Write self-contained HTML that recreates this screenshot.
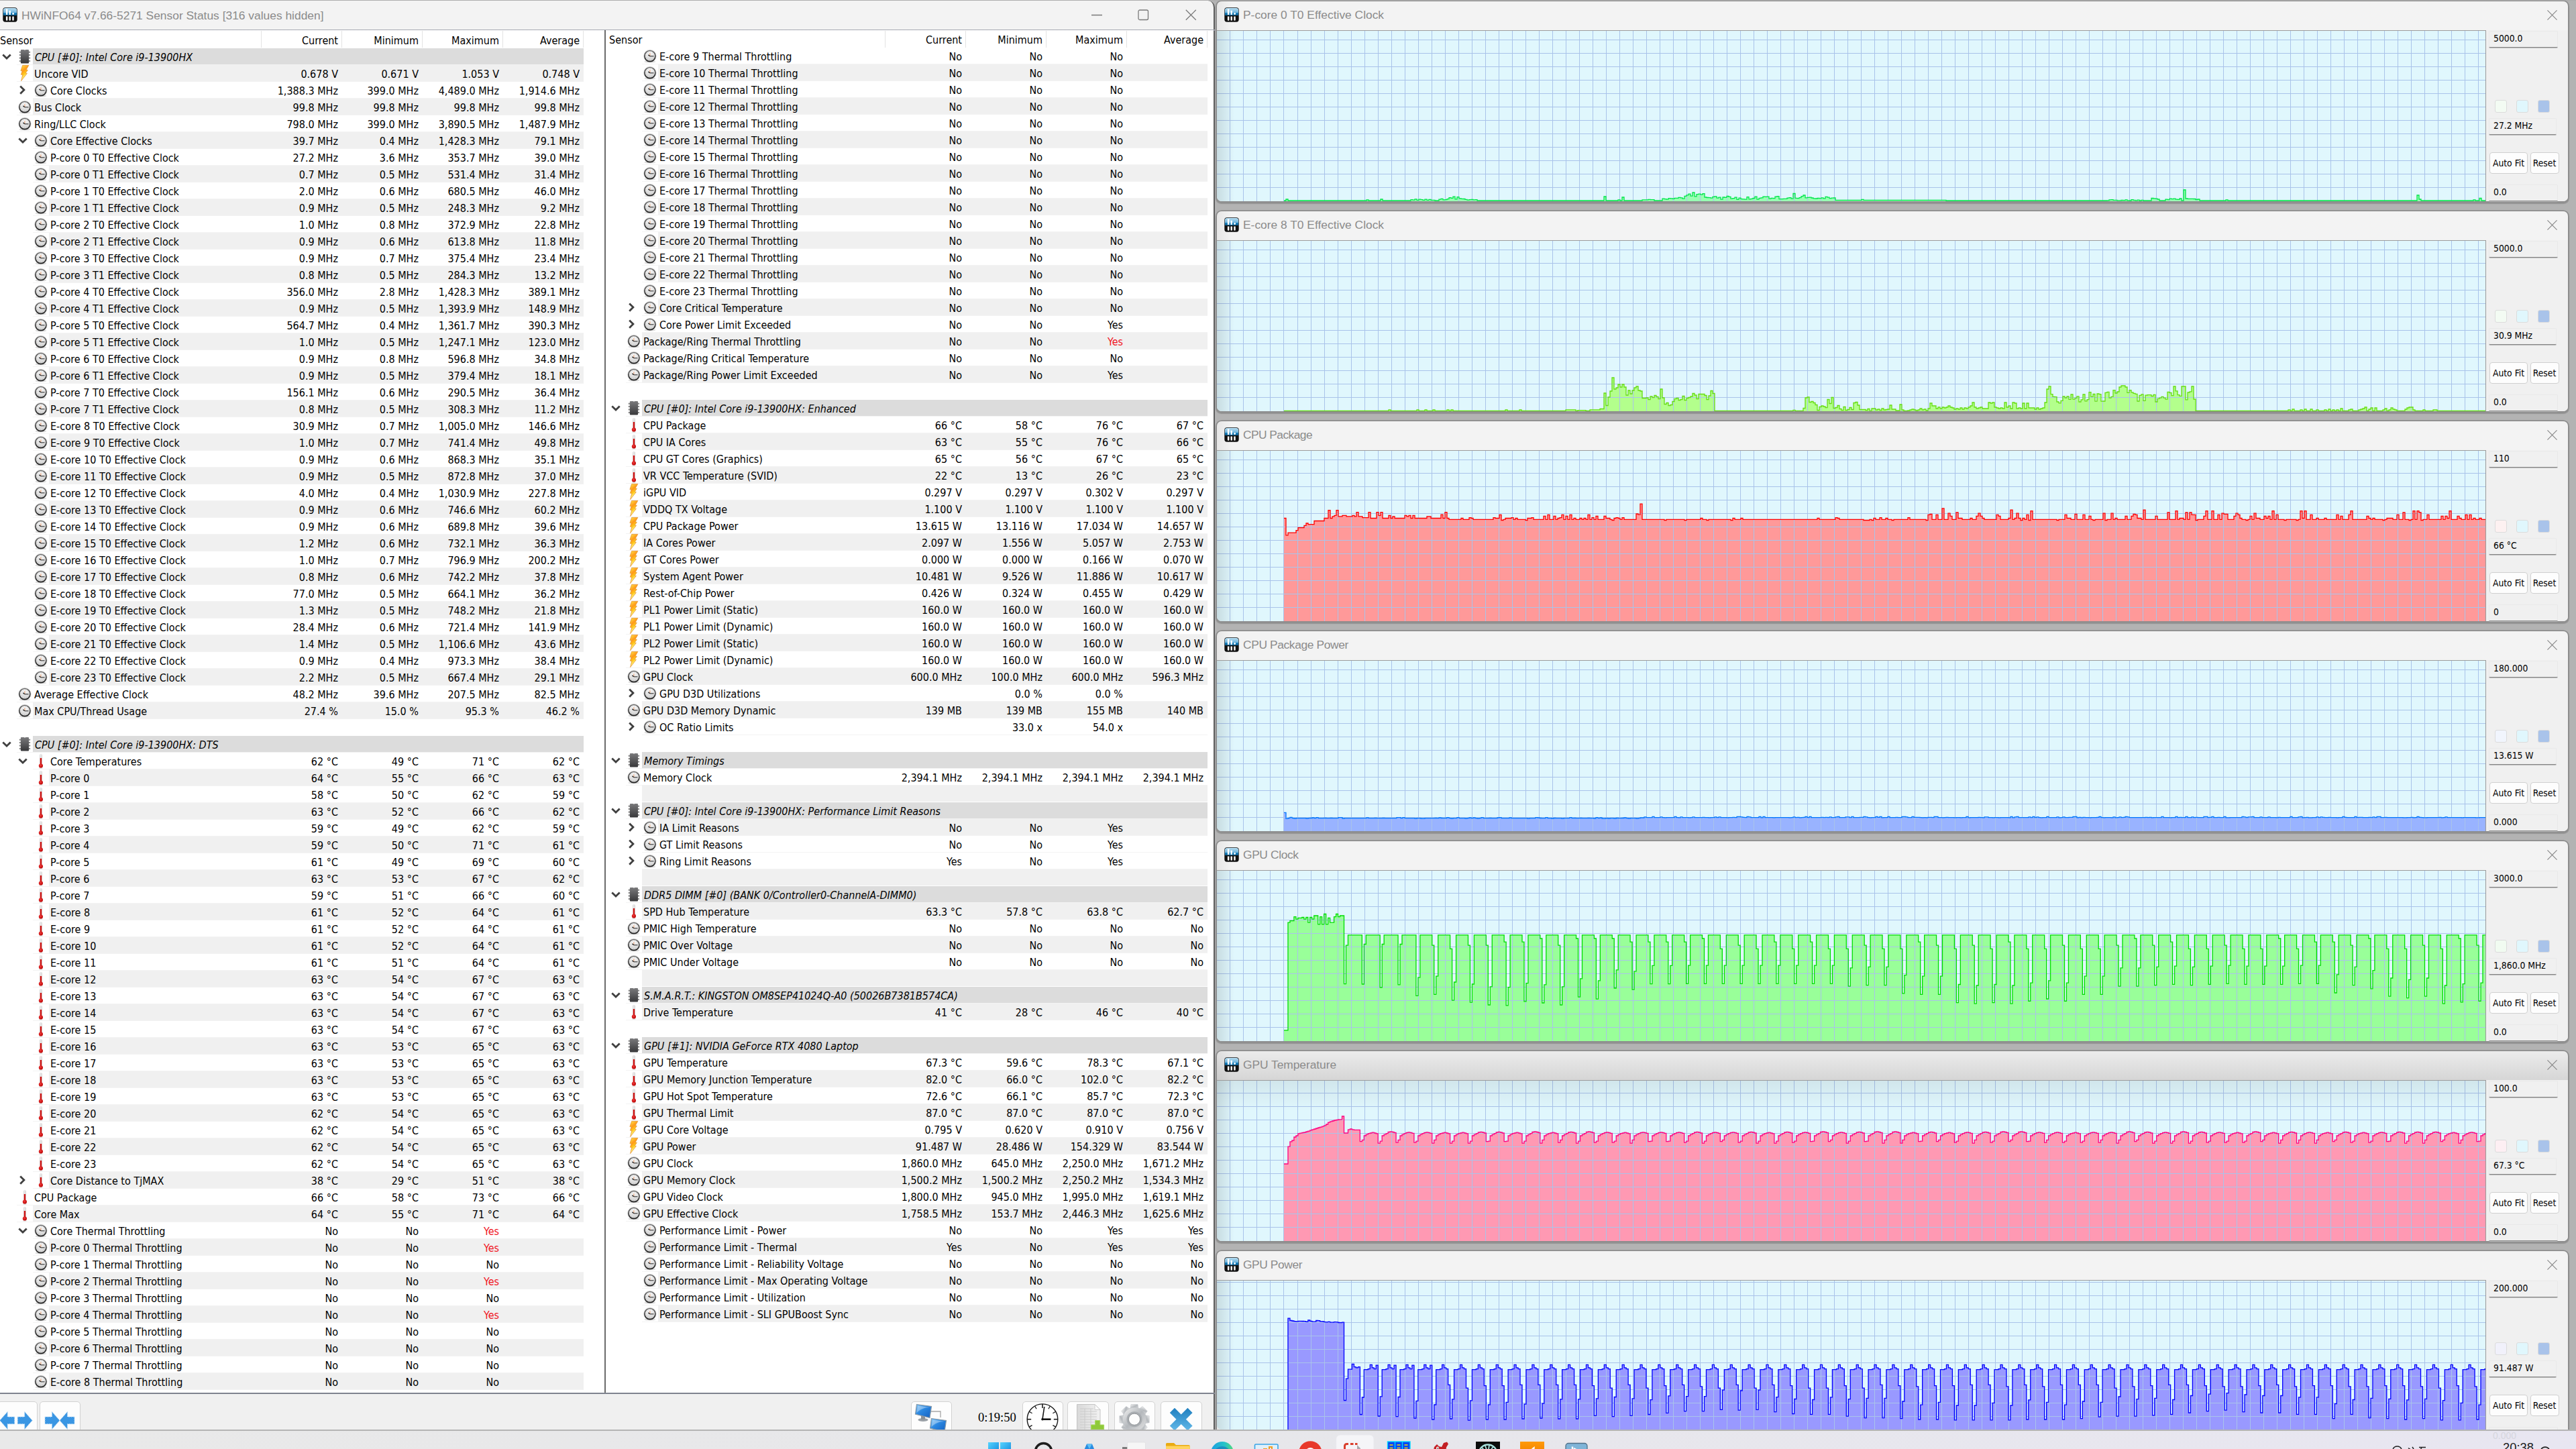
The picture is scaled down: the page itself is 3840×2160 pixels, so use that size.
<!DOCTYPE html>
<html><head><meta charset="utf-8"><title>HWiNFO64 Sensor Status</title>
<style>
*{box-sizing:border-box}
html,body{margin:0;padding:0}
body{width:3840px;height:2160px;position:relative;overflow:hidden;background:#b3b3b3;font-family:"DejaVu Sans Condensed","Liberation Sans",sans-serif;font-size:16px;color:#000}
.abs,.t,.bg,.sep,.ic,.gw,.gsv{position:absolute}
#topline{position:absolute;left:0;top:0;width:3840px;height:1px;background:#adadad;z-index:50}
/* sensor window */
#sw{position:absolute;left:0;top:1px;width:1811px;height:2131px;background:#f3f3f3;border-right:2px solid #5c5c5c;border-top-right-radius:10px;overflow:hidden}
#sw .title{position:absolute;left:32px;top:9.5px;font:17.4px/24px "Liberation Sans",sans-serif;color:#8b8b8b;white-space:pre}
.wb{position:absolute;stroke:#7a7a7a;stroke-width:1.3;fill:none}
#tline{position:absolute;left:0;top:44px;width:1811px;height:2px;background:linear-gradient(#b9bbc3,#6f7380)}
#lp{position:absolute;left:0;top:45px;width:901px;height:2031px;background:#fff}
#div{position:absolute;left:901px;top:45px;width:2px;height:2031px;background:#6b6b6b}
#rp{position:absolute;left:903px;top:45px;width:906px;height:2031px;background:#fff}
.hd{position:absolute;top:49px;height:24px;line-height:24px;white-space:pre}
.hs{position:absolute;top:46px;width:1px;height:25px;background:#e3e3e3}
.t{white-space:pre;line-height:24px;height:25px;padding-top:2px}
.t.i{font-style:italic}
.v{width:120px;text-align:right}
.rd{color:#f0141e}
.bg{height:24px}
.bg.g{background:#f0f0f0}
.bg.gg{background:#dcdcdc}
.sep{height:1px;background:#f3f3f3}
.ic{width:24px;height:25px;overflow:visible}
#bline{position:absolute;left:0;top:2076px;width:1811px;height:2px;background:linear-gradient(#8f93a0,#6f7380)}
#tb{position:absolute;left:0;top:2078px;width:1809px;height:53px;background:#f0f0f0}
.tbb{position:absolute;top:2089px;height:50px;background:#fdfdfd;border:1px solid #d2d2d2;border-radius:5px}
#tm{position:absolute;left:1458px;top:2100.5px;font:18.6px/24px "Liberation Serif",serif;white-space:pre}
/* graph windows */
.gw{left:1814px;width:2014px;background:linear-gradient(90deg,#e6e6e6,#f3f3f3 22px);border-radius:7px;box-shadow:0 0 0 1.7px #8c8c8c,0 2.5px 1px 1.5px #939393}
.gw .ti{position:absolute;width:22px;height:22px}
.shd{position:absolute;left:0;top:0;width:100%;height:43px;border-radius:7px 7px 0 0;background:linear-gradient(rgba(0,0,0,.03),rgba(0,0,0,.12))}
.gt{position:absolute;left:39px;top:8px;font:17.4px/24px "Liberation Sans",sans-serif;color:#8b8b8b;white-space:pre}
.gx{position:absolute;left:1983px;top:13px;width:15px;height:15px;stroke:#858585;stroke-width:1.2;fill:none;overflow:visible}
.side{position:absolute;left:1892px;top:43px;width:122px;background:#f0f0f0;border-bottom-right-radius:7px}
.fld{position:absolute;left:4px;width:103px;height:25px;line-height:20px;padding-left:6px;background:#f0f0f0;border:1px solid #e9e9e9;border-bottom:1px solid #868686;box-shadow:0 1px 0 #bdbdbd;font-size:13.8px;white-space:pre;border-radius:2px}
.sq{position:absolute;width:18px;height:19px;border:1px solid #dcdcdc;border-radius:3px}
.btn{position:absolute;height:32px;line-height:30px;text-align:center;background:#fdfdfd;border:1px solid #d0d0d0;border-radius:4px;font-size:13.8px;white-space:pre}
.gsv{box-sizing:content-box;left:1814px;width:1891px;background:#e0f7fd;border-right:1px solid #9a9a9a;border-top:1px solid #9c9c9c;border-bottom-left-radius:7px}
#task{position:absolute;left:0;top:2131px;width:3840px;height:29px;background:linear-gradient(90deg,#e9e9e9 0%,#e7e7ea 45%,#e8e6f1 100%);border-top:2px solid #b4b4b4;overflow:hidden}
</style></head>
<body>
<svg width="0" height="0" style="position:absolute">
<defs>
<linearGradient id="gface" x1="0" y1="0" x2="0" y2="1"><stop offset="0" stop-color="#fbfbfb"/><stop offset="1" stop-color="#cfcfcf"/></linearGradient>
<linearGradient id="gchip" x1="0" y1="0" x2="0" y2="1"><stop offset="0" stop-color="#7a7a7c"/><stop offset="1" stop-color="#38383a"/></linearGradient>
<linearGradient id="gbolt" x1="0" y1="0" x2="0.4" y2="1"><stop offset="0" stop-color="#ffe94a"/><stop offset="0.4" stop-color="#ff9a1a"/><stop offset="0.62" stop-color="#ffc81a"/><stop offset="0.8" stop-color="#fff07a"/><stop offset="1" stop-color="#f08a10"/></linearGradient>
<linearGradient id="gtube" x1="0" y1="0" x2="1" y2="0"><stop offset="0" stop-color="#c9c9c9"/><stop offset="0.5" stop-color="#f6f6f6"/><stop offset="1" stop-color="#bdbdbd"/></linearGradient>
<linearGradient id="ghw" x1="0" y1="0" x2="0" y2="1"><stop offset="0" stop-color="#b8def2"/><stop offset="0.62" stop-color="#6fb4dc"/><stop offset="0.64" stop-color="#1b86c4"/><stop offset="1" stop-color="#085a8c"/></linearGradient>
<radialGradient id="gbulb" cx="0.4" cy="0.35" r="0.7"><stop offset="0" stop-color="#f03c3c"/><stop offset="1" stop-color="#b80000"/></radialGradient>
<linearGradient id="gsh" x1="0" y1="0" x2="1" y2="0"><stop offset="0" stop-color="#000" stop-opacity=".11"/><stop offset="1" stop-color="#000" stop-opacity="0"/></linearGradient>
<linearGradient id="gsv2" x1="0" y1="0" x2="0" y2="1"><stop offset="0" stop-color="#000" stop-opacity=".07"/><stop offset="1" stop-color="#000" stop-opacity="0"/></linearGradient>
<linearGradient id="gring" x1="0" y1="0" x2="0" y2="1"><stop offset="0" stop-color="#6e6e6e"/><stop offset="1" stop-color="#1c1c1c"/></linearGradient>
<symbol id="cv" overflow="visible"><path d="M4.3 9.4L10 15.1L15.7 9.4" fill="none" stroke="#404040" stroke-width="2.8"/></symbol>
<symbol id="cr" overflow="visible"><path d="M6.2 6.4L11.9 12.1L6.2 17.8" fill="none" stroke="#404040" stroke-width="2.8"/></symbol>
<symbol id="clock" overflow="visible"><ellipse cx="12.9" cy="21" rx="8.5" ry="1.6" fill="#000" opacity=".13"/><circle cx="12.9" cy="12.6" r="8.1" fill="url(#gface)" stroke="url(#gring)" stroke-width="1.7"/><circle cx="12.9" cy="12.6" r="5.9" fill="none" stroke="#9a9a9a" stroke-width=".9" stroke-dasharray=".7 2.39" opacity=".8"/><circle cx="12.9" cy="12.5" r="9.2" fill="none" stroke="#9a9a9a" stroke-width=".6" opacity=".6"/><path d="M12.9 12.7V8.2" stroke="#f0a070" stroke-width="1"/><path d="M12.9 12.8H18.5" stroke="#333" stroke-width="1.1"/><path d="M12.9 12.7L10.4 10.9" stroke="#222" stroke-width="1.3"/></symbol>
<symbol id="therm" overflow="visible"><ellipse cx="12.9" cy="23" rx="3" ry=".8" fill="#000" opacity=".15"/><rect x="11.3" y="2.2" width="3.3" height="16" rx="1.6" fill="url(#gtube)" stroke="#d8d8d8" stroke-width=".4"/><rect x="11.75" y="8" width="2.4" height="10" fill="#cf1414"/><circle cx="12.9" cy="19.5" r="3.1" fill="url(#gbulb)"/></symbol>
<symbol id="bolt" overflow="visible"><path d="M9.6 .4L18.8 .4L15 7L17.4 7.4L14 12L16.4 12.4L7.6 23.6L9.8 14.2L7.4 14.2L9.2 8.6L6.9 8.6Z" fill="url(#gbolt)" stroke="#e28a24" stroke-width=".7" stroke-linejoin="round"/></symbol>
<symbol id="chip" overflow="visible"><circle cx="5.9" cy="5.8" r="1.25" fill="#8a8a8a"/><circle cx="5.9" cy="10.1" r="1.25" fill="#8a8a8a"/><circle cx="5.9" cy="14.5" r="1.25" fill="#8a8a8a"/><circle cx="5.9" cy="18.9" r="1.25" fill="#8a8a8a"/><circle cx="20" cy="5.8" r="1.25" fill="#8a8a8a"/><circle cx="20" cy="10.1" r="1.25" fill="#8a8a8a"/><circle cx="20" cy="14.5" r="1.25" fill="#8a8a8a"/><circle cx="20" cy="18.9" r="1.25" fill="#8a8a8a"/><rect x="6.9" y="2" width="12.1" height="20.5" rx="1" fill="url(#gchip)"/><path d="M11.6 2L13 3.3L14.4 2Z" fill="#c8c8c8"/></symbol>
<symbol id="hw" viewBox="0 0 22 22"><rect x=".3" y=".3" width="21.4" height="21.4" rx="3.6" fill="#101010"/><path d="M.9 12V4A3.2 3.2 0 0 1 4.1 .9H17.9A3.2 3.2 0 0 1 21.1 4V12Z" fill="url(#ghw)"/><path d="M4.9 2.4h2.5v8.5H4.9zM9.5 4.7h2.4v6.2H9.5z" fill="#fff"/><circle cx="15.6" cy="9.5" r="1.45" fill="#fff"/><path d="M4.9 13.4h2.5v5.2a1.25 1.25 0 0 1-2.5 0zM9.5 13.4h2.4v5.2a1.2 1.2 0 0 1-2.4 0zM14.3 13.4h2.4v5.2a1.2 1.2 0 0 1-2.4 0z" fill="#fff"/></symbol>
</defs></svg>

<div id="sw">
<svg class="ti abs" style="left:4px;top:10px;width:22px;height:22px"><use href="#hw"/></svg>
<span class="title">HWiNFO64 v7.66-5271 Sensor Status [316 values hidden]</span>
<svg class="wb" style="left:1627px;top:20px;width:17px;height:3px"><path d="M0 1.5H16"/></svg>
<svg class="wb" style="left:1696px;top:13px;width:17px;height:17px"><rect x="1" y="1" width="14.5" height="14.5" rx="2"/></svg>
<svg class="wb" style="left:1767px;top:13px;width:17px;height:17px"><path d="M.8.8L15.8 15.8M15.8.8L.8 15.8"/></svg>
</div>
<div id="tline"></div>
<div id="lp"></div><div id="div"></div><div id="rp"></div>

<!-- headers -->
<span class="hd" style="left:0">Sensor</span>
<span class="hd v" style="left:384px">Current</span><span class="hd v" style="left:504px">Minimum</span><span class="hd v" style="left:624px">Maximum</span><span class="hd v" style="left:744px">Average</span>
<i class="hs" style="left:389px"></i><i class="hs" style="left:509px"></i><i class="hs" style="left:629px"></i><i class="hs" style="left:749px"></i><i class="hs" style="left:869px"></i>
<span class="hd" style="left:908px;top:48px">Sensor</span>
<span class="hd v" style="left:1314px;top:48px">Current</span><span class="hd v" style="left:1434px;top:48px">Minimum</span><span class="hd v" style="left:1554px;top:48px">Maximum</span><span class="hd v" style="left:1674px;top:48px">Average</span>
<i class="hs" style="left:1319px"></i><i class="hs" style="left:1439px"></i><i class="hs" style="left:1559px"></i><i class="hs" style="left:1679px"></i><i class="hs" style="left:1799px"></i>

<!-- left rows -->
<div class="sep" style="left:25px;top:96px;width:845px"></div>
<div class="bg gg" style="left:49px;top:72px;width:821px"></div>
<svg class="ic" style="left:0px;top:72px"><use href="#cv"/></svg>
<svg class="ic" style="left:24px;top:72px"><use href="#chip"/></svg>
<span class="t i" style="left:52px;top:72px">CPU [#0]: Intel Core i9-13900HX</span>
<div class="sep" style="left:25px;top:121px;width:845px"></div>
<div class="bg g" style="left:49px;top:97px;width:821px"></div>
<svg class="ic" style="left:24px;top:97px"><use href="#bolt"/></svg>
<span class="t" style="left:51px;top:97px">Uncore VID</span>
<span class="t v" style="left:384px;top:97px">0.678 V</span>
<span class="t v" style="left:504px;top:97px">0.671 V</span>
<span class="t v" style="left:624px;top:97px">1.053 V</span>
<span class="t v" style="left:744px;top:97px">0.748 V</span>
<div class="sep" style="left:49px;top:146px;width:821px"></div>
<svg class="ic" style="left:24px;top:122px"><use href="#cr"/></svg>
<svg class="ic" style="left:48px;top:122px"><use href="#clock"/></svg>
<span class="t" style="left:75px;top:122px">Core Clocks</span>
<span class="t v" style="left:384px;top:122px">1,388.3 MHz</span>
<span class="t v" style="left:504px;top:122px">399.0 MHz</span>
<span class="t v" style="left:624px;top:122px">4,489.0 MHz</span>
<span class="t v" style="left:744px;top:122px">1,914.6 MHz</span>
<div class="sep" style="left:25px;top:171px;width:845px"></div>
<div class="bg g" style="left:49px;top:147px;width:821px"></div>
<svg class="ic" style="left:24px;top:147px"><use href="#clock"/></svg>
<span class="t" style="left:51px;top:147px">Bus Clock</span>
<span class="t v" style="left:384px;top:147px">99.8 MHz</span>
<span class="t v" style="left:504px;top:147px">99.8 MHz</span>
<span class="t v" style="left:624px;top:147px">99.8 MHz</span>
<span class="t v" style="left:744px;top:147px">99.8 MHz</span>
<div class="sep" style="left:25px;top:196px;width:845px"></div>
<svg class="ic" style="left:24px;top:172px"><use href="#clock"/></svg>
<span class="t" style="left:51px;top:172px">Ring/LLC Clock</span>
<span class="t v" style="left:384px;top:172px">798.0 MHz</span>
<span class="t v" style="left:504px;top:172px">399.0 MHz</span>
<span class="t v" style="left:624px;top:172px">3,890.5 MHz</span>
<span class="t v" style="left:744px;top:172px">1,487.9 MHz</span>
<div class="sep" style="left:49px;top:221px;width:821px"></div>
<div class="bg g" style="left:73px;top:197px;width:797px"></div>
<svg class="ic" style="left:24px;top:197px"><use href="#cv"/></svg>
<svg class="ic" style="left:48px;top:197px"><use href="#clock"/></svg>
<span class="t" style="left:75px;top:197px">Core Effective Clocks</span>
<span class="t v" style="left:384px;top:197px">39.7 MHz</span>
<span class="t v" style="left:504px;top:197px">0.4 MHz</span>
<span class="t v" style="left:624px;top:197px">1,428.3 MHz</span>
<span class="t v" style="left:744px;top:197px">79.1 MHz</span>
<div class="sep" style="left:49px;top:246px;width:821px"></div>
<svg class="ic" style="left:48px;top:222px"><use href="#clock"/></svg>
<span class="t" style="left:75px;top:222px">P-core 0 T0 Effective Clock</span>
<span class="t v" style="left:384px;top:222px">27.2 MHz</span>
<span class="t v" style="left:504px;top:222px">3.6 MHz</span>
<span class="t v" style="left:624px;top:222px">353.7 MHz</span>
<span class="t v" style="left:744px;top:222px">39.0 MHz</span>
<div class="sep" style="left:49px;top:271px;width:821px"></div>
<div class="bg g" style="left:73px;top:247px;width:797px"></div>
<svg class="ic" style="left:48px;top:247px"><use href="#clock"/></svg>
<span class="t" style="left:75px;top:247px">P-core 0 T1 Effective Clock</span>
<span class="t v" style="left:384px;top:247px">0.7 MHz</span>
<span class="t v" style="left:504px;top:247px">0.5 MHz</span>
<span class="t v" style="left:624px;top:247px">531.4 MHz</span>
<span class="t v" style="left:744px;top:247px">31.4 MHz</span>
<div class="sep" style="left:49px;top:296px;width:821px"></div>
<svg class="ic" style="left:48px;top:272px"><use href="#clock"/></svg>
<span class="t" style="left:75px;top:272px">P-core 1 T0 Effective Clock</span>
<span class="t v" style="left:384px;top:272px">2.0 MHz</span>
<span class="t v" style="left:504px;top:272px">0.6 MHz</span>
<span class="t v" style="left:624px;top:272px">680.5 MHz</span>
<span class="t v" style="left:744px;top:272px">46.0 MHz</span>
<div class="sep" style="left:49px;top:321px;width:821px"></div>
<div class="bg g" style="left:73px;top:297px;width:797px"></div>
<svg class="ic" style="left:48px;top:297px"><use href="#clock"/></svg>
<span class="t" style="left:75px;top:297px">P-core 1 T1 Effective Clock</span>
<span class="t v" style="left:384px;top:297px">0.9 MHz</span>
<span class="t v" style="left:504px;top:297px">0.5 MHz</span>
<span class="t v" style="left:624px;top:297px">248.3 MHz</span>
<span class="t v" style="left:744px;top:297px">9.2 MHz</span>
<div class="sep" style="left:49px;top:346px;width:821px"></div>
<svg class="ic" style="left:48px;top:322px"><use href="#clock"/></svg>
<span class="t" style="left:75px;top:322px">P-core 2 T0 Effective Clock</span>
<span class="t v" style="left:384px;top:322px">1.0 MHz</span>
<span class="t v" style="left:504px;top:322px">0.8 MHz</span>
<span class="t v" style="left:624px;top:322px">372.9 MHz</span>
<span class="t v" style="left:744px;top:322px">22.8 MHz</span>
<div class="sep" style="left:49px;top:371px;width:821px"></div>
<div class="bg g" style="left:73px;top:347px;width:797px"></div>
<svg class="ic" style="left:48px;top:347px"><use href="#clock"/></svg>
<span class="t" style="left:75px;top:347px">P-core 2 T1 Effective Clock</span>
<span class="t v" style="left:384px;top:347px">0.9 MHz</span>
<span class="t v" style="left:504px;top:347px">0.6 MHz</span>
<span class="t v" style="left:624px;top:347px">613.8 MHz</span>
<span class="t v" style="left:744px;top:347px">11.8 MHz</span>
<div class="sep" style="left:49px;top:396px;width:821px"></div>
<svg class="ic" style="left:48px;top:372px"><use href="#clock"/></svg>
<span class="t" style="left:75px;top:372px">P-core 3 T0 Effective Clock</span>
<span class="t v" style="left:384px;top:372px">0.9 MHz</span>
<span class="t v" style="left:504px;top:372px">0.7 MHz</span>
<span class="t v" style="left:624px;top:372px">375.4 MHz</span>
<span class="t v" style="left:744px;top:372px">23.4 MHz</span>
<div class="sep" style="left:49px;top:421px;width:821px"></div>
<div class="bg g" style="left:73px;top:397px;width:797px"></div>
<svg class="ic" style="left:48px;top:397px"><use href="#clock"/></svg>
<span class="t" style="left:75px;top:397px">P-core 3 T1 Effective Clock</span>
<span class="t v" style="left:384px;top:397px">0.8 MHz</span>
<span class="t v" style="left:504px;top:397px">0.5 MHz</span>
<span class="t v" style="left:624px;top:397px">284.3 MHz</span>
<span class="t v" style="left:744px;top:397px">13.2 MHz</span>
<div class="sep" style="left:49px;top:446px;width:821px"></div>
<svg class="ic" style="left:48px;top:422px"><use href="#clock"/></svg>
<span class="t" style="left:75px;top:422px">P-core 4 T0 Effective Clock</span>
<span class="t v" style="left:384px;top:422px">356.0 MHz</span>
<span class="t v" style="left:504px;top:422px">2.8 MHz</span>
<span class="t v" style="left:624px;top:422px">1,428.3 MHz</span>
<span class="t v" style="left:744px;top:422px">389.1 MHz</span>
<div class="sep" style="left:49px;top:471px;width:821px"></div>
<div class="bg g" style="left:73px;top:447px;width:797px"></div>
<svg class="ic" style="left:48px;top:447px"><use href="#clock"/></svg>
<span class="t" style="left:75px;top:447px">P-core 4 T1 Effective Clock</span>
<span class="t v" style="left:384px;top:447px">0.9 MHz</span>
<span class="t v" style="left:504px;top:447px">0.5 MHz</span>
<span class="t v" style="left:624px;top:447px">1,393.9 MHz</span>
<span class="t v" style="left:744px;top:447px">148.9 MHz</span>
<div class="sep" style="left:49px;top:496px;width:821px"></div>
<svg class="ic" style="left:48px;top:472px"><use href="#clock"/></svg>
<span class="t" style="left:75px;top:472px">P-core 5 T0 Effective Clock</span>
<span class="t v" style="left:384px;top:472px">564.7 MHz</span>
<span class="t v" style="left:504px;top:472px">0.4 MHz</span>
<span class="t v" style="left:624px;top:472px">1,361.7 MHz</span>
<span class="t v" style="left:744px;top:472px">390.3 MHz</span>
<div class="sep" style="left:49px;top:521px;width:821px"></div>
<div class="bg g" style="left:73px;top:497px;width:797px"></div>
<svg class="ic" style="left:48px;top:497px"><use href="#clock"/></svg>
<span class="t" style="left:75px;top:497px">P-core 5 T1 Effective Clock</span>
<span class="t v" style="left:384px;top:497px">1.0 MHz</span>
<span class="t v" style="left:504px;top:497px">0.5 MHz</span>
<span class="t v" style="left:624px;top:497px">1,247.1 MHz</span>
<span class="t v" style="left:744px;top:497px">123.0 MHz</span>
<div class="sep" style="left:49px;top:546px;width:821px"></div>
<svg class="ic" style="left:48px;top:522px"><use href="#clock"/></svg>
<span class="t" style="left:75px;top:522px">P-core 6 T0 Effective Clock</span>
<span class="t v" style="left:384px;top:522px">0.9 MHz</span>
<span class="t v" style="left:504px;top:522px">0.8 MHz</span>
<span class="t v" style="left:624px;top:522px">596.8 MHz</span>
<span class="t v" style="left:744px;top:522px">34.8 MHz</span>
<div class="sep" style="left:49px;top:571px;width:821px"></div>
<div class="bg g" style="left:73px;top:547px;width:797px"></div>
<svg class="ic" style="left:48px;top:547px"><use href="#clock"/></svg>
<span class="t" style="left:75px;top:547px">P-core 6 T1 Effective Clock</span>
<span class="t v" style="left:384px;top:547px">0.9 MHz</span>
<span class="t v" style="left:504px;top:547px">0.5 MHz</span>
<span class="t v" style="left:624px;top:547px">379.4 MHz</span>
<span class="t v" style="left:744px;top:547px">18.1 MHz</span>
<div class="sep" style="left:49px;top:596px;width:821px"></div>
<svg class="ic" style="left:48px;top:572px"><use href="#clock"/></svg>
<span class="t" style="left:75px;top:572px">P-core 7 T0 Effective Clock</span>
<span class="t v" style="left:384px;top:572px">156.1 MHz</span>
<span class="t v" style="left:504px;top:572px">0.6 MHz</span>
<span class="t v" style="left:624px;top:572px">290.5 MHz</span>
<span class="t v" style="left:744px;top:572px">36.4 MHz</span>
<div class="sep" style="left:49px;top:621px;width:821px"></div>
<div class="bg g" style="left:73px;top:597px;width:797px"></div>
<svg class="ic" style="left:48px;top:597px"><use href="#clock"/></svg>
<span class="t" style="left:75px;top:597px">P-core 7 T1 Effective Clock</span>
<span class="t v" style="left:384px;top:597px">0.8 MHz</span>
<span class="t v" style="left:504px;top:597px">0.5 MHz</span>
<span class="t v" style="left:624px;top:597px">308.3 MHz</span>
<span class="t v" style="left:744px;top:597px">11.2 MHz</span>
<div class="sep" style="left:49px;top:646px;width:821px"></div>
<svg class="ic" style="left:48px;top:622px"><use href="#clock"/></svg>
<span class="t" style="left:75px;top:622px">E-core 8 T0 Effective Clock</span>
<span class="t v" style="left:384px;top:622px">30.9 MHz</span>
<span class="t v" style="left:504px;top:622px">0.7 MHz</span>
<span class="t v" style="left:624px;top:622px">1,005.0 MHz</span>
<span class="t v" style="left:744px;top:622px">146.6 MHz</span>
<div class="sep" style="left:49px;top:671px;width:821px"></div>
<div class="bg g" style="left:73px;top:647px;width:797px"></div>
<svg class="ic" style="left:48px;top:647px"><use href="#clock"/></svg>
<span class="t" style="left:75px;top:647px">E-core 9 T0 Effective Clock</span>
<span class="t v" style="left:384px;top:647px">1.0 MHz</span>
<span class="t v" style="left:504px;top:647px">0.7 MHz</span>
<span class="t v" style="left:624px;top:647px">741.4 MHz</span>
<span class="t v" style="left:744px;top:647px">49.8 MHz</span>
<div class="sep" style="left:49px;top:696px;width:821px"></div>
<svg class="ic" style="left:48px;top:672px"><use href="#clock"/></svg>
<span class="t" style="left:75px;top:672px">E-core 10 T0 Effective Clock</span>
<span class="t v" style="left:384px;top:672px">0.9 MHz</span>
<span class="t v" style="left:504px;top:672px">0.6 MHz</span>
<span class="t v" style="left:624px;top:672px">868.3 MHz</span>
<span class="t v" style="left:744px;top:672px">35.1 MHz</span>
<div class="sep" style="left:49px;top:721px;width:821px"></div>
<div class="bg g" style="left:73px;top:697px;width:797px"></div>
<svg class="ic" style="left:48px;top:697px"><use href="#clock"/></svg>
<span class="t" style="left:75px;top:697px">E-core 11 T0 Effective Clock</span>
<span class="t v" style="left:384px;top:697px">0.9 MHz</span>
<span class="t v" style="left:504px;top:697px">0.5 MHz</span>
<span class="t v" style="left:624px;top:697px">872.8 MHz</span>
<span class="t v" style="left:744px;top:697px">37.0 MHz</span>
<div class="sep" style="left:49px;top:746px;width:821px"></div>
<svg class="ic" style="left:48px;top:722px"><use href="#clock"/></svg>
<span class="t" style="left:75px;top:722px">E-core 12 T0 Effective Clock</span>
<span class="t v" style="left:384px;top:722px">4.0 MHz</span>
<span class="t v" style="left:504px;top:722px">0.4 MHz</span>
<span class="t v" style="left:624px;top:722px">1,030.9 MHz</span>
<span class="t v" style="left:744px;top:722px">227.8 MHz</span>
<div class="sep" style="left:49px;top:771px;width:821px"></div>
<div class="bg g" style="left:73px;top:747px;width:797px"></div>
<svg class="ic" style="left:48px;top:747px"><use href="#clock"/></svg>
<span class="t" style="left:75px;top:747px">E-core 13 T0 Effective Clock</span>
<span class="t v" style="left:384px;top:747px">0.9 MHz</span>
<span class="t v" style="left:504px;top:747px">0.6 MHz</span>
<span class="t v" style="left:624px;top:747px">746.6 MHz</span>
<span class="t v" style="left:744px;top:747px">60.2 MHz</span>
<div class="sep" style="left:49px;top:796px;width:821px"></div>
<svg class="ic" style="left:48px;top:772px"><use href="#clock"/></svg>
<span class="t" style="left:75px;top:772px">E-core 14 T0 Effective Clock</span>
<span class="t v" style="left:384px;top:772px">0.9 MHz</span>
<span class="t v" style="left:504px;top:772px">0.6 MHz</span>
<span class="t v" style="left:624px;top:772px">689.8 MHz</span>
<span class="t v" style="left:744px;top:772px">39.6 MHz</span>
<div class="sep" style="left:49px;top:821px;width:821px"></div>
<div class="bg g" style="left:73px;top:797px;width:797px"></div>
<svg class="ic" style="left:48px;top:797px"><use href="#clock"/></svg>
<span class="t" style="left:75px;top:797px">E-core 15 T0 Effective Clock</span>
<span class="t v" style="left:384px;top:797px">1.2 MHz</span>
<span class="t v" style="left:504px;top:797px">0.6 MHz</span>
<span class="t v" style="left:624px;top:797px">732.1 MHz</span>
<span class="t v" style="left:744px;top:797px">36.3 MHz</span>
<div class="sep" style="left:49px;top:846px;width:821px"></div>
<svg class="ic" style="left:48px;top:822px"><use href="#clock"/></svg>
<span class="t" style="left:75px;top:822px">E-core 16 T0 Effective Clock</span>
<span class="t v" style="left:384px;top:822px">1.0 MHz</span>
<span class="t v" style="left:504px;top:822px">0.7 MHz</span>
<span class="t v" style="left:624px;top:822px">796.9 MHz</span>
<span class="t v" style="left:744px;top:822px">200.2 MHz</span>
<div class="sep" style="left:49px;top:871px;width:821px"></div>
<div class="bg g" style="left:73px;top:847px;width:797px"></div>
<svg class="ic" style="left:48px;top:847px"><use href="#clock"/></svg>
<span class="t" style="left:75px;top:847px">E-core 17 T0 Effective Clock</span>
<span class="t v" style="left:384px;top:847px">0.8 MHz</span>
<span class="t v" style="left:504px;top:847px">0.6 MHz</span>
<span class="t v" style="left:624px;top:847px">742.2 MHz</span>
<span class="t v" style="left:744px;top:847px">37.8 MHz</span>
<div class="sep" style="left:49px;top:896px;width:821px"></div>
<svg class="ic" style="left:48px;top:872px"><use href="#clock"/></svg>
<span class="t" style="left:75px;top:872px">E-core 18 T0 Effective Clock</span>
<span class="t v" style="left:384px;top:872px">77.0 MHz</span>
<span class="t v" style="left:504px;top:872px">0.5 MHz</span>
<span class="t v" style="left:624px;top:872px">664.1 MHz</span>
<span class="t v" style="left:744px;top:872px">36.2 MHz</span>
<div class="sep" style="left:49px;top:921px;width:821px"></div>
<div class="bg g" style="left:73px;top:897px;width:797px"></div>
<svg class="ic" style="left:48px;top:897px"><use href="#clock"/></svg>
<span class="t" style="left:75px;top:897px">E-core 19 T0 Effective Clock</span>
<span class="t v" style="left:384px;top:897px">1.3 MHz</span>
<span class="t v" style="left:504px;top:897px">0.5 MHz</span>
<span class="t v" style="left:624px;top:897px">748.2 MHz</span>
<span class="t v" style="left:744px;top:897px">21.8 MHz</span>
<div class="sep" style="left:49px;top:946px;width:821px"></div>
<svg class="ic" style="left:48px;top:922px"><use href="#clock"/></svg>
<span class="t" style="left:75px;top:922px">E-core 20 T0 Effective Clock</span>
<span class="t v" style="left:384px;top:922px">28.4 MHz</span>
<span class="t v" style="left:504px;top:922px">0.6 MHz</span>
<span class="t v" style="left:624px;top:922px">721.4 MHz</span>
<span class="t v" style="left:744px;top:922px">141.9 MHz</span>
<div class="sep" style="left:49px;top:971px;width:821px"></div>
<div class="bg g" style="left:73px;top:947px;width:797px"></div>
<svg class="ic" style="left:48px;top:947px"><use href="#clock"/></svg>
<span class="t" style="left:75px;top:947px">E-core 21 T0 Effective Clock</span>
<span class="t v" style="left:384px;top:947px">1.4 MHz</span>
<span class="t v" style="left:504px;top:947px">0.5 MHz</span>
<span class="t v" style="left:624px;top:947px">1,106.6 MHz</span>
<span class="t v" style="left:744px;top:947px">43.6 MHz</span>
<div class="sep" style="left:49px;top:996px;width:821px"></div>
<svg class="ic" style="left:48px;top:972px"><use href="#clock"/></svg>
<span class="t" style="left:75px;top:972px">E-core 22 T0 Effective Clock</span>
<span class="t v" style="left:384px;top:972px">0.9 MHz</span>
<span class="t v" style="left:504px;top:972px">0.4 MHz</span>
<span class="t v" style="left:624px;top:972px">973.3 MHz</span>
<span class="t v" style="left:744px;top:972px">38.4 MHz</span>
<div class="sep" style="left:49px;top:1021px;width:821px"></div>
<div class="bg g" style="left:73px;top:997px;width:797px"></div>
<svg class="ic" style="left:48px;top:997px"><use href="#clock"/></svg>
<span class="t" style="left:75px;top:997px">E-core 23 T0 Effective Clock</span>
<span class="t v" style="left:384px;top:997px">2.2 MHz</span>
<span class="t v" style="left:504px;top:997px">0.5 MHz</span>
<span class="t v" style="left:624px;top:997px">667.4 MHz</span>
<span class="t v" style="left:744px;top:997px">29.1 MHz</span>
<div class="sep" style="left:25px;top:1046px;width:845px"></div>
<svg class="ic" style="left:24px;top:1022px"><use href="#clock"/></svg>
<span class="t" style="left:51px;top:1022px">Average Effective Clock</span>
<span class="t v" style="left:384px;top:1022px">48.2 MHz</span>
<span class="t v" style="left:504px;top:1022px">39.6 MHz</span>
<span class="t v" style="left:624px;top:1022px">207.5 MHz</span>
<span class="t v" style="left:744px;top:1022px">82.5 MHz</span>
<div class="sep" style="left:25px;top:1071px;width:845px"></div>
<div class="bg g" style="left:49px;top:1047px;width:821px"></div>
<svg class="ic" style="left:24px;top:1047px"><use href="#clock"/></svg>
<span class="t" style="left:51px;top:1047px">Max CPU/Thread Usage</span>
<span class="t v" style="left:384px;top:1047px">27.4 %</span>
<span class="t v" style="left:504px;top:1047px">15.0 %</span>
<span class="t v" style="left:624px;top:1047px">95.3 %</span>
<span class="t v" style="left:744px;top:1047px">46.2 %</span>
<div class="sep" style="left:25px;top:1121px;width:845px"></div>
<div class="bg gg" style="left:49px;top:1097px;width:821px"></div>
<svg class="ic" style="left:0px;top:1097px"><use href="#cv"/></svg>
<svg class="ic" style="left:24px;top:1097px"><use href="#chip"/></svg>
<span class="t i" style="left:52px;top:1097px">CPU [#0]: Intel Core i9-13900HX: DTS</span>
<div class="sep" style="left:49px;top:1146px;width:821px"></div>
<svg class="ic" style="left:24px;top:1122px"><use href="#cv"/></svg>
<svg class="ic" style="left:48px;top:1122px"><use href="#therm"/></svg>
<span class="t" style="left:75px;top:1122px">Core Temperatures</span>
<span class="t v" style="left:384px;top:1122px">62 °C</span>
<span class="t v" style="left:504px;top:1122px">49 °C</span>
<span class="t v" style="left:624px;top:1122px">71 °C</span>
<span class="t v" style="left:744px;top:1122px">62 °C</span>
<div class="sep" style="left:49px;top:1171px;width:821px"></div>
<div class="bg g" style="left:73px;top:1147px;width:797px"></div>
<svg class="ic" style="left:48px;top:1147px"><use href="#therm"/></svg>
<span class="t" style="left:75px;top:1147px">P-core 0</span>
<span class="t v" style="left:384px;top:1147px">64 °C</span>
<span class="t v" style="left:504px;top:1147px">55 °C</span>
<span class="t v" style="left:624px;top:1147px">66 °C</span>
<span class="t v" style="left:744px;top:1147px">63 °C</span>
<div class="sep" style="left:49px;top:1196px;width:821px"></div>
<svg class="ic" style="left:48px;top:1172px"><use href="#therm"/></svg>
<span class="t" style="left:75px;top:1172px">P-core 1</span>
<span class="t v" style="left:384px;top:1172px">58 °C</span>
<span class="t v" style="left:504px;top:1172px">50 °C</span>
<span class="t v" style="left:624px;top:1172px">62 °C</span>
<span class="t v" style="left:744px;top:1172px">59 °C</span>
<div class="sep" style="left:49px;top:1221px;width:821px"></div>
<div class="bg g" style="left:73px;top:1197px;width:797px"></div>
<svg class="ic" style="left:48px;top:1197px"><use href="#therm"/></svg>
<span class="t" style="left:75px;top:1197px">P-core 2</span>
<span class="t v" style="left:384px;top:1197px">63 °C</span>
<span class="t v" style="left:504px;top:1197px">52 °C</span>
<span class="t v" style="left:624px;top:1197px">66 °C</span>
<span class="t v" style="left:744px;top:1197px">62 °C</span>
<div class="sep" style="left:49px;top:1246px;width:821px"></div>
<svg class="ic" style="left:48px;top:1222px"><use href="#therm"/></svg>
<span class="t" style="left:75px;top:1222px">P-core 3</span>
<span class="t v" style="left:384px;top:1222px">59 °C</span>
<span class="t v" style="left:504px;top:1222px">49 °C</span>
<span class="t v" style="left:624px;top:1222px">62 °C</span>
<span class="t v" style="left:744px;top:1222px">59 °C</span>
<div class="sep" style="left:49px;top:1271px;width:821px"></div>
<div class="bg g" style="left:73px;top:1247px;width:797px"></div>
<svg class="ic" style="left:48px;top:1247px"><use href="#therm"/></svg>
<span class="t" style="left:75px;top:1247px">P-core 4</span>
<span class="t v" style="left:384px;top:1247px">59 °C</span>
<span class="t v" style="left:504px;top:1247px">50 °C</span>
<span class="t v" style="left:624px;top:1247px">71 °C</span>
<span class="t v" style="left:744px;top:1247px">61 °C</span>
<div class="sep" style="left:49px;top:1296px;width:821px"></div>
<svg class="ic" style="left:48px;top:1272px"><use href="#therm"/></svg>
<span class="t" style="left:75px;top:1272px">P-core 5</span>
<span class="t v" style="left:384px;top:1272px">61 °C</span>
<span class="t v" style="left:504px;top:1272px">49 °C</span>
<span class="t v" style="left:624px;top:1272px">69 °C</span>
<span class="t v" style="left:744px;top:1272px">60 °C</span>
<div class="sep" style="left:49px;top:1321px;width:821px"></div>
<div class="bg g" style="left:73px;top:1297px;width:797px"></div>
<svg class="ic" style="left:48px;top:1297px"><use href="#therm"/></svg>
<span class="t" style="left:75px;top:1297px">P-core 6</span>
<span class="t v" style="left:384px;top:1297px">63 °C</span>
<span class="t v" style="left:504px;top:1297px">53 °C</span>
<span class="t v" style="left:624px;top:1297px">67 °C</span>
<span class="t v" style="left:744px;top:1297px">62 °C</span>
<div class="sep" style="left:49px;top:1346px;width:821px"></div>
<svg class="ic" style="left:48px;top:1322px"><use href="#therm"/></svg>
<span class="t" style="left:75px;top:1322px">P-core 7</span>
<span class="t v" style="left:384px;top:1322px">59 °C</span>
<span class="t v" style="left:504px;top:1322px">51 °C</span>
<span class="t v" style="left:624px;top:1322px">66 °C</span>
<span class="t v" style="left:744px;top:1322px">60 °C</span>
<div class="sep" style="left:49px;top:1371px;width:821px"></div>
<div class="bg g" style="left:73px;top:1347px;width:797px"></div>
<svg class="ic" style="left:48px;top:1347px"><use href="#therm"/></svg>
<span class="t" style="left:75px;top:1347px">E-core 8</span>
<span class="t v" style="left:384px;top:1347px">61 °C</span>
<span class="t v" style="left:504px;top:1347px">52 °C</span>
<span class="t v" style="left:624px;top:1347px">64 °C</span>
<span class="t v" style="left:744px;top:1347px">61 °C</span>
<div class="sep" style="left:49px;top:1396px;width:821px"></div>
<svg class="ic" style="left:48px;top:1372px"><use href="#therm"/></svg>
<span class="t" style="left:75px;top:1372px">E-core 9</span>
<span class="t v" style="left:384px;top:1372px">61 °C</span>
<span class="t v" style="left:504px;top:1372px">52 °C</span>
<span class="t v" style="left:624px;top:1372px">64 °C</span>
<span class="t v" style="left:744px;top:1372px">61 °C</span>
<div class="sep" style="left:49px;top:1421px;width:821px"></div>
<div class="bg g" style="left:73px;top:1397px;width:797px"></div>
<svg class="ic" style="left:48px;top:1397px"><use href="#therm"/></svg>
<span class="t" style="left:75px;top:1397px">E-core 10</span>
<span class="t v" style="left:384px;top:1397px">61 °C</span>
<span class="t v" style="left:504px;top:1397px">52 °C</span>
<span class="t v" style="left:624px;top:1397px">64 °C</span>
<span class="t v" style="left:744px;top:1397px">61 °C</span>
<div class="sep" style="left:49px;top:1446px;width:821px"></div>
<svg class="ic" style="left:48px;top:1422px"><use href="#therm"/></svg>
<span class="t" style="left:75px;top:1422px">E-core 11</span>
<span class="t v" style="left:384px;top:1422px">61 °C</span>
<span class="t v" style="left:504px;top:1422px">51 °C</span>
<span class="t v" style="left:624px;top:1422px">64 °C</span>
<span class="t v" style="left:744px;top:1422px">61 °C</span>
<div class="sep" style="left:49px;top:1471px;width:821px"></div>
<div class="bg g" style="left:73px;top:1447px;width:797px"></div>
<svg class="ic" style="left:48px;top:1447px"><use href="#therm"/></svg>
<span class="t" style="left:75px;top:1447px">E-core 12</span>
<span class="t v" style="left:384px;top:1447px">63 °C</span>
<span class="t v" style="left:504px;top:1447px">54 °C</span>
<span class="t v" style="left:624px;top:1447px">67 °C</span>
<span class="t v" style="left:744px;top:1447px">63 °C</span>
<div class="sep" style="left:49px;top:1496px;width:821px"></div>
<svg class="ic" style="left:48px;top:1472px"><use href="#therm"/></svg>
<span class="t" style="left:75px;top:1472px">E-core 13</span>
<span class="t v" style="left:384px;top:1472px">63 °C</span>
<span class="t v" style="left:504px;top:1472px">54 °C</span>
<span class="t v" style="left:624px;top:1472px">67 °C</span>
<span class="t v" style="left:744px;top:1472px">63 °C</span>
<div class="sep" style="left:49px;top:1521px;width:821px"></div>
<div class="bg g" style="left:73px;top:1497px;width:797px"></div>
<svg class="ic" style="left:48px;top:1497px"><use href="#therm"/></svg>
<span class="t" style="left:75px;top:1497px">E-core 14</span>
<span class="t v" style="left:384px;top:1497px">63 °C</span>
<span class="t v" style="left:504px;top:1497px">54 °C</span>
<span class="t v" style="left:624px;top:1497px">67 °C</span>
<span class="t v" style="left:744px;top:1497px">63 °C</span>
<div class="sep" style="left:49px;top:1546px;width:821px"></div>
<svg class="ic" style="left:48px;top:1522px"><use href="#therm"/></svg>
<span class="t" style="left:75px;top:1522px">E-core 15</span>
<span class="t v" style="left:384px;top:1522px">63 °C</span>
<span class="t v" style="left:504px;top:1522px">54 °C</span>
<span class="t v" style="left:624px;top:1522px">67 °C</span>
<span class="t v" style="left:744px;top:1522px">63 °C</span>
<div class="sep" style="left:49px;top:1571px;width:821px"></div>
<div class="bg g" style="left:73px;top:1547px;width:797px"></div>
<svg class="ic" style="left:48px;top:1547px"><use href="#therm"/></svg>
<span class="t" style="left:75px;top:1547px">E-core 16</span>
<span class="t v" style="left:384px;top:1547px">63 °C</span>
<span class="t v" style="left:504px;top:1547px">53 °C</span>
<span class="t v" style="left:624px;top:1547px">65 °C</span>
<span class="t v" style="left:744px;top:1547px">63 °C</span>
<div class="sep" style="left:49px;top:1596px;width:821px"></div>
<svg class="ic" style="left:48px;top:1572px"><use href="#therm"/></svg>
<span class="t" style="left:75px;top:1572px">E-core 17</span>
<span class="t v" style="left:384px;top:1572px">63 °C</span>
<span class="t v" style="left:504px;top:1572px">53 °C</span>
<span class="t v" style="left:624px;top:1572px">65 °C</span>
<span class="t v" style="left:744px;top:1572px">63 °C</span>
<div class="sep" style="left:49px;top:1621px;width:821px"></div>
<div class="bg g" style="left:73px;top:1597px;width:797px"></div>
<svg class="ic" style="left:48px;top:1597px"><use href="#therm"/></svg>
<span class="t" style="left:75px;top:1597px">E-core 18</span>
<span class="t v" style="left:384px;top:1597px">63 °C</span>
<span class="t v" style="left:504px;top:1597px">53 °C</span>
<span class="t v" style="left:624px;top:1597px">65 °C</span>
<span class="t v" style="left:744px;top:1597px">63 °C</span>
<div class="sep" style="left:49px;top:1646px;width:821px"></div>
<svg class="ic" style="left:48px;top:1622px"><use href="#therm"/></svg>
<span class="t" style="left:75px;top:1622px">E-core 19</span>
<span class="t v" style="left:384px;top:1622px">63 °C</span>
<span class="t v" style="left:504px;top:1622px">53 °C</span>
<span class="t v" style="left:624px;top:1622px">65 °C</span>
<span class="t v" style="left:744px;top:1622px">63 °C</span>
<div class="sep" style="left:49px;top:1671px;width:821px"></div>
<div class="bg g" style="left:73px;top:1647px;width:797px"></div>
<svg class="ic" style="left:48px;top:1647px"><use href="#therm"/></svg>
<span class="t" style="left:75px;top:1647px">E-core 20</span>
<span class="t v" style="left:384px;top:1647px">62 °C</span>
<span class="t v" style="left:504px;top:1647px">54 °C</span>
<span class="t v" style="left:624px;top:1647px">65 °C</span>
<span class="t v" style="left:744px;top:1647px">63 °C</span>
<div class="sep" style="left:49px;top:1696px;width:821px"></div>
<svg class="ic" style="left:48px;top:1672px"><use href="#therm"/></svg>
<span class="t" style="left:75px;top:1672px">E-core 21</span>
<span class="t v" style="left:384px;top:1672px">62 °C</span>
<span class="t v" style="left:504px;top:1672px">54 °C</span>
<span class="t v" style="left:624px;top:1672px">65 °C</span>
<span class="t v" style="left:744px;top:1672px">63 °C</span>
<div class="sep" style="left:49px;top:1721px;width:821px"></div>
<div class="bg g" style="left:73px;top:1697px;width:797px"></div>
<svg class="ic" style="left:48px;top:1697px"><use href="#therm"/></svg>
<span class="t" style="left:75px;top:1697px">E-core 22</span>
<span class="t v" style="left:384px;top:1697px">62 °C</span>
<span class="t v" style="left:504px;top:1697px">54 °C</span>
<span class="t v" style="left:624px;top:1697px">65 °C</span>
<span class="t v" style="left:744px;top:1697px">63 °C</span>
<div class="sep" style="left:49px;top:1746px;width:821px"></div>
<svg class="ic" style="left:48px;top:1722px"><use href="#therm"/></svg>
<span class="t" style="left:75px;top:1722px">E-core 23</span>
<span class="t v" style="left:384px;top:1722px">62 °C</span>
<span class="t v" style="left:504px;top:1722px">54 °C</span>
<span class="t v" style="left:624px;top:1722px">65 °C</span>
<span class="t v" style="left:744px;top:1722px">63 °C</span>
<div class="sep" style="left:49px;top:1771px;width:821px"></div>
<div class="bg g" style="left:73px;top:1747px;width:797px"></div>
<svg class="ic" style="left:24px;top:1747px"><use href="#cr"/></svg>
<svg class="ic" style="left:48px;top:1747px"><use href="#therm"/></svg>
<span class="t" style="left:75px;top:1747px">Core Distance to TjMAX</span>
<span class="t v" style="left:384px;top:1747px">38 °C</span>
<span class="t v" style="left:504px;top:1747px">29 °C</span>
<span class="t v" style="left:624px;top:1747px">51 °C</span>
<span class="t v" style="left:744px;top:1747px">38 °C</span>
<div class="sep" style="left:25px;top:1796px;width:845px"></div>
<svg class="ic" style="left:24px;top:1772px"><use href="#therm"/></svg>
<span class="t" style="left:51px;top:1772px">CPU Package</span>
<span class="t v" style="left:384px;top:1772px">66 °C</span>
<span class="t v" style="left:504px;top:1772px">58 °C</span>
<span class="t v" style="left:624px;top:1772px">73 °C</span>
<span class="t v" style="left:744px;top:1772px">66 °C</span>
<div class="sep" style="left:25px;top:1821px;width:845px"></div>
<div class="bg g" style="left:49px;top:1797px;width:821px"></div>
<svg class="ic" style="left:24px;top:1797px"><use href="#therm"/></svg>
<span class="t" style="left:51px;top:1797px">Core Max</span>
<span class="t v" style="left:384px;top:1797px">64 °C</span>
<span class="t v" style="left:504px;top:1797px">55 °C</span>
<span class="t v" style="left:624px;top:1797px">71 °C</span>
<span class="t v" style="left:744px;top:1797px">64 °C</span>
<div class="sep" style="left:49px;top:1846px;width:821px"></div>
<svg class="ic" style="left:24px;top:1822px"><use href="#cv"/></svg>
<svg class="ic" style="left:48px;top:1822px"><use href="#clock"/></svg>
<span class="t" style="left:75px;top:1822px">Core Thermal Throttling</span>
<span class="t v" style="left:384px;top:1822px">No</span>
<span class="t v" style="left:504px;top:1822px">No</span>
<span class="t v rd" style="left:624px;top:1822px">Yes</span>
<div class="sep" style="left:49px;top:1871px;width:821px"></div>
<div class="bg g" style="left:73px;top:1847px;width:797px"></div>
<svg class="ic" style="left:48px;top:1847px"><use href="#clock"/></svg>
<span class="t" style="left:75px;top:1847px">P-core 0 Thermal Throttling</span>
<span class="t v" style="left:384px;top:1847px">No</span>
<span class="t v" style="left:504px;top:1847px">No</span>
<span class="t v rd" style="left:624px;top:1847px">Yes</span>
<div class="sep" style="left:49px;top:1896px;width:821px"></div>
<svg class="ic" style="left:48px;top:1872px"><use href="#clock"/></svg>
<span class="t" style="left:75px;top:1872px">P-core 1 Thermal Throttling</span>
<span class="t v" style="left:384px;top:1872px">No</span>
<span class="t v" style="left:504px;top:1872px">No</span>
<span class="t v" style="left:624px;top:1872px">No</span>
<div class="sep" style="left:49px;top:1921px;width:821px"></div>
<div class="bg g" style="left:73px;top:1897px;width:797px"></div>
<svg class="ic" style="left:48px;top:1897px"><use href="#clock"/></svg>
<span class="t" style="left:75px;top:1897px">P-core 2 Thermal Throttling</span>
<span class="t v" style="left:384px;top:1897px">No</span>
<span class="t v" style="left:504px;top:1897px">No</span>
<span class="t v rd" style="left:624px;top:1897px">Yes</span>
<div class="sep" style="left:49px;top:1946px;width:821px"></div>
<svg class="ic" style="left:48px;top:1922px"><use href="#clock"/></svg>
<span class="t" style="left:75px;top:1922px">P-core 3 Thermal Throttling</span>
<span class="t v" style="left:384px;top:1922px">No</span>
<span class="t v" style="left:504px;top:1922px">No</span>
<span class="t v" style="left:624px;top:1922px">No</span>
<div class="sep" style="left:49px;top:1971px;width:821px"></div>
<div class="bg g" style="left:73px;top:1947px;width:797px"></div>
<svg class="ic" style="left:48px;top:1947px"><use href="#clock"/></svg>
<span class="t" style="left:75px;top:1947px">P-core 4 Thermal Throttling</span>
<span class="t v" style="left:384px;top:1947px">No</span>
<span class="t v" style="left:504px;top:1947px">No</span>
<span class="t v rd" style="left:624px;top:1947px">Yes</span>
<div class="sep" style="left:49px;top:1996px;width:821px"></div>
<svg class="ic" style="left:48px;top:1972px"><use href="#clock"/></svg>
<span class="t" style="left:75px;top:1972px">P-core 5 Thermal Throttling</span>
<span class="t v" style="left:384px;top:1972px">No</span>
<span class="t v" style="left:504px;top:1972px">No</span>
<span class="t v" style="left:624px;top:1972px">No</span>
<div class="sep" style="left:49px;top:2021px;width:821px"></div>
<div class="bg g" style="left:73px;top:1997px;width:797px"></div>
<svg class="ic" style="left:48px;top:1997px"><use href="#clock"/></svg>
<span class="t" style="left:75px;top:1997px">P-core 6 Thermal Throttling</span>
<span class="t v" style="left:384px;top:1997px">No</span>
<span class="t v" style="left:504px;top:1997px">No</span>
<span class="t v" style="left:624px;top:1997px">No</span>
<div class="sep" style="left:49px;top:2046px;width:821px"></div>
<svg class="ic" style="left:48px;top:2022px"><use href="#clock"/></svg>
<span class="t" style="left:75px;top:2022px">P-core 7 Thermal Throttling</span>
<span class="t v" style="left:384px;top:2022px">No</span>
<span class="t v" style="left:504px;top:2022px">No</span>
<span class="t v" style="left:624px;top:2022px">No</span>
<div class="sep" style="left:49px;top:2071px;width:821px"></div>
<div class="bg g" style="left:73px;top:2047px;width:797px"></div>
<svg class="ic" style="left:48px;top:2047px"><use href="#clock"/></svg>
<span class="t" style="left:75px;top:2047px">E-core 8 Thermal Throttling</span>
<span class="t v" style="left:384px;top:2047px">No</span>
<span class="t v" style="left:504px;top:2047px">No</span>
<span class="t v" style="left:624px;top:2047px">No</span>
<!-- right rows -->
<div class="sep" style="left:957px;top:95px;width:843px"></div>
<svg class="ic" style="left:956px;top:71px"><use href="#clock"/></svg>
<span class="t" style="left:983px;top:71px">E-core 9 Thermal Throttling</span>
<span class="t v" style="left:1314px;top:71px">No</span>
<span class="t v" style="left:1434px;top:71px">No</span>
<span class="t v" style="left:1554px;top:71px">No</span>
<div class="sep" style="left:957px;top:120px;width:843px"></div>
<div class="bg g" style="left:981px;top:96px;width:819px"></div>
<svg class="ic" style="left:956px;top:96px"><use href="#clock"/></svg>
<span class="t" style="left:983px;top:96px">E-core 10 Thermal Throttling</span>
<span class="t v" style="left:1314px;top:96px">No</span>
<span class="t v" style="left:1434px;top:96px">No</span>
<span class="t v" style="left:1554px;top:96px">No</span>
<div class="sep" style="left:957px;top:145px;width:843px"></div>
<svg class="ic" style="left:956px;top:121px"><use href="#clock"/></svg>
<span class="t" style="left:983px;top:121px">E-core 11 Thermal Throttling</span>
<span class="t v" style="left:1314px;top:121px">No</span>
<span class="t v" style="left:1434px;top:121px">No</span>
<span class="t v" style="left:1554px;top:121px">No</span>
<div class="sep" style="left:957px;top:170px;width:843px"></div>
<div class="bg g" style="left:981px;top:146px;width:819px"></div>
<svg class="ic" style="left:956px;top:146px"><use href="#clock"/></svg>
<span class="t" style="left:983px;top:146px">E-core 12 Thermal Throttling</span>
<span class="t v" style="left:1314px;top:146px">No</span>
<span class="t v" style="left:1434px;top:146px">No</span>
<span class="t v" style="left:1554px;top:146px">No</span>
<div class="sep" style="left:957px;top:195px;width:843px"></div>
<svg class="ic" style="left:956px;top:171px"><use href="#clock"/></svg>
<span class="t" style="left:983px;top:171px">E-core 13 Thermal Throttling</span>
<span class="t v" style="left:1314px;top:171px">No</span>
<span class="t v" style="left:1434px;top:171px">No</span>
<span class="t v" style="left:1554px;top:171px">No</span>
<div class="sep" style="left:957px;top:220px;width:843px"></div>
<div class="bg g" style="left:981px;top:196px;width:819px"></div>
<svg class="ic" style="left:956px;top:196px"><use href="#clock"/></svg>
<span class="t" style="left:983px;top:196px">E-core 14 Thermal Throttling</span>
<span class="t v" style="left:1314px;top:196px">No</span>
<span class="t v" style="left:1434px;top:196px">No</span>
<span class="t v" style="left:1554px;top:196px">No</span>
<div class="sep" style="left:957px;top:245px;width:843px"></div>
<svg class="ic" style="left:956px;top:221px"><use href="#clock"/></svg>
<span class="t" style="left:983px;top:221px">E-core 15 Thermal Throttling</span>
<span class="t v" style="left:1314px;top:221px">No</span>
<span class="t v" style="left:1434px;top:221px">No</span>
<span class="t v" style="left:1554px;top:221px">No</span>
<div class="sep" style="left:957px;top:270px;width:843px"></div>
<div class="bg g" style="left:981px;top:246px;width:819px"></div>
<svg class="ic" style="left:956px;top:246px"><use href="#clock"/></svg>
<span class="t" style="left:983px;top:246px">E-core 16 Thermal Throttling</span>
<span class="t v" style="left:1314px;top:246px">No</span>
<span class="t v" style="left:1434px;top:246px">No</span>
<span class="t v" style="left:1554px;top:246px">No</span>
<div class="sep" style="left:957px;top:295px;width:843px"></div>
<svg class="ic" style="left:956px;top:271px"><use href="#clock"/></svg>
<span class="t" style="left:983px;top:271px">E-core 17 Thermal Throttling</span>
<span class="t v" style="left:1314px;top:271px">No</span>
<span class="t v" style="left:1434px;top:271px">No</span>
<span class="t v" style="left:1554px;top:271px">No</span>
<div class="sep" style="left:957px;top:320px;width:843px"></div>
<div class="bg g" style="left:981px;top:296px;width:819px"></div>
<svg class="ic" style="left:956px;top:296px"><use href="#clock"/></svg>
<span class="t" style="left:983px;top:296px">E-core 18 Thermal Throttling</span>
<span class="t v" style="left:1314px;top:296px">No</span>
<span class="t v" style="left:1434px;top:296px">No</span>
<span class="t v" style="left:1554px;top:296px">No</span>
<div class="sep" style="left:957px;top:345px;width:843px"></div>
<svg class="ic" style="left:956px;top:321px"><use href="#clock"/></svg>
<span class="t" style="left:983px;top:321px">E-core 19 Thermal Throttling</span>
<span class="t v" style="left:1314px;top:321px">No</span>
<span class="t v" style="left:1434px;top:321px">No</span>
<span class="t v" style="left:1554px;top:321px">No</span>
<div class="sep" style="left:957px;top:370px;width:843px"></div>
<div class="bg g" style="left:981px;top:346px;width:819px"></div>
<svg class="ic" style="left:956px;top:346px"><use href="#clock"/></svg>
<span class="t" style="left:983px;top:346px">E-core 20 Thermal Throttling</span>
<span class="t v" style="left:1314px;top:346px">No</span>
<span class="t v" style="left:1434px;top:346px">No</span>
<span class="t v" style="left:1554px;top:346px">No</span>
<div class="sep" style="left:957px;top:395px;width:843px"></div>
<svg class="ic" style="left:956px;top:371px"><use href="#clock"/></svg>
<span class="t" style="left:983px;top:371px">E-core 21 Thermal Throttling</span>
<span class="t v" style="left:1314px;top:371px">No</span>
<span class="t v" style="left:1434px;top:371px">No</span>
<span class="t v" style="left:1554px;top:371px">No</span>
<div class="sep" style="left:957px;top:420px;width:843px"></div>
<div class="bg g" style="left:981px;top:396px;width:819px"></div>
<svg class="ic" style="left:956px;top:396px"><use href="#clock"/></svg>
<span class="t" style="left:983px;top:396px">E-core 22 Thermal Throttling</span>
<span class="t v" style="left:1314px;top:396px">No</span>
<span class="t v" style="left:1434px;top:396px">No</span>
<span class="t v" style="left:1554px;top:396px">No</span>
<div class="sep" style="left:957px;top:445px;width:843px"></div>
<svg class="ic" style="left:956px;top:421px"><use href="#clock"/></svg>
<span class="t" style="left:983px;top:421px">E-core 23 Thermal Throttling</span>
<span class="t v" style="left:1314px;top:421px">No</span>
<span class="t v" style="left:1434px;top:421px">No</span>
<span class="t v" style="left:1554px;top:421px">No</span>
<div class="sep" style="left:957px;top:470px;width:843px"></div>
<div class="bg g" style="left:981px;top:446px;width:819px"></div>
<svg class="ic" style="left:932px;top:446px"><use href="#cr"/></svg>
<svg class="ic" style="left:956px;top:446px"><use href="#clock"/></svg>
<span class="t" style="left:983px;top:446px">Core Critical Temperature</span>
<span class="t v" style="left:1314px;top:446px">No</span>
<span class="t v" style="left:1434px;top:446px">No</span>
<span class="t v" style="left:1554px;top:446px">No</span>
<div class="sep" style="left:957px;top:495px;width:843px"></div>
<svg class="ic" style="left:932px;top:471px"><use href="#cr"/></svg>
<svg class="ic" style="left:956px;top:471px"><use href="#clock"/></svg>
<span class="t" style="left:983px;top:471px">Core Power Limit Exceeded</span>
<span class="t v" style="left:1314px;top:471px">No</span>
<span class="t v" style="left:1434px;top:471px">No</span>
<span class="t v" style="left:1554px;top:471px">Yes</span>
<div class="sep" style="left:933px;top:520px;width:867px"></div>
<div class="bg g" style="left:957px;top:496px;width:843px"></div>
<svg class="ic" style="left:932px;top:496px"><use href="#clock"/></svg>
<span class="t" style="left:959px;top:496px">Package/Ring Thermal Throttling</span>
<span class="t v" style="left:1314px;top:496px">No</span>
<span class="t v" style="left:1434px;top:496px">No</span>
<span class="t v rd" style="left:1554px;top:496px">Yes</span>
<div class="sep" style="left:933px;top:545px;width:867px"></div>
<svg class="ic" style="left:932px;top:521px"><use href="#clock"/></svg>
<span class="t" style="left:959px;top:521px">Package/Ring Critical Temperature</span>
<span class="t v" style="left:1314px;top:521px">No</span>
<span class="t v" style="left:1434px;top:521px">No</span>
<span class="t v" style="left:1554px;top:521px">No</span>
<div class="sep" style="left:933px;top:570px;width:867px"></div>
<div class="bg g" style="left:957px;top:546px;width:843px"></div>
<svg class="ic" style="left:932px;top:546px"><use href="#clock"/></svg>
<span class="t" style="left:959px;top:546px">Package/Ring Power Limit Exceeded</span>
<span class="t v" style="left:1314px;top:546px">No</span>
<span class="t v" style="left:1434px;top:546px">No</span>
<span class="t v" style="left:1554px;top:546px">Yes</span>
<div class="sep" style="left:933px;top:620px;width:867px"></div>
<div class="bg gg" style="left:957px;top:596px;width:843px"></div>
<svg class="ic" style="left:908px;top:596px"><use href="#cv"/></svg>
<svg class="ic" style="left:932px;top:596px"><use href="#chip"/></svg>
<span class="t i" style="left:960px;top:596px">CPU [#0]: Intel Core i9-13900HX: Enhanced</span>
<div class="sep" style="left:933px;top:645px;width:867px"></div>
<svg class="ic" style="left:932px;top:621px"><use href="#therm"/></svg>
<span class="t" style="left:959px;top:621px">CPU Package</span>
<span class="t v" style="left:1314px;top:621px">66 °C</span>
<span class="t v" style="left:1434px;top:621px">58 °C</span>
<span class="t v" style="left:1554px;top:621px">76 °C</span>
<span class="t v" style="left:1674px;top:621px">67 °C</span>
<div class="sep" style="left:933px;top:670px;width:867px"></div>
<div class="bg g" style="left:957px;top:646px;width:843px"></div>
<svg class="ic" style="left:932px;top:646px"><use href="#therm"/></svg>
<span class="t" style="left:959px;top:646px">CPU IA Cores</span>
<span class="t v" style="left:1314px;top:646px">63 °C</span>
<span class="t v" style="left:1434px;top:646px">55 °C</span>
<span class="t v" style="left:1554px;top:646px">76 °C</span>
<span class="t v" style="left:1674px;top:646px">66 °C</span>
<div class="sep" style="left:933px;top:695px;width:867px"></div>
<svg class="ic" style="left:932px;top:671px"><use href="#therm"/></svg>
<span class="t" style="left:959px;top:671px">CPU GT Cores (Graphics)</span>
<span class="t v" style="left:1314px;top:671px">65 °C</span>
<span class="t v" style="left:1434px;top:671px">56 °C</span>
<span class="t v" style="left:1554px;top:671px">67 °C</span>
<span class="t v" style="left:1674px;top:671px">65 °C</span>
<div class="sep" style="left:933px;top:720px;width:867px"></div>
<div class="bg g" style="left:957px;top:696px;width:843px"></div>
<svg class="ic" style="left:932px;top:696px"><use href="#therm"/></svg>
<span class="t" style="left:959px;top:696px">VR VCC Temperature (SVID)</span>
<span class="t v" style="left:1314px;top:696px">22 °C</span>
<span class="t v" style="left:1434px;top:696px">13 °C</span>
<span class="t v" style="left:1554px;top:696px">26 °C</span>
<span class="t v" style="left:1674px;top:696px">23 °C</span>
<div class="sep" style="left:933px;top:745px;width:867px"></div>
<svg class="ic" style="left:932px;top:721px"><use href="#bolt"/></svg>
<span class="t" style="left:959px;top:721px">iGPU VID</span>
<span class="t v" style="left:1314px;top:721px">0.297 V</span>
<span class="t v" style="left:1434px;top:721px">0.297 V</span>
<span class="t v" style="left:1554px;top:721px">0.302 V</span>
<span class="t v" style="left:1674px;top:721px">0.297 V</span>
<div class="sep" style="left:933px;top:770px;width:867px"></div>
<div class="bg g" style="left:957px;top:746px;width:843px"></div>
<svg class="ic" style="left:932px;top:746px"><use href="#bolt"/></svg>
<span class="t" style="left:959px;top:746px">VDDQ TX Voltage</span>
<span class="t v" style="left:1314px;top:746px">1.100 V</span>
<span class="t v" style="left:1434px;top:746px">1.100 V</span>
<span class="t v" style="left:1554px;top:746px">1.100 V</span>
<span class="t v" style="left:1674px;top:746px">1.100 V</span>
<div class="sep" style="left:933px;top:795px;width:867px"></div>
<svg class="ic" style="left:932px;top:771px"><use href="#bolt"/></svg>
<span class="t" style="left:959px;top:771px">CPU Package Power</span>
<span class="t v" style="left:1314px;top:771px">13.615 W</span>
<span class="t v" style="left:1434px;top:771px">13.116 W</span>
<span class="t v" style="left:1554px;top:771px">17.034 W</span>
<span class="t v" style="left:1674px;top:771px">14.657 W</span>
<div class="sep" style="left:933px;top:820px;width:867px"></div>
<div class="bg g" style="left:957px;top:796px;width:843px"></div>
<svg class="ic" style="left:932px;top:796px"><use href="#bolt"/></svg>
<span class="t" style="left:959px;top:796px">IA Cores Power</span>
<span class="t v" style="left:1314px;top:796px">2.097 W</span>
<span class="t v" style="left:1434px;top:796px">1.556 W</span>
<span class="t v" style="left:1554px;top:796px">5.057 W</span>
<span class="t v" style="left:1674px;top:796px">2.753 W</span>
<div class="sep" style="left:933px;top:845px;width:867px"></div>
<svg class="ic" style="left:932px;top:821px"><use href="#bolt"/></svg>
<span class="t" style="left:959px;top:821px">GT Cores Power</span>
<span class="t v" style="left:1314px;top:821px">0.000 W</span>
<span class="t v" style="left:1434px;top:821px">0.000 W</span>
<span class="t v" style="left:1554px;top:821px">0.166 W</span>
<span class="t v" style="left:1674px;top:821px">0.070 W</span>
<div class="sep" style="left:933px;top:870px;width:867px"></div>
<div class="bg g" style="left:957px;top:846px;width:843px"></div>
<svg class="ic" style="left:932px;top:846px"><use href="#bolt"/></svg>
<span class="t" style="left:959px;top:846px">System Agent Power</span>
<span class="t v" style="left:1314px;top:846px">10.481 W</span>
<span class="t v" style="left:1434px;top:846px">9.526 W</span>
<span class="t v" style="left:1554px;top:846px">11.886 W</span>
<span class="t v" style="left:1674px;top:846px">10.617 W</span>
<div class="sep" style="left:933px;top:895px;width:867px"></div>
<svg class="ic" style="left:932px;top:871px"><use href="#bolt"/></svg>
<span class="t" style="left:959px;top:871px">Rest-of-Chip Power</span>
<span class="t v" style="left:1314px;top:871px">0.426 W</span>
<span class="t v" style="left:1434px;top:871px">0.324 W</span>
<span class="t v" style="left:1554px;top:871px">0.455 W</span>
<span class="t v" style="left:1674px;top:871px">0.429 W</span>
<div class="sep" style="left:933px;top:920px;width:867px"></div>
<div class="bg g" style="left:957px;top:896px;width:843px"></div>
<svg class="ic" style="left:932px;top:896px"><use href="#bolt"/></svg>
<span class="t" style="left:959px;top:896px">PL1 Power Limit (Static)</span>
<span class="t v" style="left:1314px;top:896px">160.0 W</span>
<span class="t v" style="left:1434px;top:896px">160.0 W</span>
<span class="t v" style="left:1554px;top:896px">160.0 W</span>
<span class="t v" style="left:1674px;top:896px">160.0 W</span>
<div class="sep" style="left:933px;top:945px;width:867px"></div>
<svg class="ic" style="left:932px;top:921px"><use href="#bolt"/></svg>
<span class="t" style="left:959px;top:921px">PL1 Power Limit (Dynamic)</span>
<span class="t v" style="left:1314px;top:921px">160.0 W</span>
<span class="t v" style="left:1434px;top:921px">160.0 W</span>
<span class="t v" style="left:1554px;top:921px">160.0 W</span>
<span class="t v" style="left:1674px;top:921px">160.0 W</span>
<div class="sep" style="left:933px;top:970px;width:867px"></div>
<div class="bg g" style="left:957px;top:946px;width:843px"></div>
<svg class="ic" style="left:932px;top:946px"><use href="#bolt"/></svg>
<span class="t" style="left:959px;top:946px">PL2 Power Limit (Static)</span>
<span class="t v" style="left:1314px;top:946px">160.0 W</span>
<span class="t v" style="left:1434px;top:946px">160.0 W</span>
<span class="t v" style="left:1554px;top:946px">160.0 W</span>
<span class="t v" style="left:1674px;top:946px">160.0 W</span>
<div class="sep" style="left:933px;top:995px;width:867px"></div>
<svg class="ic" style="left:932px;top:971px"><use href="#bolt"/></svg>
<span class="t" style="left:959px;top:971px">PL2 Power Limit (Dynamic)</span>
<span class="t v" style="left:1314px;top:971px">160.0 W</span>
<span class="t v" style="left:1434px;top:971px">160.0 W</span>
<span class="t v" style="left:1554px;top:971px">160.0 W</span>
<span class="t v" style="left:1674px;top:971px">160.0 W</span>
<div class="sep" style="left:933px;top:1020px;width:867px"></div>
<div class="bg g" style="left:957px;top:996px;width:843px"></div>
<svg class="ic" style="left:932px;top:996px"><use href="#clock"/></svg>
<span class="t" style="left:959px;top:996px">GPU Clock</span>
<span class="t v" style="left:1314px;top:996px">600.0 MHz</span>
<span class="t v" style="left:1434px;top:996px">100.0 MHz</span>
<span class="t v" style="left:1554px;top:996px">600.0 MHz</span>
<span class="t v" style="left:1674px;top:996px">596.3 MHz</span>
<div class="sep" style="left:957px;top:1045px;width:843px"></div>
<svg class="ic" style="left:932px;top:1021px"><use href="#cr"/></svg>
<svg class="ic" style="left:956px;top:1021px"><use href="#clock"/></svg>
<span class="t" style="left:983px;top:1021px">GPU D3D Utilizations</span>
<span class="t v" style="left:1434px;top:1021px">0.0 %</span>
<span class="t v" style="left:1554px;top:1021px">0.0 %</span>
<div class="sep" style="left:933px;top:1070px;width:867px"></div>
<div class="bg g" style="left:957px;top:1046px;width:843px"></div>
<svg class="ic" style="left:932px;top:1046px"><use href="#clock"/></svg>
<span class="t" style="left:959px;top:1046px">GPU D3D Memory Dynamic</span>
<span class="t v" style="left:1314px;top:1046px">139 MB</span>
<span class="t v" style="left:1434px;top:1046px">139 MB</span>
<span class="t v" style="left:1554px;top:1046px">155 MB</span>
<span class="t v" style="left:1674px;top:1046px">140 MB</span>
<div class="sep" style="left:957px;top:1095px;width:843px"></div>
<svg class="ic" style="left:932px;top:1071px"><use href="#cr"/></svg>
<svg class="ic" style="left:956px;top:1071px"><use href="#clock"/></svg>
<span class="t" style="left:983px;top:1071px">OC Ratio Limits</span>
<span class="t v" style="left:1434px;top:1071px">33.0 x</span>
<span class="t v" style="left:1554px;top:1071px">54.0 x</span>
<div class="sep" style="left:933px;top:1145px;width:867px"></div>
<div class="bg gg" style="left:957px;top:1121px;width:843px"></div>
<svg class="ic" style="left:908px;top:1121px"><use href="#cv"/></svg>
<svg class="ic" style="left:932px;top:1121px"><use href="#chip"/></svg>
<span class="t i" style="left:960px;top:1121px">Memory Timings</span>
<div class="sep" style="left:933px;top:1170px;width:867px"></div>
<svg class="ic" style="left:932px;top:1146px"><use href="#clock"/></svg>
<span class="t" style="left:959px;top:1146px">Memory Clock</span>
<span class="t v" style="left:1314px;top:1146px">2,394.1 MHz</span>
<span class="t v" style="left:1434px;top:1146px">2,394.1 MHz</span>
<span class="t v" style="left:1554px;top:1146px">2,394.1 MHz</span>
<span class="t v" style="left:1674px;top:1146px">2,394.1 MHz</span>
<div class="bg g" style="left:957px;top:1171px;width:843px"></div>
<div class="sep" style="left:933px;top:1220px;width:867px"></div>
<div class="bg gg" style="left:957px;top:1196px;width:843px"></div>
<svg class="ic" style="left:908px;top:1196px"><use href="#cv"/></svg>
<svg class="ic" style="left:932px;top:1196px"><use href="#chip"/></svg>
<span class="t i" style="left:960px;top:1196px">CPU [#0]: Intel Core i9-13900HX: Performance Limit Reasons</span>
<div class="sep" style="left:957px;top:1245px;width:843px"></div>
<div class="bg g" style="left:981px;top:1221px;width:819px"></div>
<svg class="ic" style="left:932px;top:1221px"><use href="#cr"/></svg>
<svg class="ic" style="left:956px;top:1221px"><use href="#clock"/></svg>
<span class="t" style="left:983px;top:1221px">IA Limit Reasons</span>
<span class="t v" style="left:1314px;top:1221px">No</span>
<span class="t v" style="left:1434px;top:1221px">No</span>
<span class="t v" style="left:1554px;top:1221px">Yes</span>
<div class="sep" style="left:957px;top:1270px;width:843px"></div>
<svg class="ic" style="left:932px;top:1246px"><use href="#cr"/></svg>
<svg class="ic" style="left:956px;top:1246px"><use href="#clock"/></svg>
<span class="t" style="left:983px;top:1246px">GT Limit Reasons</span>
<span class="t v" style="left:1314px;top:1246px">No</span>
<span class="t v" style="left:1434px;top:1246px">No</span>
<span class="t v" style="left:1554px;top:1246px">Yes</span>
<div class="sep" style="left:957px;top:1295px;width:843px"></div>
<svg class="ic" style="left:932px;top:1271px"><use href="#cr"/></svg>
<svg class="ic" style="left:956px;top:1271px"><use href="#clock"/></svg>
<span class="t" style="left:983px;top:1271px">Ring Limit Reasons</span>
<span class="t v" style="left:1314px;top:1271px">Yes</span>
<span class="t v" style="left:1434px;top:1271px">No</span>
<span class="t v" style="left:1554px;top:1271px">Yes</span>
<div class="bg g" style="left:957px;top:1296px;width:843px"></div>
<div class="sep" style="left:933px;top:1345px;width:867px"></div>
<div class="bg gg" style="left:957px;top:1321px;width:843px"></div>
<svg class="ic" style="left:908px;top:1321px"><use href="#cv"/></svg>
<svg class="ic" style="left:932px;top:1321px"><use href="#chip"/></svg>
<span class="t i" style="left:960px;top:1321px">DDR5 DIMM [#0] (BANK 0/Controller0-ChannelA-DIMM0)</span>
<div class="sep" style="left:933px;top:1370px;width:867px"></div>
<div class="bg g" style="left:957px;top:1346px;width:843px"></div>
<svg class="ic" style="left:932px;top:1346px"><use href="#therm"/></svg>
<span class="t" style="left:959px;top:1346px">SPD Hub Temperature</span>
<span class="t v" style="left:1314px;top:1346px">63.3 °C</span>
<span class="t v" style="left:1434px;top:1346px">57.8 °C</span>
<span class="t v" style="left:1554px;top:1346px">63.8 °C</span>
<span class="t v" style="left:1674px;top:1346px">62.7 °C</span>
<div class="sep" style="left:933px;top:1395px;width:867px"></div>
<svg class="ic" style="left:932px;top:1371px"><use href="#clock"/></svg>
<span class="t" style="left:959px;top:1371px">PMIC High Temperature</span>
<span class="t v" style="left:1314px;top:1371px">No</span>
<span class="t v" style="left:1434px;top:1371px">No</span>
<span class="t v" style="left:1554px;top:1371px">No</span>
<span class="t v" style="left:1674px;top:1371px">No</span>
<div class="sep" style="left:933px;top:1420px;width:867px"></div>
<div class="bg g" style="left:957px;top:1396px;width:843px"></div>
<svg class="ic" style="left:932px;top:1396px"><use href="#clock"/></svg>
<span class="t" style="left:959px;top:1396px">PMIC Over Voltage</span>
<span class="t v" style="left:1314px;top:1396px">No</span>
<span class="t v" style="left:1434px;top:1396px">No</span>
<span class="t v" style="left:1554px;top:1396px">No</span>
<span class="t v" style="left:1674px;top:1396px">No</span>
<div class="sep" style="left:933px;top:1445px;width:867px"></div>
<svg class="ic" style="left:932px;top:1421px"><use href="#clock"/></svg>
<span class="t" style="left:959px;top:1421px">PMIC Under Voltage</span>
<span class="t v" style="left:1314px;top:1421px">No</span>
<span class="t v" style="left:1434px;top:1421px">No</span>
<span class="t v" style="left:1554px;top:1421px">No</span>
<span class="t v" style="left:1674px;top:1421px">No</span>
<div class="bg g" style="left:957px;top:1446px;width:843px"></div>
<div class="sep" style="left:933px;top:1495px;width:867px"></div>
<div class="bg gg" style="left:957px;top:1471px;width:843px"></div>
<svg class="ic" style="left:908px;top:1471px"><use href="#cv"/></svg>
<svg class="ic" style="left:932px;top:1471px"><use href="#chip"/></svg>
<span class="t i" style="left:960px;top:1471px">S.M.A.R.T.: KINGSTON OM8SEP41024Q-A0 (50026B7381B574CA)</span>
<div class="sep" style="left:933px;top:1520px;width:867px"></div>
<div class="bg g" style="left:957px;top:1496px;width:843px"></div>
<svg class="ic" style="left:932px;top:1496px"><use href="#therm"/></svg>
<span class="t" style="left:959px;top:1496px">Drive Temperature</span>
<span class="t v" style="left:1314px;top:1496px">41 °C</span>
<span class="t v" style="left:1434px;top:1496px">28 °C</span>
<span class="t v" style="left:1554px;top:1496px">46 °C</span>
<span class="t v" style="left:1674px;top:1496px">40 °C</span>
<div class="sep" style="left:933px;top:1570px;width:867px"></div>
<div class="bg gg" style="left:957px;top:1546px;width:843px"></div>
<svg class="ic" style="left:908px;top:1546px"><use href="#cv"/></svg>
<svg class="ic" style="left:932px;top:1546px"><use href="#chip"/></svg>
<span class="t i" style="left:960px;top:1546px">GPU [#1]: NVIDIA GeForce RTX 4080 Laptop</span>
<div class="sep" style="left:933px;top:1595px;width:867px"></div>
<svg class="ic" style="left:932px;top:1571px"><use href="#therm"/></svg>
<span class="t" style="left:959px;top:1571px">GPU Temperature</span>
<span class="t v" style="left:1314px;top:1571px">67.3 °C</span>
<span class="t v" style="left:1434px;top:1571px">59.6 °C</span>
<span class="t v" style="left:1554px;top:1571px">78.3 °C</span>
<span class="t v" style="left:1674px;top:1571px">67.1 °C</span>
<div class="sep" style="left:933px;top:1620px;width:867px"></div>
<div class="bg g" style="left:957px;top:1596px;width:843px"></div>
<svg class="ic" style="left:932px;top:1596px"><use href="#therm"/></svg>
<span class="t" style="left:959px;top:1596px">GPU Memory Junction Temperature</span>
<span class="t v" style="left:1314px;top:1596px">82.0 °C</span>
<span class="t v" style="left:1434px;top:1596px">66.0 °C</span>
<span class="t v" style="left:1554px;top:1596px">102.0 °C</span>
<span class="t v" style="left:1674px;top:1596px">82.2 °C</span>
<div class="sep" style="left:933px;top:1645px;width:867px"></div>
<svg class="ic" style="left:932px;top:1621px"><use href="#therm"/></svg>
<span class="t" style="left:959px;top:1621px">GPU Hot Spot Temperature</span>
<span class="t v" style="left:1314px;top:1621px">72.6 °C</span>
<span class="t v" style="left:1434px;top:1621px">66.1 °C</span>
<span class="t v" style="left:1554px;top:1621px">85.7 °C</span>
<span class="t v" style="left:1674px;top:1621px">72.3 °C</span>
<div class="sep" style="left:933px;top:1670px;width:867px"></div>
<div class="bg g" style="left:957px;top:1646px;width:843px"></div>
<svg class="ic" style="left:932px;top:1646px"><use href="#therm"/></svg>
<span class="t" style="left:959px;top:1646px">GPU Thermal Limit</span>
<span class="t v" style="left:1314px;top:1646px">87.0 °C</span>
<span class="t v" style="left:1434px;top:1646px">87.0 °C</span>
<span class="t v" style="left:1554px;top:1646px">87.0 °C</span>
<span class="t v" style="left:1674px;top:1646px">87.0 °C</span>
<div class="sep" style="left:933px;top:1695px;width:867px"></div>
<svg class="ic" style="left:932px;top:1671px"><use href="#bolt"/></svg>
<span class="t" style="left:959px;top:1671px">GPU Core Voltage</span>
<span class="t v" style="left:1314px;top:1671px">0.795 V</span>
<span class="t v" style="left:1434px;top:1671px">0.620 V</span>
<span class="t v" style="left:1554px;top:1671px">0.910 V</span>
<span class="t v" style="left:1674px;top:1671px">0.756 V</span>
<div class="sep" style="left:933px;top:1720px;width:867px"></div>
<div class="bg g" style="left:957px;top:1696px;width:843px"></div>
<svg class="ic" style="left:932px;top:1696px"><use href="#bolt"/></svg>
<span class="t" style="left:959px;top:1696px">GPU Power</span>
<span class="t v" style="left:1314px;top:1696px">91.487 W</span>
<span class="t v" style="left:1434px;top:1696px">28.486 W</span>
<span class="t v" style="left:1554px;top:1696px">154.329 W</span>
<span class="t v" style="left:1674px;top:1696px">83.544 W</span>
<div class="sep" style="left:933px;top:1745px;width:867px"></div>
<svg class="ic" style="left:932px;top:1721px"><use href="#clock"/></svg>
<span class="t" style="left:959px;top:1721px">GPU Clock</span>
<span class="t v" style="left:1314px;top:1721px">1,860.0 MHz</span>
<span class="t v" style="left:1434px;top:1721px">645.0 MHz</span>
<span class="t v" style="left:1554px;top:1721px">2,250.0 MHz</span>
<span class="t v" style="left:1674px;top:1721px">1,671.2 MHz</span>
<div class="sep" style="left:933px;top:1770px;width:867px"></div>
<div class="bg g" style="left:957px;top:1746px;width:843px"></div>
<svg class="ic" style="left:932px;top:1746px"><use href="#clock"/></svg>
<span class="t" style="left:959px;top:1746px">GPU Memory Clock</span>
<span class="t v" style="left:1314px;top:1746px">1,500.2 MHz</span>
<span class="t v" style="left:1434px;top:1746px">1,500.2 MHz</span>
<span class="t v" style="left:1554px;top:1746px">2,250.2 MHz</span>
<span class="t v" style="left:1674px;top:1746px">1,534.3 MHz</span>
<div class="sep" style="left:933px;top:1795px;width:867px"></div>
<svg class="ic" style="left:932px;top:1771px"><use href="#clock"/></svg>
<span class="t" style="left:959px;top:1771px">GPU Video Clock</span>
<span class="t v" style="left:1314px;top:1771px">1,800.0 MHz</span>
<span class="t v" style="left:1434px;top:1771px">945.0 MHz</span>
<span class="t v" style="left:1554px;top:1771px">1,995.0 MHz</span>
<span class="t v" style="left:1674px;top:1771px">1,619.1 MHz</span>
<div class="sep" style="left:933px;top:1820px;width:867px"></div>
<div class="bg g" style="left:957px;top:1796px;width:843px"></div>
<svg class="ic" style="left:932px;top:1796px"><use href="#clock"/></svg>
<span class="t" style="left:959px;top:1796px">GPU Effective Clock</span>
<span class="t v" style="left:1314px;top:1796px">1,758.5 MHz</span>
<span class="t v" style="left:1434px;top:1796px">153.7 MHz</span>
<span class="t v" style="left:1554px;top:1796px">2,446.3 MHz</span>
<span class="t v" style="left:1674px;top:1796px">1,625.6 MHz</span>
<div class="sep" style="left:957px;top:1845px;width:843px"></div>
<svg class="ic" style="left:956px;top:1821px"><use href="#clock"/></svg>
<span class="t" style="left:983px;top:1821px">Performance Limit - Power</span>
<span class="t v" style="left:1314px;top:1821px">No</span>
<span class="t v" style="left:1434px;top:1821px">No</span>
<span class="t v" style="left:1554px;top:1821px">Yes</span>
<span class="t v" style="left:1674px;top:1821px">Yes</span>
<div class="sep" style="left:957px;top:1870px;width:843px"></div>
<div class="bg g" style="left:981px;top:1846px;width:819px"></div>
<svg class="ic" style="left:956px;top:1846px"><use href="#clock"/></svg>
<span class="t" style="left:983px;top:1846px">Performance Limit - Thermal</span>
<span class="t v" style="left:1314px;top:1846px">Yes</span>
<span class="t v" style="left:1434px;top:1846px">No</span>
<span class="t v" style="left:1554px;top:1846px">Yes</span>
<span class="t v" style="left:1674px;top:1846px">Yes</span>
<div class="sep" style="left:957px;top:1895px;width:843px"></div>
<svg class="ic" style="left:956px;top:1871px"><use href="#clock"/></svg>
<span class="t" style="left:983px;top:1871px">Performance Limit - Reliability Voltage</span>
<span class="t v" style="left:1314px;top:1871px">No</span>
<span class="t v" style="left:1434px;top:1871px">No</span>
<span class="t v" style="left:1554px;top:1871px">No</span>
<span class="t v" style="left:1674px;top:1871px">No</span>
<div class="sep" style="left:957px;top:1920px;width:843px"></div>
<div class="bg g" style="left:981px;top:1896px;width:819px"></div>
<svg class="ic" style="left:956px;top:1896px"><use href="#clock"/></svg>
<span class="t" style="left:983px;top:1896px">Performance Limit - Max Operating Voltage</span>
<span class="t v" style="left:1314px;top:1896px">No</span>
<span class="t v" style="left:1434px;top:1896px">No</span>
<span class="t v" style="left:1554px;top:1896px">No</span>
<span class="t v" style="left:1674px;top:1896px">No</span>
<div class="sep" style="left:957px;top:1945px;width:843px"></div>
<svg class="ic" style="left:956px;top:1921px"><use href="#clock"/></svg>
<span class="t" style="left:983px;top:1921px">Performance Limit - Utilization</span>
<span class="t v" style="left:1314px;top:1921px">No</span>
<span class="t v" style="left:1434px;top:1921px">No</span>
<span class="t v" style="left:1554px;top:1921px">No</span>
<span class="t v" style="left:1674px;top:1921px">No</span>
<div class="sep" style="left:957px;top:1970px;width:843px"></div>
<div class="bg g" style="left:981px;top:1946px;width:819px"></div>
<svg class="ic" style="left:956px;top:1946px"><use href="#clock"/></svg>
<span class="t" style="left:983px;top:1946px">Performance Limit - SLI GPUBoost Sync</span>
<span class="t v" style="left:1314px;top:1946px">No</span>
<span class="t v" style="left:1434px;top:1946px">No</span>
<span class="t v" style="left:1554px;top:1946px">No</span>
<span class="t v" style="left:1674px;top:1946px">No</span>

<div id="bline"></div>
<div id="tb"></div>
<div class="tbb" style="left:-4px;width:59.5px"></div>
<div class="tbb" style="left:58.6px;width:61.800000000000004px"></div>
<div class="tbb" style="left:1357.5px;width:61.799999999999955px"></div>
<div class="tbb" style="left:1523.6px;width:61.80000000000018px"></div>
<div class="tbb" style="left:1591.4px;width:61.799999999999955px"></div>
<div class="tbb" style="left:1660.7px;width:61.59999999999991px"></div>
<div class="tbb" style="left:1730.4px;width:62.09999999999991px"></div>
<span id="tm">0:19:50</span>
<svg class="abs" style="left:0;top:2077px;width:1809px;height:54px;overflow:hidden" viewBox="0 2077 1809 54"><defs><linearGradient id="gmon" x1="0" y1="0" x2="1" y2="1"><stop offset="0" stop-color="#7cc4f8"/><stop offset=".45" stop-color="#2a86e0"/><stop offset="1" stop-color="#1560c0"/></linearGradient><linearGradient id="ggear" x1="0" y1="0" x2="1" y2="1"><stop offset="0" stop-color="#f4f4f4"/><stop offset=".5" stop-color="#b4b8bc"/><stop offset="1" stop-color="#e4e4e4"/></linearGradient><linearGradient id="gx" x1="0" y1="0" x2="0" y2="1"><stop offset="0" stop-color="#1f7fbf"/><stop offset="1" stop-color="#62b8e8"/></linearGradient><linearGradient id="gdoc" x1="0" y1="0" x2="1" y2="0"><stop offset="0" stop-color="#d8d8d8"/><stop offset="1" stop-color="#f2f2f2"/></linearGradient></defs><path d="M21.7 2112.1H11.2V2104.4L-0.3000000000000007 2117.4L11.2 2130.4V2122.7000000000003H21.7ZM26.2 2112.1H36.7V2104.4L48.2 2117.4L36.7 2130.4V2122.7000000000003H26.2ZM67 2112.1H77.5V2104.4L89.0 2117.4L77.5 2130.4V2122.7000000000003H67ZM111 2112.1H100.5V2104.4L89.0 2117.4L100.5 2130.4V2122.7000000000003H111Z" fill="#3a96e3" stroke="#b9d9f4" stroke-width="1" stroke-dasharray="2 1.5"/><path d="M1388 2104H1402V2113" fill="none" stroke="#a8a8a8" stroke-width="1.3"/><ellipse cx="1376" cy="2116.5" rx="7.5" ry="2.6" fill="#9aa0a6"/><path d="M1373 2110h6v6h-6z" fill="#8a9096"/><path d="M1366.5 2093.5L1388.5 2096.5L1386 2113.5L1364.5 2108Z" fill="url(#gmon)" stroke="#8a9aa8" stroke-width="1.2"/><path d="M1368 2095.5L1386 2098C1378 2098 1371 2101 1366.5 2106Z" fill="#fff" opacity=".35"/><path d="M1388.5 2114.5L1410.5 2117.5L1408 2134.5L1386.5 2129Z" fill="url(#gmon)" stroke="#8a9aa8" stroke-width="1.2"/><path d="M1390 2116.5L1408 2119C1400 2119 1393 2122 1388.5 2127Z" fill="#fff" opacity=".35"/><circle cx="1554" cy="2115.7" r="22.8" fill="#fff" stroke="#1a1a1a" stroke-width="1.4"/><path d="M1554 2092.8999999999996v6" transform="rotate(0 1554 2115.7)" stroke="#1a1a1a" stroke-width="1.6"/><path d="M1554 2092.8999999999996v5" transform="rotate(30 1554 2115.7)" stroke="#1a1a1a" stroke-width="1.3"/><path d="M1554 2092.8999999999996v5" transform="rotate(60 1554 2115.7)" stroke="#1a1a1a" stroke-width="1.3"/><path d="M1554 2092.8999999999996v6" transform="rotate(90 1554 2115.7)" stroke="#1a1a1a" stroke-width="1.6"/><path d="M1554 2092.8999999999996v5" transform="rotate(120 1554 2115.7)" stroke="#1a1a1a" stroke-width="1.3"/><path d="M1554 2092.8999999999996v5" transform="rotate(150 1554 2115.7)" stroke="#1a1a1a" stroke-width="1.3"/><path d="M1554 2092.8999999999996v6" transform="rotate(180 1554 2115.7)" stroke="#1a1a1a" stroke-width="1.6"/><path d="M1554 2092.8999999999996v5" transform="rotate(210 1554 2115.7)" stroke="#1a1a1a" stroke-width="1.3"/><path d="M1554 2092.8999999999996v5" transform="rotate(240 1554 2115.7)" stroke="#1a1a1a" stroke-width="1.3"/><path d="M1554 2092.8999999999996v6" transform="rotate(270 1554 2115.7)" stroke="#1a1a1a" stroke-width="1.6"/><path d="M1554 2092.8999999999996v5" transform="rotate(300 1554 2115.7)" stroke="#1a1a1a" stroke-width="1.3"/><path d="M1554 2092.8999999999996v5" transform="rotate(330 1554 2115.7)" stroke="#1a1a1a" stroke-width="1.3"/><path d="M1554 2115.7L1556.8 2097" stroke="#111" stroke-width="1.6"/><path d="M1554 2115.7H1566.5" stroke="#111" stroke-width="2.6"/><circle cx="1554" cy="2115.7" r="1.8" fill="#111"/><path d="M1605.5 2093.5H1632L1640 2101.5V2134H1605.5Z" fill="url(#gdoc)" stroke="#c4c4c4" stroke-width="1"/><path d="M1632 2093.5V2101.5H1640Z" fill="#fafafa" stroke="#c4c4c4" stroke-width=".8"/><path d="M1610 2100h20M1610 2104h25M1610 2108h25M1610 2112h25M1610 2116h25M1610 2120h25M1610 2124h25M1610 2128h25M1617 2100v31M1626 2100v31" stroke="#c9c9c9" stroke-width=".9" fill="none"/><path d="M1632.6 2117.5h7v6.5h6v7h-19v-7h6z" fill="#8fc93a" stroke="#a9d95e" stroke-width="1"/><path d="M1686 2093.5h10l1.2 7h-12.4z" transform="rotate(0 1691 2115.7)" fill="url(#ggear)" stroke="#c4c8cc" stroke-width=".6"/><path d="M1686 2093.5h10l1.2 7h-12.4z" transform="rotate(45 1691 2115.7)" fill="url(#ggear)" stroke="#c4c8cc" stroke-width=".6"/><path d="M1686 2093.5h10l1.2 7h-12.4z" transform="rotate(90 1691 2115.7)" fill="url(#ggear)" stroke="#c4c8cc" stroke-width=".6"/><path d="M1686 2093.5h10l1.2 7h-12.4z" transform="rotate(135 1691 2115.7)" fill="url(#ggear)" stroke="#c4c8cc" stroke-width=".6"/><path d="M1686 2093.5h10l1.2 7h-12.4z" transform="rotate(180 1691 2115.7)" fill="url(#ggear)" stroke="#c4c8cc" stroke-width=".6"/><path d="M1686 2093.5h10l1.2 7h-12.4z" transform="rotate(225 1691 2115.7)" fill="url(#ggear)" stroke="#c4c8cc" stroke-width=".6"/><path d="M1686 2093.5h10l1.2 7h-12.4z" transform="rotate(270 1691 2115.7)" fill="url(#ggear)" stroke="#c4c8cc" stroke-width=".6"/><path d="M1686 2093.5h10l1.2 7h-12.4z" transform="rotate(315 1691 2115.7)" fill="url(#ggear)" stroke="#c4c8cc" stroke-width=".6"/><circle cx="1691" cy="2115.7" r="17.6" fill="url(#ggear)" stroke="#c0c4c8" stroke-width=".8"/><circle cx="1691" cy="2115.7" r="11.5" fill="#a9adb1"/><circle cx="1691" cy="2115.7" r="8.6" fill="#fdfdfd" stroke="#8e9296" stroke-width="1"/><path d="M1751 2098.8L1760.7 2108.5L1770.4 2098.8L1777.6 2106L1767.9 2115.7L1777.6 2125.4L1770.4 2132.6L1760.7 2122.9L1751 2132.6L1743.8 2125.4L1753.5 2115.7L1743.8 2106Z" fill="url(#gx)"/></svg>

<!-- graph windows -->
<div class="gw" style="top:2px;height:298px">
<svg class="ti" style="left:11px;top:9px"><use href="#hw"/></svg><span class="gt">P-core 0 T0 Effective Clock</span><svg class="gx" viewBox="0 0 16 16"><path d="M.5.5l15 15M15.5.5l-15 15"/></svg>
<div class="side" style="height:255px">
<span class="fld" style="top:1px">5000.0</span>
<i class="sq" style="left:13px;top:104px;background:#f3fbf3"></i><i class="sq" style="left:45px;top:104px;background:#e0f7fd"></i><i class="sq" style="left:77px;top:104px;background:#a9c3ea"></i>
<span class="fld" style="top:131px;width:101px">27.2 MHz</span>
<span class="btn" style="left:5px;top:182px;width:57px">Auto Fit</span><span class="btn" style="left:65.500px;top:182px;width:43px">Reset</span>
<span class="fld" style="top:230px">0.0</span>
</div></div>
<div class="gw" style="top:315px;height:298px">
<svg class="ti" style="left:11px;top:9px"><use href="#hw"/></svg><span class="gt">E-core 8 T0 Effective Clock</span><svg class="gx" viewBox="0 0 16 16"><path d="M.5.5l15 15M15.5.5l-15 15"/></svg>
<div class="side" style="height:255px">
<span class="fld" style="top:1px">5000.0</span>
<i class="sq" style="left:13px;top:104px;background:#f3fbf3"></i><i class="sq" style="left:45px;top:104px;background:#e0f7fd"></i><i class="sq" style="left:77px;top:104px;background:#a9c3ea"></i>
<span class="fld" style="top:131px;width:101px">30.9 MHz</span>
<span class="btn" style="left:5px;top:182px;width:57px">Auto Fit</span><span class="btn" style="left:65.500px;top:182px;width:43px">Reset</span>
<span class="fld" style="top:230px">0.0</span>
</div></div>
<div class="gw" style="top:628px;height:298px">
<svg class="ti" style="left:11px;top:9px"><use href="#hw"/></svg><span class="gt" style="letter-spacing:-.56px">CPU Package</span><svg class="gx" viewBox="0 0 16 16"><path d="M.5.5l15 15M15.5.5l-15 15"/></svg>
<div class="side" style="height:255px">
<span class="fld" style="top:1px">110</span>
<i class="sq" style="left:13px;top:104px;background:#fdf1f1"></i><i class="sq" style="left:45px;top:104px;background:#e0f7fd"></i><i class="sq" style="left:77px;top:104px;background:#a9c3ea"></i>
<span class="fld" style="top:131px;width:101px">66 °C</span>
<span class="btn" style="left:5px;top:182px;width:57px">Auto Fit</span><span class="btn" style="left:65.500px;top:182px;width:43px">Reset</span>
<span class="fld" style="top:230px">0</span>
</div></div>
<div class="gw" style="top:941px;height:298px">
<svg class="ti" style="left:11px;top:9px"><use href="#hw"/></svg><span class="gt" style="letter-spacing:-.38px">CPU Package Power</span><svg class="gx" viewBox="0 0 16 16"><path d="M.5.5l15 15M15.5.5l-15 15"/></svg>
<div class="side" style="height:255px">
<span class="fld" style="top:1px">180.000</span>
<i class="sq" style="left:13px;top:104px;background:#f1f5fd"></i><i class="sq" style="left:45px;top:104px;background:#e0f7fd"></i><i class="sq" style="left:77px;top:104px;background:#a9c3ea"></i>
<span class="fld" style="top:131px;width:101px">13.615 W</span>
<span class="btn" style="left:5px;top:182px;width:57px">Auto Fit</span><span class="btn" style="left:65.500px;top:182px;width:43px">Reset</span>
<span class="fld" style="top:230px">0.000</span>
</div></div>
<div class="gw" style="top:1254px;height:298px">
<svg class="ti" style="left:11px;top:9px"><use href="#hw"/></svg><span class="gt" style="letter-spacing:-.38px">GPU Clock</span><svg class="gx" viewBox="0 0 16 16"><path d="M.5.5l15 15M15.5.5l-15 15"/></svg>
<div class="side" style="height:255px">
<span class="fld" style="top:1px">3000.0</span>
<i class="sq" style="left:13px;top:104px;background:#f1fbf1"></i><i class="sq" style="left:45px;top:104px;background:#e0f7fd"></i><i class="sq" style="left:77px;top:104px;background:#a9c3ea"></i>
<span class="fld" style="top:131px;width:101px">1,860.0 MHz</span>
<span class="btn" style="left:5px;top:182px;width:57px">Auto Fit</span><span class="btn" style="left:65.500px;top:182px;width:43px">Reset</span>
<span class="fld" style="top:230px">0.0</span>
</div></div>
<div class="gw" style="top:1567px;height:283px">
<i class="shd"></i>
<svg class="ti" style="left:11px;top:9px"><use href="#hw"/></svg><span class="gt" style="letter-spacing:-.05px">GPU Temperature</span><svg class="gx" viewBox="0 0 16 16"><path d="M.5.5l15 15M15.5.5l-15 15"/></svg>
<div class="side" style="height:240px">
<span class="fld" style="top:1px">100.0</span>
<i class="sq" style="left:13px;top:89px;background:#fdeff3"></i><i class="sq" style="left:45px;top:89px;background:#e0f7fd"></i><i class="sq" style="left:77px;top:89px;background:#a9c3ea"></i>
<span class="fld" style="top:116px;width:101px">67.3 °C</span>
<span class="btn" style="left:5px;top:167px;width:57px">Auto Fit</span><span class="btn" style="left:65.500px;top:167px;width:43px">Reset</span>
<span class="fld" style="top:215px">0.0</span>
</div></div>
<div class="gw" style="top:1865px;height:287px">
<svg class="ti" style="left:11px;top:9px"><use href="#hw"/></svg><span class="gt" style="letter-spacing:-.42px">GPU Power</span><svg class="gx" viewBox="0 0 16 16"><path d="M.5.5l15 15M15.5.5l-15 15"/></svg>
<div class="side" style="height:244px">
<span class="fld" style="top:1px">200.000</span>
<i class="sq" style="left:13px;top:93px;background:#f1f1fb"></i><i class="sq" style="left:45px;top:93px;background:#e0f7fd"></i><i class="sq" style="left:77px;top:93px;background:#a9c3ea"></i>
<span class="fld" style="top:120px;width:101px">91.487 W</span>
<span class="btn" style="left:5px;top:171px;width:57px">Auto Fit</span><span class="btn" style="left:65.500px;top:171px;width:43px">Reset</span>
<span class="fld" style="top:219px">0.000</span>
</div></div>
<svg class="gsv" style="top:45px;height:254px" viewBox="1814 46 1891 254"><path d="M1914 300V299H1917V297H1920V299H2037V298H2040V299H2058V297H2061V299H2103V297.7H2106V298.1H2109V296.9H2112V298.3H2115V297.2H2118V297.6H2121V298.4H2124V297.2H2127V298.4H2130V297.4H2133V298.3H2139V299H2145V297.2H2148V296.3H2151V297.8H2154V297.6H2157V296.7H2160V294.7H2163V295.4H2166V293.1H2169V296.8H2172V293.6H2175V295.8H2178V296.4H2181V296.5H2184V297.3H2187V298.2H2190V297.6H2193V297.5H2196V297.9H2199V297.7H2202V299H2391V293H2394V299H2412V298H2415V299H2418V294H2421V299H2448V297.9H2454V297.8H2457V297.3H2460V297.6H2463V297.7H2466V299H2478V296.2H2481V296.6H2484V297.1H2487V295.6H2490V295.9H2493V296.3H2496V295.3H2499V295.4H2502V294.4H2505V294.8H2508V296.1H2511V292.4H2514V290.9H2517V289.2H2520V292.2H2523V287H2526V292.8H2529V289.7H2532V289.2H2535V290.1H2538V288.6H2541V294H2544V294.5H2547V294.6H2550V295.2H2553V293.3H2556V292.8H2559V295.1H2562V294.2H2565V297.2H2568V294H2571V294.3H2574V292.5H2577V293.4H2580V296.1H2583V295.6H2586V294.2H2589V297.4H2592V295.2H2595V296.7H2598V296.9H2601V297.2H2604V293.7H2607V296.9H2610V296.3H2613V295.5H2616V293.1H2619V297.1H2622V295.3H2625V294.8H2628V293.1H2631V293.4H2634V293.2H2637V296.1H2640V295.4H2643V295.7H2646V293.1H2649V292.7H2652V296.7H2655V296.6H2658V296.3H2664V295.1H2667V294.6H2670V296.2H2673V288.5H2676V295.4H2679V295.7H2682V294.7H2685V292.7H2688V291H2691V294.9H2694V294.4H2697V294.1H2700V295H2703V295.8H2706V296H2709V295.5H2712V295.7H2715V294.9H2718V295.9H2721V293.4H2724V294.2H2727V295.6H2730V295.2H2733V295H2736V298.4H2775V297.4H2778V298.4H2901V299H3141V298.8H3144V297.8H3147V297.6H3150V298.3H3156V298.9H3162V298.5H3165V298.6H3168V297.8H3171V298.8H3174V299H3177V297.7H3180V298.3H3183V298.8H3186V298.2H3189V299H3192V298.3H3195V299H3207V295.5H3210V295.8H3213V296.1H3216V297H3219V299H3228V297.1H3231V297.6H3234V296.1H3237V296.7H3240V296.1H3243V297.2H3246V297.4H3249V296H3252V299H3255V283H3258V296H3261V296.3H3264V296.4H3270V296.5H3273V297.5H3276V297H3279V299H3318V298H3321V299H3603V291H3606V297H3609V299H3687V298H3690V299H3696V295.5H3699V299H3706V300Z" fill="#99ffb3"/><path d="M1833.5 45V300M1853.5 45V300M1873.5 45V300M1893.5 45V300M1913.5 45V300M1934.5 45V300M1954.5 45V300M1974.5 45V300M1994.5 45V300M2014.5 45V300M2034.5 45V300M2054.5 45V300M2074.5 45V300M2094.5 45V300M2114.5 45V300M2134.5 45V300M2154.5 45V300M2174.5 45V300M2194.5 45V300M2214.5 45V300M2234.5 45V300M2254.5 45V300M2274.5 45V300M2294.5 45V300M2314.5 45V300M2334.5 45V300M2354.5 45V300M2374.5 45V300M2394.5 45V300M2414.5 45V300M2434.5 45V300M2454.5 45V300M2474.5 45V300M2494.5 45V300M2514.5 45V300M2534.5 45V300M2554.5 45V300M2574.5 45V300M2594.5 45V300M2614.5 45V300M2634.5 45V300M2654.5 45V300M2674.5 45V300M2694.5 45V300M2714.5 45V300M2734.5 45V300M2754.5 45V300M2774.5 45V300M2794.5 45V300M2814.5 45V300M2834.5 45V300M2854.5 45V300M2874.5 45V300M2894.5 45V300M2914.5 45V300M2934.5 45V300M2954.5 45V300M2974.5 45V300M2994.5 45V300M3014.5 45V300M3034.5 45V300M3054.5 45V300M3074.5 45V300M3094.5 45V300M3114.5 45V300M3134.5 45V300M3154.5 45V300M3174.5 45V300M3194.5 45V300M3214.5 45V300M3234.5 45V300M3254.5 45V300M3274.5 45V300M3294.5 45V300M3314.5 45V300M3334.5 45V300M3354.5 45V300M3374.5 45V300M3394.5 45V300M3414.5 45V300M3434.5 45V300M3454.5 45V300M3474.5 45V300M3494.5 45V300M3514.5 45V300M3534.5 45V300M3554.5 45V300M3574.5 45V300M3594.5 45V300M3614.5 45V300M3634.5 45V300M3654.5 45V300M3674.5 45V300M3694.5 45V300M1813 279.5H3706M1813 259.5H3706M1813 239.5H3706M1813 219.5H3706M1813 199.5H3706M1813 179.5H3706M1813 159.5H3706M1813 139.5H3706M1813 119.5H3706M1813 99.5H3706M1813 79.5H3706M1813 59.5H3706" stroke="#a9c3ea" stroke-width="1" fill="none"/><rect x="1814" y="45" width="26" height="255" fill="url(#gsh)"/><path d="M1914 299H1917V297H1920V299H2037V298H2040V299H2058V297H2061V299H2103V297.7H2106V298.1H2109V296.9H2112V298.3H2115V297.2H2118V297.6H2121V298.4H2124V297.2H2127V298.4H2130V297.4H2133V298.3H2139V299H2145V297.2H2148V296.3H2151V297.8H2154V297.6H2157V296.7H2160V294.7H2163V295.4H2166V293.1H2169V296.8H2172V293.6H2175V295.8H2178V296.4H2181V296.5H2184V297.3H2187V298.2H2190V297.6H2193V297.5H2196V297.9H2199V297.7H2202V299H2391V293H2394V299H2412V298H2415V299H2418V294H2421V299H2448V297.9H2454V297.8H2457V297.3H2460V297.6H2463V297.7H2466V299H2478V296.2H2481V296.6H2484V297.1H2487V295.6H2490V295.9H2493V296.3H2496V295.3H2499V295.4H2502V294.4H2505V294.8H2508V296.1H2511V292.4H2514V290.9H2517V289.2H2520V292.2H2523V287H2526V292.8H2529V289.7H2532V289.2H2535V290.1H2538V288.6H2541V294H2544V294.5H2547V294.6H2550V295.2H2553V293.3H2556V292.8H2559V295.1H2562V294.2H2565V297.2H2568V294H2571V294.3H2574V292.5H2577V293.4H2580V296.1H2583V295.6H2586V294.2H2589V297.4H2592V295.2H2595V296.7H2598V296.9H2601V297.2H2604V293.7H2607V296.9H2610V296.3H2613V295.5H2616V293.1H2619V297.1H2622V295.3H2625V294.8H2628V293.1H2631V293.4H2634V293.2H2637V296.1H2640V295.4H2643V295.7H2646V293.1H2649V292.7H2652V296.7H2655V296.6H2658V296.3H2664V295.1H2667V294.6H2670V296.2H2673V288.5H2676V295.4H2679V295.7H2682V294.7H2685V292.7H2688V291H2691V294.9H2694V294.4H2697V294.1H2700V295H2703V295.8H2706V296H2709V295.5H2712V295.7H2715V294.9H2718V295.9H2721V293.4H2724V294.2H2727V295.6H2730V295.2H2733V295H2736V298.4H2775V297.4H2778V298.4H2901V299H3141V298.8H3144V297.8H3147V297.6H3150V298.3H3156V298.9H3162V298.5H3165V298.6H3168V297.8H3171V298.8H3174V299H3177V297.7H3180V298.3H3183V298.8H3186V298.2H3189V299H3192V298.3H3195V299H3207V295.5H3210V295.8H3213V296.1H3216V297H3219V299H3228V297.1H3231V297.6H3234V296.1H3237V296.7H3240V296.1H3243V297.2H3246V297.4H3249V296H3252V299H3255V283H3258V296H3261V296.3H3264V296.4H3270V296.5H3273V297.5H3276V297H3279V299H3318V298H3321V299H3603V291H3606V297H3609V299H3687V298H3690V299H3696V295.5H3699V299H3706" stroke="#00e64a" stroke-width="1.3" fill="none"/></svg>
<svg class="gsv" style="top:358px;height:254px" viewBox="1814 359 1891 254"><path d="M1914 613V612.4H2070V611H2073V612.4H2112V611H2115V612.4H2124V611H2127V612.4H2136V611H2139V612.4H2157V611H2160V612.4H2163V611H2166V612.4H2244V611H2247V612.4H2265V611H2268V612.4H2334V610.8H2349V612.4H2352V611.6H2364V612.4H2370V610.8H2385V609.5H2391V586H2394V604.5H2397V592H2400V583H2403V563H2406V580H2409V578H2412V573H2415V577H2418V573H2421V577H2424V589H2427V582H2430V587H2433V582H2436V578H2439V576H2442V582H2445V583H2448V593.5H2454V593H2457V595.5H2460V591H2463V592.5H2466V589.5H2469V591.5H2472V594.5H2475V580H2478V593H2481V602.5H2484V600.5H2487V604.5H2490V603.5H2493V598.5H2496V594.5H2499V593.5H2502V596.5H2505V595.5H2508V590.5H2511V596.5H2514V593.5H2517V592.5H2520V591H2523V586.5H2526V589H2529V594.5H2532V587.5H2541V589.5H2544V595.5H2547V590H2550V582.5H2553V586.5H2556V612.4H2673V611.4H2676V612.4H2688V608.5H2691V593H2694V592H2697V599.5H2700V598.5H2703V600.5H2706V603.5H2709V611.5H2712V606.5H2715V605H2718V606H2721V607.5H2724V595.5H2727V601.5H2730V592.5H2733V608.5H2736V607.5H2739V604.5H2742V609.5H2745V611.5H2748V606.5H2751V611.5H2754V610.5H2757V607.5H2760V610.5H2763V600.5H2766V599.5H2769V604H2772V610.5H2781V611.5H2784V609.5H2787V612.2H2790V609H2796V611H2799V610H2802V611.5H2805V609H2808V611H2811V610.5H2814V610H2817V604H2820V610H2826V612H2832V603H2835V611H2838V612.4H2844V612H2847V611H2850V610H2853V611H2856V612H2859V611H2862V609H2865V611H2868V610H2871V612H2874V609H2877V601H2880V605H2886V609H2889V607H2892V609H2895V607H2898V608H2901V607H2904V605H2907V607H2910V608H2913V610H2916V609H2919V610H2922V608H2925V610H2928V608H2931V609H2934V607H2937V605H2940V600H2943V607H2946V609H2949V608H2952V607H2955V609H2964V600H2967V601H2970V600H2973V607H2976V608H2979V609H2982V608H2985V609H2988V600H2991V607H2994V605H2997V609H3000V600H3003V601H3006V609H3009V608H3012V609H3015V601H3018V609H3021V601H3024V608H3033V610H3036V608H3039V610H3042V609H3045V608H3048V600H3051V580H3054V576H3057V587.6H3060V591.3H3063V591.6H3066V599H3069V600.9H3072V597.3H3075V591H3078V593H3081V591H3084V595.4H3087V588H3090V595.1H3093V593.4H3096V590.8H3099V599H3102V595.8H3105V588H3108V597.8H3111V595.7H3114V584.7H3117V591.3H3120V587.5H3123V598.2H3126V587H3129V587.6H3132V598.1H3135V598H3138V585.3H3141V584.4H3144V593.1H3147V591.3H3150V581.7H3153V586H3156V584H3159V577H3162V575H3168V577H3171V585.3H3174V581.7H3177V584.8H3180V586.4H3183V587.3H3186V598H3189V589.4H3192V587.9H3195V597.3H3198V589.1H3201V588.6H3207V590.5H3210V588.4H3213V599H3216V594.3H3219V593.2H3222V591.3H3225V593.1H3228V595.2H3231V584.4H3234V585.5H3237V589.7H3240V576H3243V582.8H3246V588.6H3249V590.3H3252V576H3258V595.9H3261V585H3264V583.8H3267V576H3270V595H3273V612.4H3411V611H3414V612.4H3417V610H3420V612.4H3429V611H3432V612.4H3435V610H3438V612.4H3444V610H3447V612.4H3453V611H3456V612.4H3465V611H3468V612.4H3471V610H3474V612.4H3477V611H3480V612.4H3483V611H3486V612.4H3489V609H3492V612.4H3501V611H3504V610H3507V612.4H3516V611H3519V610H3522V609H3525V607H3528V612.4H3531V610H3534V608H3537V612.4H3540V608H3543V612.4H3552V611H3555V609H3558V612.4H3561V611H3564V608H3567V610H3570V611H3573V612.4H3585V610H3588V608H3591V607H3597V611H3600V612.4H3612V611H3615V612.4H3627V611H3633V612.4H3706V613Z" fill="#b3ff8c"/><path d="M1833.5 358V613M1853.5 358V613M1873.5 358V613M1893.5 358V613M1913.5 358V613M1934.5 358V613M1954.5 358V613M1974.5 358V613M1994.5 358V613M2014.5 358V613M2034.5 358V613M2054.5 358V613M2074.5 358V613M2094.5 358V613M2114.5 358V613M2134.5 358V613M2154.5 358V613M2174.5 358V613M2194.5 358V613M2214.5 358V613M2234.5 358V613M2254.5 358V613M2274.5 358V613M2294.5 358V613M2314.5 358V613M2334.5 358V613M2354.5 358V613M2374.5 358V613M2394.5 358V613M2414.5 358V613M2434.5 358V613M2454.5 358V613M2474.5 358V613M2494.5 358V613M2514.5 358V613M2534.5 358V613M2554.5 358V613M2574.5 358V613M2594.5 358V613M2614.5 358V613M2634.5 358V613M2654.5 358V613M2674.5 358V613M2694.5 358V613M2714.5 358V613M2734.5 358V613M2754.5 358V613M2774.5 358V613M2794.5 358V613M2814.5 358V613M2834.5 358V613M2854.5 358V613M2874.5 358V613M2894.5 358V613M2914.5 358V613M2934.5 358V613M2954.5 358V613M2974.5 358V613M2994.5 358V613M3014.5 358V613M3034.5 358V613M3054.5 358V613M3074.5 358V613M3094.5 358V613M3114.5 358V613M3134.5 358V613M3154.5 358V613M3174.5 358V613M3194.5 358V613M3214.5 358V613M3234.5 358V613M3254.5 358V613M3274.5 358V613M3294.5 358V613M3314.5 358V613M3334.5 358V613M3354.5 358V613M3374.5 358V613M3394.5 358V613M3414.5 358V613M3434.5 358V613M3454.5 358V613M3474.5 358V613M3494.5 358V613M3514.5 358V613M3534.5 358V613M3554.5 358V613M3574.5 358V613M3594.5 358V613M3614.5 358V613M3634.5 358V613M3654.5 358V613M3674.5 358V613M3694.5 358V613M1813 592.5H3706M1813 572.5H3706M1813 552.5H3706M1813 532.5H3706M1813 512.5H3706M1813 492.5H3706M1813 472.5H3706M1813 452.5H3706M1813 432.5H3706M1813 412.5H3706M1813 392.5H3706M1813 372.5H3706" stroke="#a9c3ea" stroke-width="1" fill="none"/><rect x="1814" y="358" width="26" height="255" fill="url(#gsh)"/><path d="M1914 612.4H2070V611H2073V612.4H2112V611H2115V612.4H2124V611H2127V612.4H2136V611H2139V612.4H2157V611H2160V612.4H2163V611H2166V612.4H2244V611H2247V612.4H2265V611H2268V612.4H2334V610.8H2349V612.4H2352V611.6H2364V612.4H2370V610.8H2385V609.5H2391V586H2394V604.5H2397V592H2400V583H2403V563H2406V580H2409V578H2412V573H2415V577H2418V573H2421V577H2424V589H2427V582H2430V587H2433V582H2436V578H2439V576H2442V582H2445V583H2448V593.5H2454V593H2457V595.5H2460V591H2463V592.5H2466V589.5H2469V591.5H2472V594.5H2475V580H2478V593H2481V602.5H2484V600.5H2487V604.5H2490V603.5H2493V598.5H2496V594.5H2499V593.5H2502V596.5H2505V595.5H2508V590.5H2511V596.5H2514V593.5H2517V592.5H2520V591H2523V586.5H2526V589H2529V594.5H2532V587.5H2541V589.5H2544V595.5H2547V590H2550V582.5H2553V586.5H2556V612.4H2673V611.4H2676V612.4H2688V608.5H2691V593H2694V592H2697V599.5H2700V598.5H2703V600.5H2706V603.5H2709V611.5H2712V606.5H2715V605H2718V606H2721V607.5H2724V595.5H2727V601.5H2730V592.5H2733V608.5H2736V607.5H2739V604.5H2742V609.5H2745V611.5H2748V606.5H2751V611.5H2754V610.5H2757V607.5H2760V610.5H2763V600.5H2766V599.5H2769V604H2772V610.5H2781V611.5H2784V609.5H2787V612.2H2790V609H2796V611H2799V610H2802V611.5H2805V609H2808V611H2811V610.5H2814V610H2817V604H2820V610H2826V612H2832V603H2835V611H2838V612.4H2844V612H2847V611H2850V610H2853V611H2856V612H2859V611H2862V609H2865V611H2868V610H2871V612H2874V609H2877V601H2880V605H2886V609H2889V607H2892V609H2895V607H2898V608H2901V607H2904V605H2907V607H2910V608H2913V610H2916V609H2919V610H2922V608H2925V610H2928V608H2931V609H2934V607H2937V605H2940V600H2943V607H2946V609H2949V608H2952V607H2955V609H2964V600H2967V601H2970V600H2973V607H2976V608H2979V609H2982V608H2985V609H2988V600H2991V607H2994V605H2997V609H3000V600H3003V601H3006V609H3009V608H3012V609H3015V601H3018V609H3021V601H3024V608H3033V610H3036V608H3039V610H3042V609H3045V608H3048V600H3051V580H3054V576H3057V587.6H3060V591.3H3063V591.6H3066V599H3069V600.9H3072V597.3H3075V591H3078V593H3081V591H3084V595.4H3087V588H3090V595.1H3093V593.4H3096V590.8H3099V599H3102V595.8H3105V588H3108V597.8H3111V595.7H3114V584.7H3117V591.3H3120V587.5H3123V598.2H3126V587H3129V587.6H3132V598.1H3135V598H3138V585.3H3141V584.4H3144V593.1H3147V591.3H3150V581.7H3153V586H3156V584H3159V577H3162V575H3168V577H3171V585.3H3174V581.7H3177V584.8H3180V586.4H3183V587.3H3186V598H3189V589.4H3192V587.9H3195V597.3H3198V589.1H3201V588.6H3207V590.5H3210V588.4H3213V599H3216V594.3H3219V593.2H3222V591.3H3225V593.1H3228V595.2H3231V584.4H3234V585.5H3237V589.7H3240V576H3243V582.8H3246V588.6H3249V590.3H3252V576H3258V595.9H3261V585H3264V583.8H3267V576H3270V595H3273V612.4H3411V611H3414V612.4H3417V610H3420V612.4H3429V611H3432V612.4H3435V610H3438V612.4H3444V610H3447V612.4H3453V611H3456V612.4H3465V611H3468V612.4H3471V610H3474V612.4H3477V611H3480V612.4H3483V611H3486V612.4H3489V609H3492V612.4H3501V611H3504V610H3507V612.4H3516V611H3519V610H3522V609H3525V607H3528V612.4H3531V610H3534V608H3537V612.4H3540V608H3543V612.4H3552V611H3555V609H3558V612.4H3561V611H3564V608H3567V610H3570V611H3573V612.4H3585V610H3588V608H3591V607H3597V611H3600V612.4H3612V611H3615V612.4H3627V611H3633V612.4H3706" stroke="#66dd11" stroke-width="1.3" fill="none"/></svg>
<svg class="gsv" style="top:671px;height:254px" viewBox="1814 672 1891 254"><path d="M1914 926V772.5H1917V797.8H1920V794.1H1932V790.6H1935V786.7H1944V783.4H1947V780H1950V781.6H1959V776.5H1974V772.5H1980V760.7H1983V772.5H1986V769.8H1989V768.4H1992V760.7H1995V769.8H2001V768.4H2007V769.8H2016V768.4H2019V769.8H2022V763.7H2025V769.8H2031V771.6H2040V763.7H2043V772.5H2052V763.7H2055V768.4H2058V763.7H2061V772.5H2070V768.4H2073V772.5H2076V769.8H2079V772.5H2094V768.4H2097V769.8H2100V768.4H2103V772.5H2106V768.4H2109V772.5H2127V769.8H2133V772.5H2148V767.2H2151V772.5H2154V763.7H2157V772.5H2160V774.4H2178V772.5H2181V774.4H2190V771.6H2193V772.5H2196V774.4H2226V771.6H2229V772.5H2235V767.4H2238V775.5H2241V774.4H2244V772.5H2253V771.6H2256V774.4H2259V772.5H2262V774.4H2274V775.5H2277V772.5H2283V771.6H2286V774.4H2301V769.3H2304V774.4H2307V767.4H2310V774.4H2316V769.3H2319V774.4H2322V772.5H2325V771.6H2328V767.4H2331V774.4H2334V769.3H2337V774.4H2340V767.4H2343V774.4H2346V772.5H2349V774.4H2355V772.5H2358V774.4H2361V772.5H2364V774.4H2367V767.4H2370V774.4H2373V771.6H2376V774.4H2379V769.3H2382V774.4H2391V769.3H2394V772.5H2400V774.4H2403V775.5H2406V772.5H2409V771.6H2412V772.5H2415V774.4H2418V771.6H2421V774.4H2439V766H2442V767.2H2445V751.2H2448V774.4H2481V775.5H2484V774.4H2511V775.5H2514V774.4H2535V772.5H2538V774.4H2544V775.5H2547V774.4H2580V775.5H2583V772.5H2586V774.4H2595V772.5H2598V774.4H2709V772.5H2712V774.4H2736V771.6H2739V772.5H2742V774.4H2778V775.5H2787V774.4H2790V775.5H2793V772.5H2796V774.4H2802V771.6H2805V774.4H2811V772.5H2814V774.4H2820V775.5H2823V774.4H2844V771.6H2847V774.4H2871V775.5H2874V767.4H2877V766.3H2880V774.4H2886V767.4H2889V774.4H2895V757.9H2898V774.4H2904V765.1H2907V769.3H2910V774.4H2916V764H2919V772.5H2925V774.4H2937V772.5H2940V774.4H2946V769.3H2949V765.1H2952V769.3H2955V772.5H2958V774.4H2976V767.4H2979V769.3H2982V774.4H2994V772.5H2997V760.2H3000V774.4H3003V772.5H3006V765.1H3009V772.5H3012V775.5H3015V772.5H3018V774.4H3021V767.4H3024V775.5H3027V761.6H3030V774.4H3066V775.5H3069V774.4H3078V767.4H3081V772.5H3087V774.4H3093V766.3H3096V774.4H3105V767.4H3108V774.4H3114V769.3H3117V774.4H3120V775.5H3123V774.4H3135V765.1H3138V775.5H3141V774.4H3147V765.1H3150V774.4H3153V772.5H3156V774.4H3168V769.3H3171V774.4H3177V769.3H3180V766.3H3183V767.4H3186V772.5H3192V774.4H3195V760.2H3198V774.4H3213V769.3H3216V774.4H3231V764H3234V774.4H3243V761.6H3246V774.4H3249V772.5H3255V774.4H3258V764H3261V774.4H3264V764H3267V767.4H3273V775.5H3276V774.4H3285V769.3H3288V761.6H3291V774.4H3297V761.6H3300V774.4H3306V767.4H3309V774.4H3312V765.1H3315V766.3H3321V774.4H3330V769.3H3333V765.1H3336V767.4H3339V772.5H3342V774.4H3348V775.5H3351V774.4H3354V769.3H3357V774.4H3360V765.1H3363V772.5H3369V774.4H3375V769.3H3378V772.5H3381V769.3H3384V774.4H3387V761.6H3390V774.4H3393V767.4H3396V774.4H3405V775.5H3408V774.4H3423V775.5H3426V774.4H3429V761.6H3432V772.5H3435V761.6H3438V774.4H3444V767.4H3447V774.4H3453V772.5H3456V774.4H3465V772.5H3468V774.4H3483V767.4H3486V774.4H3489V769.3H3492V774.4H3501V767.4H3504V761.6H3507V774.4H3528V769.3H3531V772.5H3534V774.4H3537V772.5H3540V774.4H3552V775.5H3555V774.4H3558V772.5H3567V774.4H3573V767.4H3576V774.4H3582V764H3585V774.4H3591V775.5H3594V774.4H3597V761.6H3600V774.4H3603V761.6H3606V764H3609V775.5H3612V774.4H3618V767.4H3621V774.4H3639V769.3H3642V774.4H3645V769.3H3648V772.5H3651V761.6H3654V774.4H3663V769.3H3666V772.5H3669V774.4H3675V767.4H3678V774.4H3681V767.4H3684V774.4H3687V772.5H3690V774.4H3696V772.5H3699V774.4H3706V926Z" fill="#ff9999"/><path d="M1833.5 671V926M1853.5 671V926M1873.5 671V926M1893.5 671V926M1913.5 671V926M1934.5 671V926M1954.5 671V926M1974.5 671V926M1994.5 671V926M2014.5 671V926M2034.5 671V926M2054.5 671V926M2074.5 671V926M2094.5 671V926M2114.5 671V926M2134.5 671V926M2154.5 671V926M2174.5 671V926M2194.5 671V926M2214.5 671V926M2234.5 671V926M2254.5 671V926M2274.5 671V926M2294.5 671V926M2314.5 671V926M2334.5 671V926M2354.5 671V926M2374.5 671V926M2394.5 671V926M2414.5 671V926M2434.5 671V926M2454.5 671V926M2474.5 671V926M2494.5 671V926M2514.5 671V926M2534.5 671V926M2554.5 671V926M2574.5 671V926M2594.5 671V926M2614.5 671V926M2634.5 671V926M2654.5 671V926M2674.5 671V926M2694.5 671V926M2714.5 671V926M2734.5 671V926M2754.5 671V926M2774.5 671V926M2794.5 671V926M2814.5 671V926M2834.5 671V926M2854.5 671V926M2874.5 671V926M2894.5 671V926M2914.5 671V926M2934.5 671V926M2954.5 671V926M2974.5 671V926M2994.5 671V926M3014.5 671V926M3034.5 671V926M3054.5 671V926M3074.5 671V926M3094.5 671V926M3114.5 671V926M3134.5 671V926M3154.5 671V926M3174.5 671V926M3194.5 671V926M3214.5 671V926M3234.5 671V926M3254.5 671V926M3274.5 671V926M3294.5 671V926M3314.5 671V926M3334.5 671V926M3354.5 671V926M3374.5 671V926M3394.5 671V926M3414.5 671V926M3434.5 671V926M3454.5 671V926M3474.5 671V926M3494.5 671V926M3514.5 671V926M3534.5 671V926M3554.5 671V926M3574.5 671V926M3594.5 671V926M3614.5 671V926M3634.5 671V926M3654.5 671V926M3674.5 671V926M3694.5 671V926M1813 905.5H3706M1813 885.5H3706M1813 865.5H3706M1813 845.5H3706M1813 825.5H3706M1813 805.5H3706M1813 785.5H3706M1813 765.5H3706M1813 745.5H3706M1813 725.5H3706M1813 705.5H3706M1813 685.5H3706" stroke="#a9c3ea" stroke-width="1" fill="none"/><rect x="1814" y="671" width="26" height="255" fill="url(#gsh)"/><path d="M1914 772.5H1917V797.8H1920V794.1H1932V790.6H1935V786.7H1944V783.4H1947V780H1950V781.6H1959V776.5H1974V772.5H1980V760.7H1983V772.5H1986V769.8H1989V768.4H1992V760.7H1995V769.8H2001V768.4H2007V769.8H2016V768.4H2019V769.8H2022V763.7H2025V769.8H2031V771.6H2040V763.7H2043V772.5H2052V763.7H2055V768.4H2058V763.7H2061V772.5H2070V768.4H2073V772.5H2076V769.8H2079V772.5H2094V768.4H2097V769.8H2100V768.4H2103V772.5H2106V768.4H2109V772.5H2127V769.8H2133V772.5H2148V767.2H2151V772.5H2154V763.7H2157V772.5H2160V774.4H2178V772.5H2181V774.4H2190V771.6H2193V772.5H2196V774.4H2226V771.6H2229V772.5H2235V767.4H2238V775.5H2241V774.4H2244V772.5H2253V771.6H2256V774.4H2259V772.5H2262V774.4H2274V775.5H2277V772.5H2283V771.6H2286V774.4H2301V769.3H2304V774.4H2307V767.4H2310V774.4H2316V769.3H2319V774.4H2322V772.5H2325V771.6H2328V767.4H2331V774.4H2334V769.3H2337V774.4H2340V767.4H2343V774.4H2346V772.5H2349V774.4H2355V772.5H2358V774.4H2361V772.5H2364V774.4H2367V767.4H2370V774.4H2373V771.6H2376V774.4H2379V769.3H2382V774.4H2391V769.3H2394V772.5H2400V774.4H2403V775.5H2406V772.5H2409V771.6H2412V772.5H2415V774.4H2418V771.6H2421V774.4H2439V766H2442V767.2H2445V751.2H2448V774.4H2481V775.5H2484V774.4H2511V775.5H2514V774.4H2535V772.5H2538V774.4H2544V775.5H2547V774.4H2580V775.5H2583V772.5H2586V774.4H2595V772.5H2598V774.4H2709V772.5H2712V774.4H2736V771.6H2739V772.5H2742V774.4H2778V775.5H2787V774.4H2790V775.5H2793V772.5H2796V774.4H2802V771.6H2805V774.4H2811V772.5H2814V774.4H2820V775.5H2823V774.4H2844V771.6H2847V774.4H2871V775.5H2874V767.4H2877V766.3H2880V774.4H2886V767.4H2889V774.4H2895V757.9H2898V774.4H2904V765.1H2907V769.3H2910V774.4H2916V764H2919V772.5H2925V774.4H2937V772.5H2940V774.4H2946V769.3H2949V765.1H2952V769.3H2955V772.5H2958V774.4H2976V767.4H2979V769.3H2982V774.4H2994V772.5H2997V760.2H3000V774.4H3003V772.5H3006V765.1H3009V772.5H3012V775.5H3015V772.5H3018V774.4H3021V767.4H3024V775.5H3027V761.6H3030V774.4H3066V775.5H3069V774.4H3078V767.4H3081V772.5H3087V774.4H3093V766.3H3096V774.4H3105V767.4H3108V774.4H3114V769.3H3117V774.4H3120V775.5H3123V774.4H3135V765.1H3138V775.5H3141V774.4H3147V765.1H3150V774.4H3153V772.5H3156V774.4H3168V769.3H3171V774.4H3177V769.3H3180V766.3H3183V767.4H3186V772.5H3192V774.4H3195V760.2H3198V774.4H3213V769.3H3216V774.4H3231V764H3234V774.4H3243V761.6H3246V774.4H3249V772.5H3255V774.4H3258V764H3261V774.4H3264V764H3267V767.4H3273V775.5H3276V774.4H3285V769.3H3288V761.6H3291V774.4H3297V761.6H3300V774.4H3306V767.4H3309V774.4H3312V765.1H3315V766.3H3321V774.4H3330V769.3H3333V765.1H3336V767.4H3339V772.5H3342V774.4H3348V775.5H3351V774.4H3354V769.3H3357V774.4H3360V765.1H3363V772.5H3369V774.4H3375V769.3H3378V772.5H3381V769.3H3384V774.4H3387V761.6H3390V774.4H3393V767.4H3396V774.4H3405V775.5H3408V774.4H3423V775.5H3426V774.4H3429V761.6H3432V772.5H3435V761.6H3438V774.4H3444V767.4H3447V774.4H3453V772.5H3456V774.4H3465V772.5H3468V774.4H3483V767.4H3486V774.4H3489V769.3H3492V774.4H3501V767.4H3504V761.6H3507V774.4H3528V769.3H3531V772.5H3534V774.4H3537V772.5H3540V774.4H3552V775.5H3555V774.4H3558V772.5H3567V774.4H3573V767.4H3576V774.4H3582V764H3585V774.4H3591V775.5H3594V774.4H3597V761.6H3600V774.4H3603V761.6H3606V764H3609V775.5H3612V774.4H3618V767.4H3621V774.4H3639V769.3H3642V774.4H3645V769.3H3648V772.5H3651V761.6H3654V774.4H3663V769.3H3666V772.5H3669V774.4H3675V767.4H3678V774.4H3681V767.4H3684V774.4H3687V772.5H3690V774.4H3696V772.5H3699V774.4H3706" stroke="#ff0000" stroke-width="1.3" fill="none"/></svg>
<svg class="gsv" style="top:984px;height:254px" viewBox="1814 985 1891 254"><path d="M1914 1239V1211.4H1917V1220.3H1920V1219.7H1923V1218.3H1926V1219.7H1929V1220H1932V1219.7H1947V1220H1950V1219.7H1953V1219.5H1956V1219H1959V1219.7H1962V1218.6H1965V1219.7H1974V1219.5H1977V1219.7H1983V1219.5H1986V1219.7H1995V1218.6H2001V1220H2004V1219.7H2037V1219H2040V1219.7H2049V1219.5H2052V1219.7H2061V1219.5H2064V1219.7H2082V1218.6H2088V1219.7H2091V1218.6H2094V1219.7H2109V1220H2112V1219.7H2118V1220H2124V1219.7H2139V1219.5H2142V1219.7H2145V1219H2148V1219.5H2151V1219.7H2154V1219.5H2157V1218.6H2160V1219.7H2163V1220H2166V1219.7H2172V1218.6H2175V1219.7H2184V1220H2187V1219.7H2190V1219H2193V1219.7H2196V1219H2199V1219.7H2202V1220H2205V1219.7H2208V1218.6H2211V1219.7H2220V1219.5H2223V1219.7H2232V1219H2235V1218.6H2238V1219.7H2250V1219H2253V1219.7H2277V1220H2280V1219.7H2289V1218.6H2292V1219H2295V1219.5H2298V1219.7H2304V1218.6H2307V1219.7H2313V1220H2316V1219.5H2319V1219.7H2328V1220H2331V1219.7H2340V1218.6H2343V1219.7H2346V1219.5H2349V1219.7H2355V1219.5H2358V1219.7H2367V1219.5H2370V1219.7H2376V1220H2379V1218.6H2382V1219.7H2385V1219H2388V1220H2394V1219.7H2397V1220H2400V1219.7H2406V1220H2409V1219.5H2412V1219.7H2418V1219.5H2421V1219H2424V1219.7H2427V1220H2430V1219.7H2439V1220H2442V1219.7H2445V1219H2451V1217.9H2454V1218.6H2463V1217.5H2466V1218.6H2475V1217.9H2478V1218.6H2481V1218.9H2484V1218.6H2496V1217.5H2499V1218.6H2502V1218.9H2505V1217.9H2508V1218.6H2517V1218.9H2520V1218.6H2523V1217.9H2526V1218.6H2538V1218.3H2541V1218.6H2547V1218.9H2550V1218.6H2556V1217.9H2559V1218.6H2562V1217.9H2565V1218.6H2574V1218.9H2577V1218.6H2583V1218.3H2586V1218.6H2589V1217.5H2595V1217.9H2598V1218.3H2601V1218.6H2604V1217.5H2607V1217.9H2610V1218.6H2622V1217.5H2625V1218.9H2628V1217.5H2631V1218.6H2643V1218.9H2646V1218.6H2667V1218.9H2670V1218.6H2673V1217.9H2676V1218.6H2679V1218.3H2682V1218.9H2685V1218.6H2688V1218.3H2691V1217.5H2694V1218.6H2697V1217.5H2700V1218.6H2715V1218.3H2718V1218.6H2721V1218.3H2724V1218.6H2727V1217.9H2730V1218.6H2736V1217.9H2739V1217.5H2742V1218.6H2751V1217.9H2757V1218.6H2760V1217.5H2763V1218.6H2772V1218.3H2778V1217.5H2781V1217.9H2784V1218.6H2787V1218.9H2790V1218.6H2796V1217.5H2799V1218.3H2802V1217.5H2805V1218.9H2808V1218.6H2814V1217.5H2817V1218.6H2826V1218.3H2829V1218.6H2835V1217.5H2841V1217.9H2844V1218.6H2850V1217.5H2853V1218.3H2862V1218.6H2865V1218.9H2868V1218.6H2871V1218.9H2874V1218.3H2880V1218.6H2883V1217.5H2889V1218.6H2895V1218.9H2898V1218.6H2901V1218.3H2904V1218.6H2913V1218.9H2916V1218.6H2922V1218.9H2925V1218.6H2931V1217.5H2934V1218.9H2937V1218.6H2949V1218.3H2952V1218.6H2955V1218.9H2958V1217.9H2964V1218.6H2970V1218.9H2973V1218.6H2979V1218.9H2982V1218.6H2994V1218.9H2997V1217.5H3000V1218.9H3003V1217.9H3006V1217.5H3009V1218.6H3024V1217.9H3027V1218.6H3030V1217.5H3033V1218.6H3036V1217.9H3039V1218.6H3042V1218.9H3045V1218.6H3051V1217.5H3054V1218.6H3066V1217.9H3069V1218.9H3072V1218.6H3075V1217.9H3078V1218.6H3084V1218.3H3090V1217.5H3096V1218.9H3099V1218.3H3102V1218.9H3105V1218.3H3108V1218.6H3114V1218.9H3117V1218.6H3126V1218.3H3129V1217.5H3132V1218.6H3135V1218.9H3138V1218.6H3147V1218.9H3150V1217.9H3153V1218.9H3156V1218.6H3159V1217.9H3162V1218.6H3165V1218.3H3168V1217.5H3171V1217.9H3174V1218.6H3198V1218.3H3201V1218.6H3204V1218.3H3207V1218.9H3210V1218.6H3222V1217.5H3225V1218.6H3234V1218.9H3237V1218.6H3243V1217.5H3246V1218.6H3249V1218.3H3252V1218.6H3258V1217.5H3261V1218.6H3267V1217.9H3270V1218.6H3273V1218.3H3276V1218.6H3285V1217.5H3291V1218.6H3294V1218.3H3297V1217.5H3300V1218.6H3306V1218.3H3309V1218.6H3315V1217.5H3318V1218.9H3324V1218.6H3342V1217.5H3345V1217.9H3348V1218.6H3351V1217.9H3357V1217.5H3360V1218.6H3369V1217.9H3372V1218.6H3381V1217.9H3384V1218.6H3393V1218.9H3396V1218.3H3399V1218.6H3414V1217.5H3417V1218.6H3426V1217.9H3429V1217.5H3432V1218.9H3435V1218.6H3438V1218.3H3441V1218.9H3447V1218.6H3453V1217.9H3456V1218.6H3459V1217.9H3462V1218.3H3465V1218.6H3471V1218.3H3474V1218.6H3483V1218.9H3486V1218.6H3492V1217.5H3495V1218.3H3498V1218.6H3510V1217.5H3513V1218.6H3516V1218.3H3522V1218.6H3531V1218.3H3534V1218.6H3537V1217.9H3540V1218.6H3543V1217.5H3549V1218.6H3555V1218.3H3558V1218.6H3582V1218.9H3588V1218.6H3594V1218.3H3597V1218.9H3600V1218.6H3603V1217.5H3606V1218.3H3609V1218.6H3612V1218.9H3618V1218.6H3636V1218.3H3639V1218.9H3642V1218.6H3645V1217.9H3648V1218.6H3669V1218.9H3672V1218.6H3690V1218.9H3696V1218.6H3706V1239Z" fill="#99b3ff"/><path d="M1833.5 984V1239M1853.5 984V1239M1873.5 984V1239M1893.5 984V1239M1913.5 984V1239M1934.5 984V1239M1954.5 984V1239M1974.5 984V1239M1994.5 984V1239M2014.5 984V1239M2034.5 984V1239M2054.5 984V1239M2074.5 984V1239M2094.5 984V1239M2114.5 984V1239M2134.5 984V1239M2154.5 984V1239M2174.5 984V1239M2194.5 984V1239M2214.5 984V1239M2234.5 984V1239M2254.5 984V1239M2274.5 984V1239M2294.5 984V1239M2314.5 984V1239M2334.5 984V1239M2354.5 984V1239M2374.5 984V1239M2394.5 984V1239M2414.5 984V1239M2434.5 984V1239M2454.5 984V1239M2474.5 984V1239M2494.5 984V1239M2514.5 984V1239M2534.5 984V1239M2554.5 984V1239M2574.5 984V1239M2594.5 984V1239M2614.5 984V1239M2634.5 984V1239M2654.5 984V1239M2674.5 984V1239M2694.5 984V1239M2714.5 984V1239M2734.5 984V1239M2754.5 984V1239M2774.5 984V1239M2794.5 984V1239M2814.5 984V1239M2834.5 984V1239M2854.5 984V1239M2874.5 984V1239M2894.5 984V1239M2914.5 984V1239M2934.5 984V1239M2954.5 984V1239M2974.5 984V1239M2994.5 984V1239M3014.5 984V1239M3034.5 984V1239M3054.5 984V1239M3074.5 984V1239M3094.5 984V1239M3114.5 984V1239M3134.5 984V1239M3154.5 984V1239M3174.5 984V1239M3194.5 984V1239M3214.5 984V1239M3234.5 984V1239M3254.5 984V1239M3274.5 984V1239M3294.5 984V1239M3314.5 984V1239M3334.5 984V1239M3354.5 984V1239M3374.5 984V1239M3394.5 984V1239M3414.5 984V1239M3434.5 984V1239M3454.5 984V1239M3474.5 984V1239M3494.5 984V1239M3514.5 984V1239M3534.5 984V1239M3554.5 984V1239M3574.5 984V1239M3594.5 984V1239M3614.5 984V1239M3634.5 984V1239M3654.5 984V1239M3674.5 984V1239M3694.5 984V1239M1813 1218.5H3706M1813 1198.5H3706M1813 1178.5H3706M1813 1158.5H3706M1813 1138.5H3706M1813 1118.5H3706M1813 1098.5H3706M1813 1078.5H3706M1813 1058.5H3706M1813 1038.5H3706M1813 1018.5H3706M1813 998.5H3706" stroke="#a9c3ea" stroke-width="1" fill="none"/><rect x="1814" y="984" width="26" height="255" fill="url(#gsh)"/><path d="M1914 1211.4H1917V1220.3H1920V1219.7H1923V1218.3H1926V1219.7H1929V1220H1932V1219.7H1947V1220H1950V1219.7H1953V1219.5H1956V1219H1959V1219.7H1962V1218.6H1965V1219.7H1974V1219.5H1977V1219.7H1983V1219.5H1986V1219.7H1995V1218.6H2001V1220H2004V1219.7H2037V1219H2040V1219.7H2049V1219.5H2052V1219.7H2061V1219.5H2064V1219.7H2082V1218.6H2088V1219.7H2091V1218.6H2094V1219.7H2109V1220H2112V1219.7H2118V1220H2124V1219.7H2139V1219.5H2142V1219.7H2145V1219H2148V1219.5H2151V1219.7H2154V1219.5H2157V1218.6H2160V1219.7H2163V1220H2166V1219.7H2172V1218.6H2175V1219.7H2184V1220H2187V1219.7H2190V1219H2193V1219.7H2196V1219H2199V1219.7H2202V1220H2205V1219.7H2208V1218.6H2211V1219.7H2220V1219.5H2223V1219.7H2232V1219H2235V1218.6H2238V1219.7H2250V1219H2253V1219.7H2277V1220H2280V1219.7H2289V1218.6H2292V1219H2295V1219.5H2298V1219.7H2304V1218.6H2307V1219.7H2313V1220H2316V1219.5H2319V1219.7H2328V1220H2331V1219.7H2340V1218.6H2343V1219.7H2346V1219.5H2349V1219.7H2355V1219.5H2358V1219.7H2367V1219.5H2370V1219.7H2376V1220H2379V1218.6H2382V1219.7H2385V1219H2388V1220H2394V1219.7H2397V1220H2400V1219.7H2406V1220H2409V1219.5H2412V1219.7H2418V1219.5H2421V1219H2424V1219.7H2427V1220H2430V1219.7H2439V1220H2442V1219.7H2445V1219H2451V1217.9H2454V1218.6H2463V1217.5H2466V1218.6H2475V1217.9H2478V1218.6H2481V1218.9H2484V1218.6H2496V1217.5H2499V1218.6H2502V1218.9H2505V1217.9H2508V1218.6H2517V1218.9H2520V1218.6H2523V1217.9H2526V1218.6H2538V1218.3H2541V1218.6H2547V1218.9H2550V1218.6H2556V1217.9H2559V1218.6H2562V1217.9H2565V1218.6H2574V1218.9H2577V1218.6H2583V1218.3H2586V1218.6H2589V1217.5H2595V1217.9H2598V1218.3H2601V1218.6H2604V1217.5H2607V1217.9H2610V1218.6H2622V1217.5H2625V1218.9H2628V1217.5H2631V1218.6H2643V1218.9H2646V1218.6H2667V1218.9H2670V1218.6H2673V1217.9H2676V1218.6H2679V1218.3H2682V1218.9H2685V1218.6H2688V1218.3H2691V1217.5H2694V1218.6H2697V1217.5H2700V1218.6H2715V1218.3H2718V1218.6H2721V1218.3H2724V1218.6H2727V1217.9H2730V1218.6H2736V1217.9H2739V1217.5H2742V1218.6H2751V1217.9H2757V1218.6H2760V1217.5H2763V1218.6H2772V1218.3H2778V1217.5H2781V1217.9H2784V1218.6H2787V1218.9H2790V1218.6H2796V1217.5H2799V1218.3H2802V1217.5H2805V1218.9H2808V1218.6H2814V1217.5H2817V1218.6H2826V1218.3H2829V1218.6H2835V1217.5H2841V1217.9H2844V1218.6H2850V1217.5H2853V1218.3H2862V1218.6H2865V1218.9H2868V1218.6H2871V1218.9H2874V1218.3H2880V1218.6H2883V1217.5H2889V1218.6H2895V1218.9H2898V1218.6H2901V1218.3H2904V1218.6H2913V1218.9H2916V1218.6H2922V1218.9H2925V1218.6H2931V1217.5H2934V1218.9H2937V1218.6H2949V1218.3H2952V1218.6H2955V1218.9H2958V1217.9H2964V1218.6H2970V1218.9H2973V1218.6H2979V1218.9H2982V1218.6H2994V1218.9H2997V1217.5H3000V1218.9H3003V1217.9H3006V1217.5H3009V1218.6H3024V1217.9H3027V1218.6H3030V1217.5H3033V1218.6H3036V1217.9H3039V1218.6H3042V1218.9H3045V1218.6H3051V1217.5H3054V1218.6H3066V1217.9H3069V1218.9H3072V1218.6H3075V1217.9H3078V1218.6H3084V1218.3H3090V1217.5H3096V1218.9H3099V1218.3H3102V1218.9H3105V1218.3H3108V1218.6H3114V1218.9H3117V1218.6H3126V1218.3H3129V1217.5H3132V1218.6H3135V1218.9H3138V1218.6H3147V1218.9H3150V1217.9H3153V1218.9H3156V1218.6H3159V1217.9H3162V1218.6H3165V1218.3H3168V1217.5H3171V1217.9H3174V1218.6H3198V1218.3H3201V1218.6H3204V1218.3H3207V1218.9H3210V1218.6H3222V1217.5H3225V1218.6H3234V1218.9H3237V1218.6H3243V1217.5H3246V1218.6H3249V1218.3H3252V1218.6H3258V1217.5H3261V1218.6H3267V1217.9H3270V1218.6H3273V1218.3H3276V1218.6H3285V1217.5H3291V1218.6H3294V1218.3H3297V1217.5H3300V1218.6H3306V1218.3H3309V1218.6H3315V1217.5H3318V1218.9H3324V1218.6H3342V1217.5H3345V1217.9H3348V1218.6H3351V1217.9H3357V1217.5H3360V1218.6H3369V1217.9H3372V1218.6H3381V1217.9H3384V1218.6H3393V1218.9H3396V1218.3H3399V1218.6H3414V1217.5H3417V1218.6H3426V1217.9H3429V1217.5H3432V1218.9H3435V1218.6H3438V1218.3H3441V1218.9H3447V1218.6H3453V1217.9H3456V1218.6H3459V1217.9H3462V1218.3H3465V1218.6H3471V1218.3H3474V1218.6H3483V1218.9H3486V1218.6H3492V1217.5H3495V1218.3H3498V1218.6H3510V1217.5H3513V1218.6H3516V1218.3H3522V1218.6H3531V1218.3H3534V1218.6H3537V1217.9H3540V1218.6H3543V1217.5H3549V1218.6H3555V1218.3H3558V1218.6H3582V1218.9H3588V1218.6H3594V1218.3H3597V1218.9H3600V1218.6H3603V1217.5H3606V1218.3H3609V1218.6H3612V1218.9H3618V1218.6H3636V1218.3H3639V1218.9H3642V1218.6H3645V1217.9H3648V1218.6H3669V1218.9H3672V1218.6H3690V1218.9H3696V1218.6H3706" stroke="#0077ff" stroke-width="1.3" fill="none"/></svg>
<svg class="gsv" style="top:1297px;height:254px" viewBox="1814 1298 1891 254"><path d="M1914 1552V1535.8H1919.97V1375.2H1922.95V1372.7H1928.92V1366.7H1931.9V1370.1H1934.88V1368.4H1940.85V1367.5H1943.83V1370.1H1946.82V1367.5H1949.8V1375.2H1952.78V1367.5H1955.77V1370.1H1958.75V1365H1964.72V1377.8H1967.7V1366.7H1970.68V1377.8H1973.67V1362.5H1976.65V1377.8H1979.63V1368.4H1982.62V1375.2H1988.58V1366.7H1991.57V1362.5H1994.55V1366.7H1997.53V1365H2003.5V1466.6H2006.48V1409.2H2009.47V1393.9H2030.35V1467H2033.33V1407.5H2036.32V1393.9H2057.2V1472.1H2060.18V1407.5H2063.17V1393.9H2084.05V1467.8H2087.03V1407.5H2090.01V1393.9H2110.9V1484.4H2113.88V1457.2H2116.86V1393.9H2134.76V1409.2H2137.75V1482.3H2140.73V1455.1H2143.71V1393.9H2161.61V1414.3H2164.6V1491.2H2167.58V1464H2170.56V1393.9H2188.46V1409.2H2191.45V1494.2H2194.43V1467H2197.41V1393.9H2215.31V1409.2H2218.3V1498H2221.28V1470.8H2224.26V1393.9H2242.16V1404.1H2245.15V1498.9H2248.13V1471.7H2251.11V1393.9H2269.01V1404.1H2272V1492.9H2274.98V1465.7H2277.96V1393.9H2295.86V1399H2298.85V1495H2301.83V1467.8H2304.81V1393.9H2322.71V1409.2H2325.7V1498H2328.68V1470.8H2331.66V1393.9H2349.56V1399H2352.55V1486.1H2355.53V1458.9H2358.51V1393.9H2376.41V1399H2379.39V1489.1H2382.38V1461.9H2385.36V1393.9H2403.26V1399H2406.24V1473H2409.23V1445.8H2412.21V1393.9H2430.11V1404.1H2433.09V1475.1H2436.08V1447.9H2439.06V1393.9H2456.96V1404.1H2459.94V1466.6H2462.93V1439.4H2465.91V1393.9H2483.81V1404.1H2486.79V1466.6H2489.78V1439.4H2492.76V1393.9H2510.66V1404.1H2513.64V1466.3H2516.63V1439.1H2519.61V1393.9H2537.51V1399H2540.49V1466.3H2543.48V1439.1H2546.46V1393.9H2564.36V1414.3H2567.34V1466.3H2570.33V1439.1H2573.31V1393.9H2591.21V1409.2H2594.19V1466.3H2597.18V1439.1H2600.16V1393.9H2618.06V1414.3H2621.04V1466.3H2624.03V1439.1H2627.01V1393.9H2644.91V1404.1H2647.89V1466.3H2650.88V1439.1H2653.86V1393.9H2671.76V1414.3H2674.74V1466.3H2677.72V1439.1H2680.71V1393.9H2698.61V1404.1H2701.59V1466.3H2704.57V1439.1H2707.56V1393.9H2725.46V1414.3H2728.44V1466.3H2731.42V1439.1H2734.41V1393.9H2752.31V1414.3H2755.29V1470.1H2758.27V1442.9H2761.26V1393.9H2779.16V1409.2H2782.14V1468.6H2785.12V1441.4H2788.11V1393.9H2806.01V1414.3H2808.99V1468.6H2811.97V1441.4H2814.96V1393.9H2832.86V1414.3H2835.84V1480.9H2838.82V1453.7H2841.81V1393.9H2859.71V1404.1H2862.69V1482.4H2865.67V1455.2H2868.66V1393.9H2886.56V1409.2H2889.54V1482.4H2892.52V1455.2H2895.51V1393.9H2913.41V1414.3H2916.39V1494.7H2919.37V1467.5H2922.36V1393.9H2940.26V1409.2H2943.24V1496.2H2946.22V1469H2949.21V1393.9H2967.1V1414.3H2970.09V1494.7H2973.07V1467.5H2976.05V1393.9H2993.95V1404.1H2996.94V1496.2H2999.92V1469H3002.9V1393.9H3020.8V1414.3H3023.79V1492.3H3026.77V1465.1H3029.75V1393.9H3047.65V1414.3H3050.64V1489H3053.62V1461.8H3056.6V1393.9H3074.5V1409.2H3077.49V1492.3H3080.47V1465.1H3083.45V1393.9H3101.35V1414.3H3104.34V1482.4H3107.32V1455.2H3110.3V1393.9H3128.2V1414.3H3131.19V1482.4H3134.17V1455.2H3137.15V1393.9H3155.05V1409.2H3158.04V1470.1H3161.02V1442.9H3164V1393.9H3181.9V1399H3184.89V1470.1H3187.87V1442.9H3190.85V1393.9H3208.75V1409.2H3211.74V1468.6H3214.72V1441.4H3217.7V1393.9H3235.6V1404.1H3238.59V1467.3H3241.57V1440.1H3244.55V1393.9H3262.45V1414.3H3265.43V1468.6H3268.42V1441.4H3271.4V1393.9H3289.3V1414.3H3292.28V1467.3H3295.27V1440.1H3298.25V1393.9H3316.15V1409.2H3319.13V1466.3H3322.12V1439.1H3325.1V1393.9H3343V1414.3H3345.98V1467.3H3348.97V1440.1H3351.95V1393.9H3369.85V1414.3H3372.83V1467.3H3375.82V1440.1H3378.8V1393.9H3396.7V1399H3399.68V1467.3H3402.67V1440.1H3405.65V1393.9H3423.55V1414.3H3426.53V1466.3H3429.52V1439.1H3432.5V1393.9H3450.4V1404.1H3453.38V1466.3H3456.37V1439.1H3459.35V1393.9H3477.25V1404.1H3480.23V1480H3483.22V1452.8H3486.2V1393.9H3504.1V1409.2H3507.08V1468.6H3510.07V1441.4H3513.05V1393.9H3530.95V1399H3533.93V1473.9H3536.92V1446.7H3539.9V1393.9H3557.8V1414.3H3560.78V1485.2H3563.76V1458H3566.75V1393.9H3584.65V1414.3H3587.63V1487.6H3590.61V1460.4H3593.6V1393.9H3611.5V1409.2H3614.48V1485.2H3617.46V1458H3620.45V1393.9H3638.35V1414.3H3641.33V1496.2H3644.31V1469H3647.3V1393.9H3665.2V1399H3668.18V1493.8H3671.16V1466.6H3674.15V1393.9H3692.05V1409.2H3695.03V1492.3H3698.01V1465.1H3701V1393.9H3706V1552Z" fill="#99ff99"/><path d="M1833.5 1297V1552M1853.5 1297V1552M1873.5 1297V1552M1893.5 1297V1552M1913.5 1297V1552M1934.5 1297V1552M1954.5 1297V1552M1974.5 1297V1552M1994.5 1297V1552M2014.5 1297V1552M2034.5 1297V1552M2054.5 1297V1552M2074.5 1297V1552M2094.5 1297V1552M2114.5 1297V1552M2134.5 1297V1552M2154.5 1297V1552M2174.5 1297V1552M2194.5 1297V1552M2214.5 1297V1552M2234.5 1297V1552M2254.5 1297V1552M2274.5 1297V1552M2294.5 1297V1552M2314.5 1297V1552M2334.5 1297V1552M2354.5 1297V1552M2374.5 1297V1552M2394.5 1297V1552M2414.5 1297V1552M2434.5 1297V1552M2454.5 1297V1552M2474.5 1297V1552M2494.5 1297V1552M2514.5 1297V1552M2534.5 1297V1552M2554.5 1297V1552M2574.5 1297V1552M2594.5 1297V1552M2614.5 1297V1552M2634.5 1297V1552M2654.5 1297V1552M2674.5 1297V1552M2694.5 1297V1552M2714.5 1297V1552M2734.5 1297V1552M2754.5 1297V1552M2774.5 1297V1552M2794.5 1297V1552M2814.5 1297V1552M2834.5 1297V1552M2854.5 1297V1552M2874.5 1297V1552M2894.5 1297V1552M2914.5 1297V1552M2934.5 1297V1552M2954.5 1297V1552M2974.5 1297V1552M2994.5 1297V1552M3014.5 1297V1552M3034.5 1297V1552M3054.5 1297V1552M3074.5 1297V1552M3094.5 1297V1552M3114.5 1297V1552M3134.5 1297V1552M3154.5 1297V1552M3174.5 1297V1552M3194.5 1297V1552M3214.5 1297V1552M3234.5 1297V1552M3254.5 1297V1552M3274.5 1297V1552M3294.5 1297V1552M3314.5 1297V1552M3334.5 1297V1552M3354.5 1297V1552M3374.5 1297V1552M3394.5 1297V1552M3414.5 1297V1552M3434.5 1297V1552M3454.5 1297V1552M3474.5 1297V1552M3494.5 1297V1552M3514.5 1297V1552M3534.5 1297V1552M3554.5 1297V1552M3574.5 1297V1552M3594.5 1297V1552M3614.5 1297V1552M3634.5 1297V1552M3654.5 1297V1552M3674.5 1297V1552M3694.5 1297V1552M1813 1531.5H3706M1813 1511.5H3706M1813 1491.5H3706M1813 1471.5H3706M1813 1451.5H3706M1813 1431.5H3706M1813 1411.5H3706M1813 1391.5H3706M1813 1371.5H3706M1813 1351.5H3706M1813 1331.5H3706M1813 1311.5H3706" stroke="#a9c3ea" stroke-width="1" fill="none"/><rect x="1814" y="1297" width="26" height="255" fill="url(#gsh)"/><path d="M1914 1535.8H1919.97V1375.2H1922.95V1372.7H1928.92V1366.7H1931.9V1370.1H1934.88V1368.4H1940.85V1367.5H1943.83V1370.1H1946.82V1367.5H1949.8V1375.2H1952.78V1367.5H1955.77V1370.1H1958.75V1365H1964.72V1377.8H1967.7V1366.7H1970.68V1377.8H1973.67V1362.5H1976.65V1377.8H1979.63V1368.4H1982.62V1375.2H1988.58V1366.7H1991.57V1362.5H1994.55V1366.7H1997.53V1365H2003.5V1466.6H2006.48V1409.2H2009.47V1393.9H2030.35V1467H2033.33V1407.5H2036.32V1393.9H2057.2V1472.1H2060.18V1407.5H2063.17V1393.9H2084.05V1467.8H2087.03V1407.5H2090.01V1393.9H2110.9V1484.4H2113.88V1457.2H2116.86V1393.9H2134.76V1409.2H2137.75V1482.3H2140.73V1455.1H2143.71V1393.9H2161.61V1414.3H2164.6V1491.2H2167.58V1464H2170.56V1393.9H2188.46V1409.2H2191.45V1494.2H2194.43V1467H2197.41V1393.9H2215.31V1409.2H2218.3V1498H2221.28V1470.8H2224.26V1393.9H2242.16V1404.1H2245.15V1498.9H2248.13V1471.7H2251.11V1393.9H2269.01V1404.1H2272V1492.9H2274.98V1465.7H2277.96V1393.9H2295.86V1399H2298.85V1495H2301.83V1467.8H2304.81V1393.9H2322.71V1409.2H2325.7V1498H2328.68V1470.8H2331.66V1393.9H2349.56V1399H2352.55V1486.1H2355.53V1458.9H2358.51V1393.9H2376.41V1399H2379.39V1489.1H2382.38V1461.9H2385.36V1393.9H2403.26V1399H2406.24V1473H2409.23V1445.8H2412.21V1393.9H2430.11V1404.1H2433.09V1475.1H2436.08V1447.9H2439.06V1393.9H2456.96V1404.1H2459.94V1466.6H2462.93V1439.4H2465.91V1393.9H2483.81V1404.1H2486.79V1466.6H2489.78V1439.4H2492.76V1393.9H2510.66V1404.1H2513.64V1466.3H2516.63V1439.1H2519.61V1393.9H2537.51V1399H2540.49V1466.3H2543.48V1439.1H2546.46V1393.9H2564.36V1414.3H2567.34V1466.3H2570.33V1439.1H2573.31V1393.9H2591.21V1409.2H2594.19V1466.3H2597.18V1439.1H2600.16V1393.9H2618.06V1414.3H2621.04V1466.3H2624.03V1439.1H2627.01V1393.9H2644.91V1404.1H2647.89V1466.3H2650.88V1439.1H2653.86V1393.9H2671.76V1414.3H2674.74V1466.3H2677.72V1439.1H2680.71V1393.9H2698.61V1404.1H2701.59V1466.3H2704.57V1439.1H2707.56V1393.9H2725.46V1414.3H2728.44V1466.3H2731.42V1439.1H2734.41V1393.9H2752.31V1414.3H2755.29V1470.1H2758.27V1442.9H2761.26V1393.9H2779.16V1409.2H2782.14V1468.6H2785.12V1441.4H2788.11V1393.9H2806.01V1414.3H2808.99V1468.6H2811.97V1441.4H2814.96V1393.9H2832.86V1414.3H2835.84V1480.9H2838.82V1453.7H2841.81V1393.9H2859.71V1404.1H2862.69V1482.4H2865.67V1455.2H2868.66V1393.9H2886.56V1409.2H2889.54V1482.4H2892.52V1455.2H2895.51V1393.9H2913.41V1414.3H2916.39V1494.7H2919.37V1467.5H2922.36V1393.9H2940.26V1409.2H2943.24V1496.2H2946.22V1469H2949.21V1393.9H2967.1V1414.3H2970.09V1494.7H2973.07V1467.5H2976.05V1393.9H2993.95V1404.1H2996.94V1496.2H2999.92V1469H3002.9V1393.9H3020.8V1414.3H3023.79V1492.3H3026.77V1465.1H3029.75V1393.9H3047.65V1414.3H3050.64V1489H3053.62V1461.8H3056.6V1393.9H3074.5V1409.2H3077.49V1492.3H3080.47V1465.1H3083.45V1393.9H3101.35V1414.3H3104.34V1482.4H3107.32V1455.2H3110.3V1393.9H3128.2V1414.3H3131.19V1482.4H3134.17V1455.2H3137.15V1393.9H3155.05V1409.2H3158.04V1470.1H3161.02V1442.9H3164V1393.9H3181.9V1399H3184.89V1470.1H3187.87V1442.9H3190.85V1393.9H3208.75V1409.2H3211.74V1468.6H3214.72V1441.4H3217.7V1393.9H3235.6V1404.1H3238.59V1467.3H3241.57V1440.1H3244.55V1393.9H3262.45V1414.3H3265.43V1468.6H3268.42V1441.4H3271.4V1393.9H3289.3V1414.3H3292.28V1467.3H3295.27V1440.1H3298.25V1393.9H3316.15V1409.2H3319.13V1466.3H3322.12V1439.1H3325.1V1393.9H3343V1414.3H3345.98V1467.3H3348.97V1440.1H3351.95V1393.9H3369.85V1414.3H3372.83V1467.3H3375.82V1440.1H3378.8V1393.9H3396.7V1399H3399.68V1467.3H3402.67V1440.1H3405.65V1393.9H3423.55V1414.3H3426.53V1466.3H3429.52V1439.1H3432.5V1393.9H3450.4V1404.1H3453.38V1466.3H3456.37V1439.1H3459.35V1393.9H3477.25V1404.1H3480.23V1480H3483.22V1452.8H3486.2V1393.9H3504.1V1409.2H3507.08V1468.6H3510.07V1441.4H3513.05V1393.9H3530.95V1399H3533.93V1473.9H3536.92V1446.7H3539.9V1393.9H3557.8V1414.3H3560.78V1485.2H3563.76V1458H3566.75V1393.9H3584.65V1414.3H3587.63V1487.6H3590.61V1460.4H3593.6V1393.9H3611.5V1409.2H3614.48V1485.2H3617.46V1458H3620.45V1393.9H3638.35V1414.3H3641.33V1496.2H3644.31V1469H3647.3V1393.9H3665.2V1399H3668.18V1493.8H3671.16V1466.6H3674.15V1393.9H3692.05V1409.2H3695.03V1492.3H3698.01V1465.1H3701V1393.9H3706" stroke="#00dd00" stroke-width="1.3" fill="none"/></svg>
<svg class="gsv" style="top:1610px;height:239px" viewBox="1814 1611 1891 239"><path d="M1914 1850V1735H1919.97V1709.1H1922.95V1701.9H1925.93V1700H1928.92V1695H1931.9V1693H1934.88V1689.9H1937.87V1689.2H1940.85V1688.5H1943.83V1688H1946.82V1687H1949.8V1686.1H1952.78V1684.9H1955.77V1683.9H1958.75V1683H1961.73V1682H1964.72V1681H1967.7V1680.1H1970.68V1679.1H1973.67V1677.9H1976.65V1676H1979.63V1673.1H1982.62V1671.9H1985.6V1671H1988.58V1670H1991.57V1669.5H1994.55V1669H1997.53V1668.8H2000.52V1664H2003.5V1689H2009.47V1683.9H2012.45V1683H2015.43V1683.9H2018.42V1684.4H2027.37V1701.7H2030.35V1699.3H2033.33V1693H2036.32V1691.1H2039.3V1689.7H2042.28V1689H2045.27V1688.2H2048.25V1689H2051.23V1689.9H2054.22V1704.1H2057.2V1701.2H2060.18V1693H2063.17V1691.1H2066.15V1689.7H2069.13V1687.5H2072.11V1686.8H2075.1V1687.5H2078.08V1688.5H2081.06V1703.1H2084.05V1699.3H2087.03V1693H2090.01V1691.1H2093V1689.7H2095.98V1688.5H2098.96V1687.8H2101.95V1688.5H2104.93V1689.4H2107.91V1703.1H2110.9V1701.2H2113.88V1693H2116.86V1691.1H2119.85V1689.7H2122.83V1688.5H2125.81V1687.8H2128.8V1688.5H2131.78V1689.4H2134.76V1704.1H2137.75V1699.3H2140.73V1693H2143.71V1691.1H2146.7V1689.7H2149.68V1689H2152.66V1688.2H2155.65V1689H2158.63V1689.9H2161.61V1704.1H2164.6V1701.2H2167.58V1693H2170.56V1691.1H2173.55V1689.7H2176.53V1689H2179.51V1688.2H2182.5V1689H2185.48V1689.9H2188.46V1704.1H2191.45V1701.2H2194.43V1693H2197.41V1691.1H2200.4V1689.7H2203.38V1688H2206.36V1687.3H2209.35V1688H2212.33V1689H2215.31V1701.7H2218.3V1701.2H2221.28V1693H2224.26V1691.1H2227.25V1689.7H2230.23V1688H2233.21V1687.3H2236.2V1688H2239.18V1689H2242.16V1701.7H2245.15V1701.2H2248.13V1693H2251.11V1691.1H2254.1V1689.7H2257.08V1689H2260.06V1688.2H2263.05V1689H2266.03V1689.9H2269.01V1704.1H2272V1701.2H2274.98V1693H2277.96V1691.1H2280.95V1689.7H2283.93V1687.5H2286.91V1686.8H2289.9V1687.5H2292.88V1688.5H2295.86V1704.1H2298.85V1699.3H2301.83V1693H2304.81V1691.1H2307.8V1689.7H2310.78V1689H2313.76V1688.2H2316.75V1689H2319.73V1689.9H2322.71V1703.1H2325.7V1699.3H2328.68V1693H2331.66V1691.1H2334.65V1689.7H2337.63V1688H2340.61V1687.3H2343.6V1688H2346.58V1689H2349.56V1704.1H2352.55V1701.2H2355.53V1693H2358.51V1691.1H2361.49V1689.7H2364.48V1687.5H2367.46V1686.8H2370.44V1687.5H2373.43V1688.5H2376.41V1703.1H2379.39V1701.2H2382.38V1693H2385.36V1691.1H2388.34V1689.7H2391.33V1688.5H2394.31V1687.8H2397.29V1688.5H2400.28V1689.4H2403.26V1703.1H2406.24V1701.2H2409.23V1693H2412.21V1691.1H2415.19V1689.7H2418.18V1689H2421.16V1688.2H2424.14V1689H2427.13V1689.9H2430.11V1704.1H2433.09V1699.3H2436.08V1693H2439.06V1691.1H2442.04V1689.7H2445.03V1688.5H2448.01V1687.8H2450.99V1688.5H2453.98V1689.4H2456.96V1701.7H2459.94V1701.2H2462.93V1693H2465.91V1691.1H2468.89V1689.7H2471.88V1688.5H2474.86V1687.8H2477.84V1688.5H2480.83V1689.4H2483.81V1701.7H2486.79V1701.2H2489.78V1693H2492.76V1691.1H2495.74V1689.7H2498.73V1688.5H2501.71V1687.8H2504.69V1688.5H2507.68V1689.4H2510.66V1703.1H2513.64V1701.2H2516.63V1693H2519.61V1691.1H2522.59V1689.7H2525.58V1688H2528.56V1687.3H2531.54V1688H2534.53V1689H2537.51V1704.1H2540.49V1701.2H2543.48V1693H2546.46V1691.1H2549.44V1689.7H2552.43V1688.5H2555.41V1687.8H2558.39V1688.5H2561.38V1689.4H2564.36V1701.7H2567.34V1699.3H2570.33V1693H2573.31V1691.1H2576.29V1689.7H2579.28V1688.5H2582.26V1687.8H2585.24V1688.5H2588.23V1689.4H2591.21V1703.1H2594.19V1701.2H2597.18V1693H2600.16V1691.1H2603.14V1689.7H2606.13V1688H2609.11V1687.3H2612.09V1688H2615.08V1689H2618.06V1704.1H2621.04V1701.2H2624.03V1693H2627.01V1691.1H2629.99V1689.7H2632.98V1689H2635.96V1688.2H2638.94V1689H2641.93V1689.9H2644.91V1704.1H2647.89V1701.2H2650.88V1693H2653.86V1691.1H2656.84V1689.7H2659.82V1688H2662.81V1687.3H2665.79V1688H2668.77V1689H2671.76V1703.1H2674.74V1701.2H2677.72V1693H2680.71V1691.1H2683.69V1689.7H2686.67V1688.5H2689.66V1687.8H2692.64V1688.5H2695.62V1689.4H2698.61V1701.7H2701.59V1701.2H2704.57V1693H2707.56V1691.1H2710.54V1689.7H2713.52V1687.5H2716.51V1686.8H2719.49V1687.5H2722.47V1688.5H2725.46V1701.7H2728.44V1699.3H2731.42V1693H2734.41V1691.1H2737.39V1689.7H2740.37V1688.5H2743.36V1687.8H2746.34V1688.5H2749.32V1689.4H2752.31V1704.1H2755.29V1701.2H2758.27V1693H2761.26V1691.1H2764.24V1689.7H2767.22V1688H2770.21V1687.3H2773.19V1688H2776.17V1689H2779.16V1701.7H2782.14V1701.2H2785.12V1693H2788.11V1691.1H2791.09V1689.7H2794.07V1687.5H2797.06V1686.8H2800.04V1687.5H2803.02V1688.5H2806.01V1704.1H2808.99V1699.3H2811.97V1693H2814.96V1691.1H2817.94V1689.7H2820.92V1687.5H2823.91V1686.8H2826.89V1687.5H2829.87V1688.5H2832.86V1704.1H2835.84V1699.3H2838.82V1693H2841.81V1691.1H2844.79V1689.7H2847.77V1689H2850.76V1688.2H2853.74V1689H2856.72V1689.9H2859.71V1701.7H2862.69V1701.2H2865.67V1693H2868.66V1691.1H2871.64V1689.7H2874.62V1688H2877.61V1687.3H2880.59V1688H2883.57V1689H2886.56V1701.7H2889.54V1699.3H2892.52V1693H2895.51V1691.1H2898.49V1689.7H2901.47V1689H2904.46V1688.2H2907.44V1689H2910.42V1689.9H2913.41V1703.1H2916.39V1701.2H2919.37V1693H2922.36V1691.1H2925.34V1689.7H2928.32V1688.5H2931.31V1687.8H2934.29V1688.5H2937.27V1689.4H2940.26V1704.1H2943.24V1699.3H2946.22V1693H2949.21V1691.1H2952.19V1689.7H2955.17V1688H2958.15V1687.3H2961.14V1688H2964.12V1689H2967.1V1703.1H2970.09V1701.2H2973.07V1693H2976.05V1691.1H2979.04V1689.7H2982.02V1687.5H2985V1686.8H2987.99V1687.5H2990.97V1688.5H2993.95V1701.7H2996.94V1699.3H2999.92V1693H3002.9V1691.1H3005.89V1689.7H3008.87V1687.5H3011.85V1686.8H3014.84V1687.5H3017.82V1688.5H3020.8V1701.7H3023.79V1701.2H3026.77V1693H3029.75V1691.1H3032.74V1689.7H3035.72V1688.5H3038.7V1687.8H3041.69V1688.5H3044.67V1689.4H3047.65V1703.1H3050.64V1699.3H3053.62V1693H3056.6V1691.1H3059.59V1689.7H3062.57V1688.5H3065.55V1687.8H3068.54V1688.5H3071.52V1689.4H3074.5V1703.1H3077.49V1701.2H3080.47V1693H3083.45V1691.1H3086.44V1689.7H3089.42V1689H3092.4V1688.2H3095.39V1689H3098.37V1689.9H3101.35V1703.1H3104.34V1701.2H3107.32V1693H3110.3V1691.1H3113.29V1689.7H3116.27V1688.5H3119.25V1687.8H3122.24V1688.5H3125.22V1689.4H3128.2V1703.1H3131.19V1699.3H3134.17V1693H3137.15V1691.1H3140.14V1689.7H3143.12V1688.5H3146.1V1687.8H3149.09V1688.5H3152.07V1689.4H3155.05V1704.1H3158.04V1699.3H3161.02V1693H3164V1691.1H3166.99V1689.7H3169.97V1687.5H3172.95V1686.8H3175.94V1687.5H3178.92V1688.5H3181.9V1701.7H3184.89V1699.3H3187.87V1693H3190.85V1691.1H3193.84V1689.7H3196.82V1688H3199.8V1687.3H3202.79V1688H3205.77V1689H3208.75V1704.1H3211.74V1701.2H3214.72V1693H3217.7V1691.1H3220.69V1689.7H3223.67V1688.5H3226.65V1687.8H3229.64V1688.5H3232.62V1689.4H3235.6V1704.1H3238.59V1701.2H3241.57V1693H3244.55V1691.1H3247.54V1689.7H3250.52V1687.5H3253.5V1686.8H3256.48V1687.5H3259.47V1688.5H3262.45V1704.1H3265.43V1701.2H3268.42V1693H3271.4V1691.1H3274.38V1689.7H3277.37V1688H3280.35V1687.3H3283.33V1688H3286.32V1689H3289.3V1703.1H3292.28V1701.2H3295.27V1693H3298.25V1691.1H3301.23V1689.7H3304.22V1688.5H3307.2V1687.8H3310.18V1688.5H3313.17V1689.4H3316.15V1703.1H3319.13V1701.2H3322.12V1693H3325.1V1691.1H3328.08V1689.7H3331.07V1689H3334.05V1688.2H3337.03V1689H3340.02V1689.9H3343V1703.1H3345.98V1701.2H3348.97V1693H3351.95V1691.1H3354.93V1689.7H3357.92V1687.5H3360.9V1686.8H3363.88V1687.5H3366.87V1688.5H3369.85V1701.7H3372.83V1699.3H3375.82V1693H3378.8V1691.1H3381.78V1689.7H3384.77V1689H3387.75V1688.2H3390.73V1689H3393.72V1689.9H3396.7V1704.1H3399.68V1699.3H3402.67V1693H3405.65V1691.1H3408.63V1689.7H3411.62V1688H3414.6V1687.3H3417.58V1688H3420.57V1689H3423.55V1704.1H3426.53V1699.3H3429.52V1693H3432.5V1691.1H3435.48V1689.7H3438.47V1688.5H3441.45V1687.8H3444.43V1688.5H3447.42V1689.4H3450.4V1704.1H3453.38V1699.3H3456.37V1693H3459.35V1691.1H3462.33V1689.7H3465.32V1689H3468.3V1688.2H3471.28V1689H3474.27V1689.9H3477.25V1701.7H3480.23V1699.3H3483.22V1693H3486.2V1691.1H3489.18V1689.7H3492.17V1688H3495.15V1687.3H3498.13V1688H3501.12V1689H3504.1V1703.1H3507.08V1701.2H3510.07V1693H3513.05V1691.1H3516.03V1689.7H3519.02V1689H3522V1688.2H3524.98V1689H3527.97V1689.9H3530.95V1703.1H3533.93V1701.2H3536.92V1693H3539.9V1691.1H3542.88V1689.7H3545.87V1688.5H3548.85V1687.8H3551.83V1688.5H3554.81V1689.4H3557.8V1701.7H3560.78V1701.2H3563.76V1693H3566.75V1691.1H3569.73V1689.7H3572.71V1688H3575.7V1687.3H3578.68V1688H3581.66V1689H3584.65V1704.1H3587.63V1701.2H3590.61V1693H3593.6V1691.1H3596.58V1689.7H3599.56V1688H3602.55V1687.3H3605.53V1688H3608.51V1689H3611.5V1704.1H3614.48V1699.3H3617.46V1693H3620.45V1691.1H3623.43V1689.7H3626.41V1688H3629.4V1687.3H3632.38V1688H3635.36V1689H3638.35V1701.7H3641.33V1699.3H3644.31V1693H3647.3V1691.1H3650.28V1689.7H3653.26V1689H3656.25V1688.2H3659.23V1689H3662.21V1689.9H3665.2V1704.1H3668.18V1699.3H3671.16V1693H3674.15V1691.1H3677.13V1689.7H3680.11V1688.5H3683.1V1687.8H3686.08V1688.5H3689.06V1689.4H3692.05V1701.7H3695.03V1701.2H3698.01V1693H3701V1691.1H3703.98V1689.7H3706V1850Z" fill="#ff99b3"/><path d="M1833.5 1610V1850M1853.5 1610V1850M1873.5 1610V1850M1893.5 1610V1850M1913.5 1610V1850M1934.5 1610V1850M1954.5 1610V1850M1974.5 1610V1850M1994.5 1610V1850M2014.5 1610V1850M2034.5 1610V1850M2054.5 1610V1850M2074.5 1610V1850M2094.5 1610V1850M2114.5 1610V1850M2134.5 1610V1850M2154.5 1610V1850M2174.5 1610V1850M2194.5 1610V1850M2214.5 1610V1850M2234.5 1610V1850M2254.5 1610V1850M2274.5 1610V1850M2294.5 1610V1850M2314.5 1610V1850M2334.5 1610V1850M2354.5 1610V1850M2374.5 1610V1850M2394.5 1610V1850M2414.5 1610V1850M2434.5 1610V1850M2454.5 1610V1850M2474.5 1610V1850M2494.5 1610V1850M2514.5 1610V1850M2534.5 1610V1850M2554.5 1610V1850M2574.5 1610V1850M2594.5 1610V1850M2614.5 1610V1850M2634.5 1610V1850M2654.5 1610V1850M2674.5 1610V1850M2694.5 1610V1850M2714.5 1610V1850M2734.5 1610V1850M2754.5 1610V1850M2774.5 1610V1850M2794.5 1610V1850M2814.5 1610V1850M2834.5 1610V1850M2854.5 1610V1850M2874.5 1610V1850M2894.5 1610V1850M2914.5 1610V1850M2934.5 1610V1850M2954.5 1610V1850M2974.5 1610V1850M2994.5 1610V1850M3014.5 1610V1850M3034.5 1610V1850M3054.5 1610V1850M3074.5 1610V1850M3094.5 1610V1850M3114.5 1610V1850M3134.5 1610V1850M3154.5 1610V1850M3174.5 1610V1850M3194.5 1610V1850M3214.5 1610V1850M3234.5 1610V1850M3254.5 1610V1850M3274.5 1610V1850M3294.5 1610V1850M3314.5 1610V1850M3334.5 1610V1850M3354.5 1610V1850M3374.5 1610V1850M3394.5 1610V1850M3414.5 1610V1850M3434.5 1610V1850M3454.5 1610V1850M3474.5 1610V1850M3494.5 1610V1850M3514.5 1610V1850M3534.5 1610V1850M3554.5 1610V1850M3574.5 1610V1850M3594.5 1610V1850M3614.5 1610V1850M3634.5 1610V1850M3654.5 1610V1850M3674.5 1610V1850M3694.5 1610V1850M1813 1829.5H3706M1813 1809.5H3706M1813 1789.5H3706M1813 1769.5H3706M1813 1749.5H3706M1813 1729.5H3706M1813 1709.5H3706M1813 1689.5H3706M1813 1669.5H3706M1813 1649.5H3706M1813 1629.5H3706" stroke="#a9c3ea" stroke-width="1" fill="none"/><rect x="1814" y="1610" width="26" height="240" fill="url(#gsh)"/><rect x="1814" y="1610" width="1893" height="46" fill="url(#gsv2)"/><path d="M1914 1735H1919.97V1709.1H1922.95V1701.9H1925.93V1700H1928.92V1695H1931.9V1693H1934.88V1689.9H1937.87V1689.2H1940.85V1688.5H1943.83V1688H1946.82V1687H1949.8V1686.1H1952.78V1684.9H1955.77V1683.9H1958.75V1683H1961.73V1682H1964.72V1681H1967.7V1680.1H1970.68V1679.1H1973.67V1677.9H1976.65V1676H1979.63V1673.1H1982.62V1671.9H1985.6V1671H1988.58V1670H1991.57V1669.5H1994.55V1669H1997.53V1668.8H2000.52V1664H2003.5V1689H2009.47V1683.9H2012.45V1683H2015.43V1683.9H2018.42V1684.4H2027.37V1701.7H2030.35V1699.3H2033.33V1693H2036.32V1691.1H2039.3V1689.7H2042.28V1689H2045.27V1688.2H2048.25V1689H2051.23V1689.9H2054.22V1704.1H2057.2V1701.2H2060.18V1693H2063.17V1691.1H2066.15V1689.7H2069.13V1687.5H2072.11V1686.8H2075.1V1687.5H2078.08V1688.5H2081.06V1703.1H2084.05V1699.3H2087.03V1693H2090.01V1691.1H2093V1689.7H2095.98V1688.5H2098.96V1687.8H2101.95V1688.5H2104.93V1689.4H2107.91V1703.1H2110.9V1701.2H2113.88V1693H2116.86V1691.1H2119.85V1689.7H2122.83V1688.5H2125.81V1687.8H2128.8V1688.5H2131.78V1689.4H2134.76V1704.1H2137.75V1699.3H2140.73V1693H2143.71V1691.1H2146.7V1689.7H2149.68V1689H2152.66V1688.2H2155.65V1689H2158.63V1689.9H2161.61V1704.1H2164.6V1701.2H2167.58V1693H2170.56V1691.1H2173.55V1689.7H2176.53V1689H2179.51V1688.2H2182.5V1689H2185.48V1689.9H2188.46V1704.1H2191.45V1701.2H2194.43V1693H2197.41V1691.1H2200.4V1689.7H2203.38V1688H2206.36V1687.3H2209.35V1688H2212.33V1689H2215.31V1701.7H2218.3V1701.2H2221.28V1693H2224.26V1691.1H2227.25V1689.7H2230.23V1688H2233.21V1687.3H2236.2V1688H2239.18V1689H2242.16V1701.7H2245.15V1701.2H2248.13V1693H2251.11V1691.1H2254.1V1689.7H2257.08V1689H2260.06V1688.2H2263.05V1689H2266.03V1689.9H2269.01V1704.1H2272V1701.2H2274.98V1693H2277.96V1691.1H2280.95V1689.7H2283.93V1687.5H2286.91V1686.8H2289.9V1687.5H2292.88V1688.5H2295.86V1704.1H2298.85V1699.3H2301.83V1693H2304.81V1691.1H2307.8V1689.7H2310.78V1689H2313.76V1688.2H2316.75V1689H2319.73V1689.9H2322.71V1703.1H2325.7V1699.3H2328.68V1693H2331.66V1691.1H2334.65V1689.7H2337.63V1688H2340.61V1687.3H2343.6V1688H2346.58V1689H2349.56V1704.1H2352.55V1701.2H2355.53V1693H2358.51V1691.1H2361.49V1689.7H2364.48V1687.5H2367.46V1686.8H2370.44V1687.5H2373.43V1688.5H2376.41V1703.1H2379.39V1701.2H2382.38V1693H2385.36V1691.1H2388.34V1689.7H2391.33V1688.5H2394.31V1687.8H2397.29V1688.5H2400.28V1689.4H2403.26V1703.1H2406.24V1701.2H2409.23V1693H2412.21V1691.1H2415.19V1689.7H2418.18V1689H2421.16V1688.2H2424.14V1689H2427.13V1689.9H2430.11V1704.1H2433.09V1699.3H2436.08V1693H2439.06V1691.1H2442.04V1689.7H2445.03V1688.5H2448.01V1687.8H2450.99V1688.5H2453.98V1689.4H2456.96V1701.7H2459.94V1701.2H2462.93V1693H2465.91V1691.1H2468.89V1689.7H2471.88V1688.5H2474.86V1687.8H2477.84V1688.5H2480.83V1689.4H2483.81V1701.7H2486.79V1701.2H2489.78V1693H2492.76V1691.1H2495.74V1689.7H2498.73V1688.5H2501.71V1687.8H2504.69V1688.5H2507.68V1689.4H2510.66V1703.1H2513.64V1701.2H2516.63V1693H2519.61V1691.1H2522.59V1689.7H2525.58V1688H2528.56V1687.3H2531.54V1688H2534.53V1689H2537.51V1704.1H2540.49V1701.2H2543.48V1693H2546.46V1691.1H2549.44V1689.7H2552.43V1688.5H2555.41V1687.8H2558.39V1688.5H2561.38V1689.4H2564.36V1701.7H2567.34V1699.3H2570.33V1693H2573.31V1691.1H2576.29V1689.7H2579.28V1688.5H2582.26V1687.8H2585.24V1688.5H2588.23V1689.4H2591.21V1703.1H2594.19V1701.2H2597.18V1693H2600.16V1691.1H2603.14V1689.7H2606.13V1688H2609.11V1687.3H2612.09V1688H2615.08V1689H2618.06V1704.1H2621.04V1701.2H2624.03V1693H2627.01V1691.1H2629.99V1689.7H2632.98V1689H2635.96V1688.2H2638.94V1689H2641.93V1689.9H2644.91V1704.1H2647.89V1701.2H2650.88V1693H2653.86V1691.1H2656.84V1689.7H2659.82V1688H2662.81V1687.3H2665.79V1688H2668.77V1689H2671.76V1703.1H2674.74V1701.2H2677.72V1693H2680.71V1691.1H2683.69V1689.7H2686.67V1688.5H2689.66V1687.8H2692.64V1688.5H2695.62V1689.4H2698.61V1701.7H2701.59V1701.2H2704.57V1693H2707.56V1691.1H2710.54V1689.7H2713.52V1687.5H2716.51V1686.8H2719.49V1687.5H2722.47V1688.5H2725.46V1701.7H2728.44V1699.3H2731.42V1693H2734.41V1691.1H2737.39V1689.7H2740.37V1688.5H2743.36V1687.8H2746.34V1688.5H2749.32V1689.4H2752.31V1704.1H2755.29V1701.2H2758.27V1693H2761.26V1691.1H2764.24V1689.7H2767.22V1688H2770.21V1687.3H2773.19V1688H2776.17V1689H2779.16V1701.7H2782.14V1701.2H2785.12V1693H2788.11V1691.1H2791.09V1689.7H2794.07V1687.5H2797.06V1686.8H2800.04V1687.5H2803.02V1688.5H2806.01V1704.1H2808.99V1699.3H2811.97V1693H2814.96V1691.1H2817.94V1689.7H2820.92V1687.5H2823.91V1686.8H2826.89V1687.5H2829.87V1688.5H2832.86V1704.1H2835.84V1699.3H2838.82V1693H2841.81V1691.1H2844.79V1689.7H2847.77V1689H2850.76V1688.2H2853.74V1689H2856.72V1689.9H2859.71V1701.7H2862.69V1701.2H2865.67V1693H2868.66V1691.1H2871.64V1689.7H2874.62V1688H2877.61V1687.3H2880.59V1688H2883.57V1689H2886.56V1701.7H2889.54V1699.3H2892.52V1693H2895.51V1691.1H2898.49V1689.7H2901.47V1689H2904.46V1688.2H2907.44V1689H2910.42V1689.9H2913.41V1703.1H2916.39V1701.2H2919.37V1693H2922.36V1691.1H2925.34V1689.7H2928.32V1688.5H2931.31V1687.8H2934.29V1688.5H2937.27V1689.4H2940.26V1704.1H2943.24V1699.3H2946.22V1693H2949.21V1691.1H2952.19V1689.7H2955.17V1688H2958.15V1687.3H2961.14V1688H2964.12V1689H2967.1V1703.1H2970.09V1701.2H2973.07V1693H2976.05V1691.1H2979.04V1689.7H2982.02V1687.5H2985V1686.8H2987.99V1687.5H2990.97V1688.5H2993.95V1701.7H2996.94V1699.3H2999.92V1693H3002.9V1691.1H3005.89V1689.7H3008.87V1687.5H3011.85V1686.8H3014.84V1687.5H3017.82V1688.5H3020.8V1701.7H3023.79V1701.2H3026.77V1693H3029.75V1691.1H3032.74V1689.7H3035.72V1688.5H3038.7V1687.8H3041.69V1688.5H3044.67V1689.4H3047.65V1703.1H3050.64V1699.3H3053.62V1693H3056.6V1691.1H3059.59V1689.7H3062.57V1688.5H3065.55V1687.8H3068.54V1688.5H3071.52V1689.4H3074.5V1703.1H3077.49V1701.2H3080.47V1693H3083.45V1691.1H3086.44V1689.7H3089.42V1689H3092.4V1688.2H3095.39V1689H3098.37V1689.9H3101.35V1703.1H3104.34V1701.2H3107.32V1693H3110.3V1691.1H3113.29V1689.7H3116.27V1688.5H3119.25V1687.8H3122.24V1688.5H3125.22V1689.4H3128.2V1703.1H3131.19V1699.3H3134.17V1693H3137.15V1691.1H3140.14V1689.7H3143.12V1688.5H3146.1V1687.8H3149.09V1688.5H3152.07V1689.4H3155.05V1704.1H3158.04V1699.3H3161.02V1693H3164V1691.1H3166.99V1689.7H3169.97V1687.5H3172.95V1686.8H3175.94V1687.5H3178.92V1688.5H3181.9V1701.7H3184.89V1699.3H3187.87V1693H3190.85V1691.1H3193.84V1689.7H3196.82V1688H3199.8V1687.3H3202.79V1688H3205.77V1689H3208.75V1704.1H3211.74V1701.2H3214.72V1693H3217.7V1691.1H3220.69V1689.7H3223.67V1688.5H3226.65V1687.8H3229.64V1688.5H3232.62V1689.4H3235.6V1704.1H3238.59V1701.2H3241.57V1693H3244.55V1691.1H3247.54V1689.7H3250.52V1687.5H3253.5V1686.8H3256.48V1687.5H3259.47V1688.5H3262.45V1704.1H3265.43V1701.2H3268.42V1693H3271.4V1691.1H3274.38V1689.7H3277.37V1688H3280.35V1687.3H3283.33V1688H3286.32V1689H3289.3V1703.1H3292.28V1701.2H3295.27V1693H3298.25V1691.1H3301.23V1689.7H3304.22V1688.5H3307.2V1687.8H3310.18V1688.5H3313.17V1689.4H3316.15V1703.1H3319.13V1701.2H3322.12V1693H3325.1V1691.1H3328.08V1689.7H3331.07V1689H3334.05V1688.2H3337.03V1689H3340.02V1689.9H3343V1703.1H3345.98V1701.2H3348.97V1693H3351.95V1691.1H3354.93V1689.7H3357.92V1687.5H3360.9V1686.8H3363.88V1687.5H3366.87V1688.5H3369.85V1701.7H3372.83V1699.3H3375.82V1693H3378.8V1691.1H3381.78V1689.7H3384.77V1689H3387.75V1688.2H3390.73V1689H3393.72V1689.9H3396.7V1704.1H3399.68V1699.3H3402.67V1693H3405.65V1691.1H3408.63V1689.7H3411.62V1688H3414.6V1687.3H3417.58V1688H3420.57V1689H3423.55V1704.1H3426.53V1699.3H3429.52V1693H3432.5V1691.1H3435.48V1689.7H3438.47V1688.5H3441.45V1687.8H3444.43V1688.5H3447.42V1689.4H3450.4V1704.1H3453.38V1699.3H3456.37V1693H3459.35V1691.1H3462.33V1689.7H3465.32V1689H3468.3V1688.2H3471.28V1689H3474.27V1689.9H3477.25V1701.7H3480.23V1699.3H3483.22V1693H3486.2V1691.1H3489.18V1689.7H3492.17V1688H3495.15V1687.3H3498.13V1688H3501.12V1689H3504.1V1703.1H3507.08V1701.2H3510.07V1693H3513.05V1691.1H3516.03V1689.7H3519.02V1689H3522V1688.2H3524.98V1689H3527.97V1689.9H3530.95V1703.1H3533.93V1701.2H3536.92V1693H3539.9V1691.1H3542.88V1689.7H3545.87V1688.5H3548.85V1687.8H3551.83V1688.5H3554.81V1689.4H3557.8V1701.7H3560.78V1701.2H3563.76V1693H3566.75V1691.1H3569.73V1689.7H3572.71V1688H3575.7V1687.3H3578.68V1688H3581.66V1689H3584.65V1704.1H3587.63V1701.2H3590.61V1693H3593.6V1691.1H3596.58V1689.7H3599.56V1688H3602.55V1687.3H3605.53V1688H3608.51V1689H3611.5V1704.1H3614.48V1699.3H3617.46V1693H3620.45V1691.1H3623.43V1689.7H3626.41V1688H3629.4V1687.3H3632.38V1688H3635.36V1689H3638.35V1701.7H3641.33V1699.3H3644.31V1693H3647.3V1691.1H3650.28V1689.7H3653.26V1689H3656.25V1688.2H3659.23V1689H3662.21V1689.9H3665.2V1704.1H3668.18V1699.3H3671.16V1693H3674.15V1691.1H3677.13V1689.7H3680.11V1688.5H3683.1V1687.8H3686.08V1688.5H3689.06V1689.4H3692.05V1701.7H3695.03V1701.2H3698.01V1693H3701V1691.1H3703.98V1689.7H3706" stroke="#ff0080" stroke-width="1.3" fill="none"/></svg>
<svg class="gsv" style="top:1908px;height:222px" viewBox="1814 1909 1891 222"><path d="M1914 2152V2152H1919.97V1965.1H1922.95V1968.3H1925.93V1969H1928.92V1969.7H1931.9V1969.8H1934.88V1969.3H1937.87V1969.4H1940.85V1969.5H1943.83V1969.6H1946.82V1970.4H1949.8V1968H1952.78V1969.4H1955.77V1970.1H1958.75V1970.2H1961.73V1968.5H1964.72V1968.6H1967.7V1969.9H1970.68V1970H1973.67V1970.7H1976.65V1970.8H1979.63V1970.3H1982.62V1971.1H1985.6V1971.2H1988.58V1970.7H1991.57V1970.8H1994.55V1971.5H1997.53V1971.6H2000.52V1971.1H2003.5V2087.5H2006.48V2055.2H2009.47V2041.2H2015.43V2033.3H2018.42V2037.6H2021.4V2038.8H2024.38V2037.6H2027.37V2108.5H2030.35V2083H2033.33V2041.6H2039.3V2040.6H2042.28V2034.3H2045.27V2038.8H2048.25V2040.6H2051.23V2035.1H2054.22V2111H2057.2V2081.8H2060.18V2041.6H2066.15V2040.6H2069.13V2034.3H2072.11V2038.8H2075.1V2040.6H2078.08V2035.1H2081.06V2111.7H2084.05V2082.5H2087.03V2041.6H2093V2040.6H2095.98V2034.3H2098.96V2038.8H2101.95V2040.6H2104.93V2035.1H2107.91V2114H2110.9V2088.4H2113.88V2041.6H2119.85V2040.6H2122.83V2034.3H2125.81V2038.8H2128.8V2040.6H2131.78V2035.1H2134.76V2116H2137.75V2094H2140.73V2041.6H2146.7V2040.6H2149.68V2034.3H2152.66V2038.8H2155.65V2040.6H2158.63V2064.3H2161.61V2115H2164.6V2085.8H2167.58V2041.6H2173.55V2040.6H2176.53V2034.3H2179.51V2038.8H2182.5V2040.6H2185.48V2069.2H2188.46V2117.1H2191.45V2087.8H2194.43V2041.6H2200.4V2040.6H2203.38V2034.3H2206.36V2038.8H2209.35V2040.6H2212.33V2065.6H2215.31V2116H2218.3V2094H2221.28V2041.6H2227.25V2040.6H2230.23V2034.3H2233.21V2038.8H2236.2V2040.6H2239.18V2065.6H2242.16V2116H2245.15V2090.4H2248.13V2041.6H2254.1V2040.6H2257.08V2034.3H2260.06V2038.8H2263.05V2040.6H2266.03V2064.3H2269.01V2115H2272V2093.1H2274.98V2041.6H2280.95V2040.6H2283.93V2034.3H2286.91V2038.8H2289.9V2040.6H2292.88V2064.3H2295.86V2114H2298.85V2092.1H2301.83V2041.6H2307.8V2040.6H2310.78V2034.3H2313.76V2038.8H2316.75V2040.6H2319.73V2064.3H2322.71V2115H2325.7V2085.8H2328.68V2041.6H2334.65V2040.6H2337.63V2034.3H2340.61V2038.8H2343.6V2040.6H2346.58V2064.3H2349.56V2115H2352.55V2085.8H2355.53V2041.6H2361.49V2040.6H2364.48V2034.3H2367.46V2038.8H2370.44V2040.6H2373.43V2065.6H2376.41V2110.4H2379.39V2084.8H2382.38V2041.6H2388.34V2040.6H2391.33V2034.3H2394.31V2038.8H2397.29V2040.6H2400.28V2069.2H2403.26V2111.7H2406.24V2082.5H2409.23V2041.6H2415.19V2040.6H2418.18V2034.3H2421.16V2038.8H2424.14V2040.6H2427.13V2064.3H2430.11V2110.4H2433.09V2084.8H2436.08V2041.6H2442.04V2040.6H2445.03V2034.3H2448.01V2038.8H2450.99V2040.6H2453.98V2069.2H2456.96V2108.5H2459.94V2086.6H2462.93V2041.6H2468.89V2040.6H2471.88V2034.3H2474.86V2038.8H2477.84V2040.6H2480.83V2065.6H2483.81V2106.3H2486.79V2080.8H2489.78V2041.6H2495.74V2040.6H2498.73V2034.3H2501.71V2038.8H2504.69V2040.6H2507.68V2064.3H2510.66V2103.7H2513.64V2081.7H2516.63V2041.6H2522.59V2040.6H2525.58V2034.3H2528.56V2038.8H2531.54V2040.6H2534.53V2066.8H2537.51V2103.7H2540.49V2081.7H2543.48V2041.6H2549.44V2040.6H2552.43V2034.3H2555.41V2038.8H2558.39V2040.6H2561.38V2069.2H2564.36V2101.3H2567.34V2072.1H2570.33V2041.6H2576.29V2040.6H2579.28V2034.3H2582.26V2038.8H2585.24V2040.6H2588.23V2064.3H2591.21V2102.2H2594.19V2073H2597.18V2041.6H2603.14V2040.6H2606.13V2034.3H2609.11V2038.8H2612.09V2040.6H2615.08V2069.2H2618.06V2101.3H2621.04V2072.1H2624.03V2041.6H2629.99V2040.6H2632.98V2034.3H2635.96V2038.8H2638.94V2040.6H2641.93V2064.3H2644.91V2104.6H2647.89V2082.7H2650.88V2041.6H2656.84V2040.6H2659.82V2034.3H2662.81V2038.8H2665.79V2040.6H2668.77V2065.6H2671.76V2107.5H2674.74V2085.5H2677.72V2041.6H2683.69V2040.6H2686.67V2034.3H2689.66V2038.8H2692.64V2040.6H2695.62V2069.2H2698.61V2108.4H2701.59V2086.5H2704.57V2041.6H2710.54V2040.6H2713.52V2034.3H2716.51V2038.8H2719.49V2040.6H2722.47V2069.2H2725.46V2108.4H2728.44V2082.8H2731.42V2041.6H2737.39V2040.6H2740.37V2034.3H2743.36V2038.8H2746.34V2040.6H2749.32V2065.6H2752.31V2111.2H2755.29V2085.7H2758.27V2041.6H2764.24V2040.6H2767.22V2034.3H2770.21V2038.8H2773.19V2040.6H2776.17V2069.2H2779.16V2113.6H2782.14V2084.4H2785.12V2041.6H2791.09V2040.6H2794.07V2034.3H2797.06V2038.8H2800.04V2040.6H2803.02V2064.3H2806.01V2113.6H2808.99V2084.4H2811.97V2041.6H2817.94V2040.6H2820.92V2034.3H2823.91V2038.8H2826.89V2040.6H2829.87V2065.6H2832.86V2114.6H2835.84V2089H2838.82V2041.6H2844.79V2040.6H2847.77V2034.3H2850.76V2038.8H2853.74V2040.6H2856.72V2066.8H2859.71V2116H2862.69V2094.1H2865.67V2041.6H2871.64V2040.6H2874.62V2034.3H2877.61V2038.8H2880.59V2040.6H2883.57V2065.6H2886.56V2116H2889.54V2090.4H2892.52V2041.6H2898.49V2040.6H2901.47V2034.3H2904.46V2038.8H2907.44V2040.6H2910.42V2065.6H2913.41V2116.9H2916.39V2095H2919.37V2041.6H2925.34V2040.6H2928.32V2034.3H2931.31V2038.8H2934.29V2040.6H2937.27V2064.3H2940.26V2116.9H2943.24V2095H2946.22V2041.6H2952.19V2040.6H2955.17V2034.3H2958.15V2038.8H2961.14V2040.6H2964.12V2064.3H2967.1V2116.9H2970.09V2091.4H2973.07V2041.6H2979.04V2040.6H2982.02V2034.3H2985V2038.8H2987.99V2040.6H2990.97V2066.8H2993.95V2116.9H2996.94V2095H2999.92V2041.6H3005.89V2040.6H3008.87V2034.3H3011.85V2038.8H3014.84V2040.6H3017.82V2064.3H3020.8V2116H3023.79V2086.8H3026.77V2041.6H3032.74V2040.6H3035.72V2034.3H3038.7V2038.8H3041.69V2040.6H3044.67V2066.8H3047.65V2116H3050.64V2090.4H3053.62V2041.6H3059.59V2040.6H3062.57V2034.3H3065.55V2038.8H3068.54V2040.6H3071.52V2064.3H3074.5V2116H3077.49V2094.1H3080.47V2041.6H3086.44V2040.6H3089.42V2034.3H3092.4V2038.8H3095.39V2040.6H3098.37V2064.3H3101.35V2114.6H3104.34V2089H3107.32V2041.6H3113.29V2040.6H3116.27V2034.3H3119.25V2038.8H3122.24V2040.6H3125.22V2064.3H3128.2V2112.2H3131.19V2090.3H3134.17V2041.6H3140.14V2040.6H3143.12V2034.3H3146.1V2038.8H3149.09V2040.6H3152.07V2069.2H3155.05V2111.2H3158.04V2082H3161.02V2041.6H3166.99V2040.6H3169.97V2034.3H3172.95V2038.8H3175.94V2040.6H3178.92V2066.8H3181.9V2111.2H3184.89V2085.7H3187.87V2041.6H3193.84V2040.6H3196.82V2034.3H3199.8V2038.8H3202.79V2040.6H3205.77V2065.6H3208.75V2109.8H3211.74V2084.3H3214.72V2041.6H3220.69V2040.6H3223.67V2034.3H3226.65V2038.8H3229.64V2040.6H3232.62V2064.3H3235.6V2108.4H3238.59V2086.5H3241.57V2041.6H3247.54V2040.6H3250.52V2034.3H3253.5V2038.8H3256.48V2040.6H3259.47V2064.3H3262.45V2106H3265.43V2080.5H3268.42V2041.6H3274.38V2040.6H3277.37V2034.3H3280.35V2038.8H3283.33V2040.6H3286.32V2065.6H3289.3V2103.7H3292.28V2078.1H3295.27V2041.6H3301.23V2040.6H3304.22V2034.3H3307.2V2038.8H3310.18V2040.6H3313.17V2066.8H3316.15V2102.2H3319.13V2076.7H3322.12V2041.6H3328.08V2040.6H3331.07V2034.3H3334.05V2038.8H3337.03V2040.6H3340.02V2066.8H3343V2104.6H3345.98V2079H3348.97V2041.6H3354.93V2040.6H3357.92V2034.3H3360.9V2038.8H3363.88V2040.6H3366.87V2065.6H3369.85V2106H3372.83V2080.5H3375.82V2041.6H3381.78V2040.6H3384.77V2034.3H3387.75V2038.8H3390.73V2040.6H3393.72V2064.3H3396.7V2106H3399.68V2080.5H3402.67V2041.6H3408.63V2040.6H3411.62V2034.3H3414.6V2038.8H3417.58V2040.6H3420.57V2066.8H3423.55V2108.4H3426.53V2082.8H3429.52V2041.6H3435.48V2040.6H3438.47V2034.3H3441.45V2038.8H3444.43V2040.6H3447.42V2065.6H3450.4V2108.4H3453.38V2082.8H3456.37V2041.6H3462.33V2040.6H3465.32V2034.3H3468.3V2038.8H3471.28V2040.6H3474.27V2065.6H3477.25V2114.6H3480.23V2092.6H3483.22V2041.6H3489.18V2040.6H3492.17V2034.3H3495.15V2038.8H3498.13V2040.6H3501.12V2066.8H3504.1V2108.4H3507.08V2086.5H3510.07V2041.6H3516.03V2040.6H3519.02V2034.3H3522V2038.8H3524.98V2040.6H3527.97V2066.8H3530.95V2113.6H3533.93V2084.4H3536.92V2041.6H3542.88V2040.6H3545.87V2034.3H3548.85V2038.8H3551.83V2040.6H3554.81V2065.6H3557.8V2114.6H3560.78V2085.3H3563.76V2041.6H3569.73V2040.6H3572.71V2034.3H3575.7V2038.8H3578.68V2040.6H3581.66V2065.6H3584.65V2116H3587.63V2086.8H3590.61V2041.6H3596.58V2040.6H3599.56V2034.3H3602.55V2038.8H3605.53V2040.6H3608.51V2066.8H3611.5V2114.6H3614.48V2085.3H3617.46V2041.6H3623.43V2040.6H3626.41V2034.3H3629.4V2038.8H3632.38V2040.6H3635.36V2069.2H3638.35V2116.9H3641.33V2087.7H3644.31V2041.6H3650.28V2040.6H3653.26V2034.3H3656.25V2038.8H3659.23V2040.6H3662.21V2065.6H3665.2V2116.9H3668.18V2091.4H3671.16V2041.6H3677.13V2040.6H3680.11V2034.3H3683.1V2038.8H3686.08V2040.6H3689.06V2066.8H3692.05V2116H3695.03V2094.1H3698.01V2041.6H3703.98V2040.6H3706V2152Z" fill="#9999ff"/><path d="M1833.5 1908V2152M1853.5 1908V2152M1873.5 1908V2152M1893.5 1908V2152M1913.5 1908V2152M1934.5 1908V2152M1954.5 1908V2152M1974.5 1908V2152M1994.5 1908V2152M2014.5 1908V2152M2034.5 1908V2152M2054.5 1908V2152M2074.5 1908V2152M2094.5 1908V2152M2114.5 1908V2152M2134.5 1908V2152M2154.5 1908V2152M2174.5 1908V2152M2194.5 1908V2152M2214.5 1908V2152M2234.5 1908V2152M2254.5 1908V2152M2274.5 1908V2152M2294.5 1908V2152M2314.5 1908V2152M2334.5 1908V2152M2354.5 1908V2152M2374.5 1908V2152M2394.5 1908V2152M2414.5 1908V2152M2434.5 1908V2152M2454.5 1908V2152M2474.5 1908V2152M2494.5 1908V2152M2514.5 1908V2152M2534.5 1908V2152M2554.5 1908V2152M2574.5 1908V2152M2594.5 1908V2152M2614.5 1908V2152M2634.5 1908V2152M2654.5 1908V2152M2674.5 1908V2152M2694.5 1908V2152M2714.5 1908V2152M2734.5 1908V2152M2754.5 1908V2152M2774.5 1908V2152M2794.5 1908V2152M2814.5 1908V2152M2834.5 1908V2152M2854.5 1908V2152M2874.5 1908V2152M2894.5 1908V2152M2914.5 1908V2152M2934.5 1908V2152M2954.5 1908V2152M2974.5 1908V2152M2994.5 1908V2152M3014.5 1908V2152M3034.5 1908V2152M3054.5 1908V2152M3074.5 1908V2152M3094.5 1908V2152M3114.5 1908V2152M3134.5 1908V2152M3154.5 1908V2152M3174.5 1908V2152M3194.5 1908V2152M3214.5 1908V2152M3234.5 1908V2152M3254.5 1908V2152M3274.5 1908V2152M3294.5 1908V2152M3314.5 1908V2152M3334.5 1908V2152M3354.5 1908V2152M3374.5 1908V2152M3394.5 1908V2152M3414.5 1908V2152M3434.5 1908V2152M3454.5 1908V2152M3474.5 1908V2152M3494.5 1908V2152M3514.5 1908V2152M3534.5 1908V2152M3554.5 1908V2152M3574.5 1908V2152M3594.5 1908V2152M3614.5 1908V2152M3634.5 1908V2152M3654.5 1908V2152M3674.5 1908V2152M3694.5 1908V2152M1813 2131.5H3706M1813 2111.5H3706M1813 2091.5H3706M1813 2071.5H3706M1813 2051.5H3706M1813 2031.5H3706M1813 2011.5H3706M1813 1991.5H3706M1813 1971.5H3706M1813 1951.5H3706M1813 1931.5H3706M1813 1911.5H3706" stroke="#a9c3ea" stroke-width="1" fill="none"/><rect x="1814" y="1908" width="26" height="244" fill="url(#gsh)"/><path d="M1914 2152H1919.97V1965.1H1922.95V1968.3H1925.93V1969H1928.92V1969.7H1931.9V1969.8H1934.88V1969.3H1937.87V1969.4H1940.85V1969.5H1943.83V1969.6H1946.82V1970.4H1949.8V1968H1952.78V1969.4H1955.77V1970.1H1958.75V1970.2H1961.73V1968.5H1964.72V1968.6H1967.7V1969.9H1970.68V1970H1973.67V1970.7H1976.65V1970.8H1979.63V1970.3H1982.62V1971.1H1985.6V1971.2H1988.58V1970.7H1991.57V1970.8H1994.55V1971.5H1997.53V1971.6H2000.52V1971.1H2003.5V2087.5H2006.48V2055.2H2009.47V2041.2H2015.43V2033.3H2018.42V2037.6H2021.4V2038.8H2024.38V2037.6H2027.37V2108.5H2030.35V2083H2033.33V2041.6H2039.3V2040.6H2042.28V2034.3H2045.27V2038.8H2048.25V2040.6H2051.23V2035.1H2054.22V2111H2057.2V2081.8H2060.18V2041.6H2066.15V2040.6H2069.13V2034.3H2072.11V2038.8H2075.1V2040.6H2078.08V2035.1H2081.06V2111.7H2084.05V2082.5H2087.03V2041.6H2093V2040.6H2095.98V2034.3H2098.96V2038.8H2101.95V2040.6H2104.93V2035.1H2107.91V2114H2110.9V2088.4H2113.88V2041.6H2119.85V2040.6H2122.83V2034.3H2125.81V2038.8H2128.8V2040.6H2131.78V2035.1H2134.76V2116H2137.75V2094H2140.73V2041.6H2146.7V2040.6H2149.68V2034.3H2152.66V2038.8H2155.65V2040.6H2158.63V2064.3H2161.61V2115H2164.6V2085.8H2167.58V2041.6H2173.55V2040.6H2176.53V2034.3H2179.51V2038.8H2182.5V2040.6H2185.48V2069.2H2188.46V2117.1H2191.45V2087.8H2194.43V2041.6H2200.4V2040.6H2203.38V2034.3H2206.36V2038.8H2209.35V2040.6H2212.33V2065.6H2215.31V2116H2218.3V2094H2221.28V2041.6H2227.25V2040.6H2230.23V2034.3H2233.21V2038.8H2236.2V2040.6H2239.18V2065.6H2242.16V2116H2245.15V2090.4H2248.13V2041.6H2254.1V2040.6H2257.08V2034.3H2260.06V2038.8H2263.05V2040.6H2266.03V2064.3H2269.01V2115H2272V2093.1H2274.98V2041.6H2280.95V2040.6H2283.93V2034.3H2286.91V2038.8H2289.9V2040.6H2292.88V2064.3H2295.86V2114H2298.85V2092.1H2301.83V2041.6H2307.8V2040.6H2310.78V2034.3H2313.76V2038.8H2316.75V2040.6H2319.73V2064.3H2322.71V2115H2325.7V2085.8H2328.68V2041.6H2334.65V2040.6H2337.63V2034.3H2340.61V2038.8H2343.6V2040.6H2346.58V2064.3H2349.56V2115H2352.55V2085.8H2355.53V2041.6H2361.49V2040.6H2364.48V2034.3H2367.46V2038.8H2370.44V2040.6H2373.43V2065.6H2376.41V2110.4H2379.39V2084.8H2382.38V2041.6H2388.34V2040.6H2391.33V2034.3H2394.31V2038.8H2397.29V2040.6H2400.28V2069.2H2403.26V2111.7H2406.24V2082.5H2409.23V2041.6H2415.19V2040.6H2418.18V2034.3H2421.16V2038.8H2424.14V2040.6H2427.13V2064.3H2430.11V2110.4H2433.09V2084.8H2436.08V2041.6H2442.04V2040.6H2445.03V2034.3H2448.01V2038.8H2450.99V2040.6H2453.98V2069.2H2456.96V2108.5H2459.94V2086.6H2462.93V2041.6H2468.89V2040.6H2471.88V2034.3H2474.86V2038.8H2477.84V2040.6H2480.83V2065.6H2483.81V2106.3H2486.79V2080.8H2489.78V2041.6H2495.74V2040.6H2498.73V2034.3H2501.71V2038.8H2504.69V2040.6H2507.68V2064.3H2510.66V2103.7H2513.64V2081.7H2516.63V2041.6H2522.59V2040.6H2525.58V2034.3H2528.56V2038.8H2531.54V2040.6H2534.53V2066.8H2537.51V2103.7H2540.49V2081.7H2543.48V2041.6H2549.44V2040.6H2552.43V2034.3H2555.41V2038.8H2558.39V2040.6H2561.38V2069.2H2564.36V2101.3H2567.34V2072.1H2570.33V2041.6H2576.29V2040.6H2579.28V2034.3H2582.26V2038.8H2585.24V2040.6H2588.23V2064.3H2591.21V2102.2H2594.19V2073H2597.18V2041.6H2603.14V2040.6H2606.13V2034.3H2609.11V2038.8H2612.09V2040.6H2615.08V2069.2H2618.06V2101.3H2621.04V2072.1H2624.03V2041.6H2629.99V2040.6H2632.98V2034.3H2635.96V2038.8H2638.94V2040.6H2641.93V2064.3H2644.91V2104.6H2647.89V2082.7H2650.88V2041.6H2656.84V2040.6H2659.82V2034.3H2662.81V2038.8H2665.79V2040.6H2668.77V2065.6H2671.76V2107.5H2674.74V2085.5H2677.72V2041.6H2683.69V2040.6H2686.67V2034.3H2689.66V2038.8H2692.64V2040.6H2695.62V2069.2H2698.61V2108.4H2701.59V2086.5H2704.57V2041.6H2710.54V2040.6H2713.52V2034.3H2716.51V2038.8H2719.49V2040.6H2722.47V2069.2H2725.46V2108.4H2728.44V2082.8H2731.42V2041.6H2737.39V2040.6H2740.37V2034.3H2743.36V2038.8H2746.34V2040.6H2749.32V2065.6H2752.31V2111.2H2755.29V2085.7H2758.27V2041.6H2764.24V2040.6H2767.22V2034.3H2770.21V2038.8H2773.19V2040.6H2776.17V2069.2H2779.16V2113.6H2782.14V2084.4H2785.12V2041.6H2791.09V2040.6H2794.07V2034.3H2797.06V2038.8H2800.04V2040.6H2803.02V2064.3H2806.01V2113.6H2808.99V2084.4H2811.97V2041.6H2817.94V2040.6H2820.92V2034.3H2823.91V2038.8H2826.89V2040.6H2829.87V2065.6H2832.86V2114.6H2835.84V2089H2838.82V2041.6H2844.79V2040.6H2847.77V2034.3H2850.76V2038.8H2853.74V2040.6H2856.72V2066.8H2859.71V2116H2862.69V2094.1H2865.67V2041.6H2871.64V2040.6H2874.62V2034.3H2877.61V2038.8H2880.59V2040.6H2883.57V2065.6H2886.56V2116H2889.54V2090.4H2892.52V2041.6H2898.49V2040.6H2901.47V2034.3H2904.46V2038.8H2907.44V2040.6H2910.42V2065.6H2913.41V2116.9H2916.39V2095H2919.37V2041.6H2925.34V2040.6H2928.32V2034.3H2931.31V2038.8H2934.29V2040.6H2937.27V2064.3H2940.26V2116.9H2943.24V2095H2946.22V2041.6H2952.19V2040.6H2955.17V2034.3H2958.15V2038.8H2961.14V2040.6H2964.12V2064.3H2967.1V2116.9H2970.09V2091.4H2973.07V2041.6H2979.04V2040.6H2982.02V2034.3H2985V2038.8H2987.99V2040.6H2990.97V2066.8H2993.95V2116.9H2996.94V2095H2999.92V2041.6H3005.89V2040.6H3008.87V2034.3H3011.85V2038.8H3014.84V2040.6H3017.82V2064.3H3020.8V2116H3023.79V2086.8H3026.77V2041.6H3032.74V2040.6H3035.72V2034.3H3038.7V2038.8H3041.69V2040.6H3044.67V2066.8H3047.65V2116H3050.64V2090.4H3053.62V2041.6H3059.59V2040.6H3062.57V2034.3H3065.55V2038.8H3068.54V2040.6H3071.52V2064.3H3074.5V2116H3077.49V2094.1H3080.47V2041.6H3086.44V2040.6H3089.42V2034.3H3092.4V2038.8H3095.39V2040.6H3098.37V2064.3H3101.35V2114.6H3104.34V2089H3107.32V2041.6H3113.29V2040.6H3116.27V2034.3H3119.25V2038.8H3122.24V2040.6H3125.22V2064.3H3128.2V2112.2H3131.19V2090.3H3134.17V2041.6H3140.14V2040.6H3143.12V2034.3H3146.1V2038.8H3149.09V2040.6H3152.07V2069.2H3155.05V2111.2H3158.04V2082H3161.02V2041.6H3166.99V2040.6H3169.97V2034.3H3172.95V2038.8H3175.94V2040.6H3178.92V2066.8H3181.9V2111.2H3184.89V2085.7H3187.87V2041.6H3193.84V2040.6H3196.82V2034.3H3199.8V2038.8H3202.79V2040.6H3205.77V2065.6H3208.75V2109.8H3211.74V2084.3H3214.72V2041.6H3220.69V2040.6H3223.67V2034.3H3226.65V2038.8H3229.64V2040.6H3232.62V2064.3H3235.6V2108.4H3238.59V2086.5H3241.57V2041.6H3247.54V2040.6H3250.52V2034.3H3253.5V2038.8H3256.48V2040.6H3259.47V2064.3H3262.45V2106H3265.43V2080.5H3268.42V2041.6H3274.38V2040.6H3277.37V2034.3H3280.35V2038.8H3283.33V2040.6H3286.32V2065.6H3289.3V2103.7H3292.28V2078.1H3295.27V2041.6H3301.23V2040.6H3304.22V2034.3H3307.2V2038.8H3310.18V2040.6H3313.17V2066.8H3316.15V2102.2H3319.13V2076.7H3322.12V2041.6H3328.08V2040.6H3331.07V2034.3H3334.05V2038.8H3337.03V2040.6H3340.02V2066.8H3343V2104.6H3345.98V2079H3348.97V2041.6H3354.93V2040.6H3357.92V2034.3H3360.9V2038.8H3363.88V2040.6H3366.87V2065.6H3369.85V2106H3372.83V2080.5H3375.82V2041.6H3381.78V2040.6H3384.77V2034.3H3387.75V2038.8H3390.73V2040.6H3393.72V2064.3H3396.7V2106H3399.68V2080.5H3402.67V2041.6H3408.63V2040.6H3411.62V2034.3H3414.6V2038.8H3417.58V2040.6H3420.57V2066.8H3423.55V2108.4H3426.53V2082.8H3429.52V2041.6H3435.48V2040.6H3438.47V2034.3H3441.45V2038.8H3444.43V2040.6H3447.42V2065.6H3450.4V2108.4H3453.38V2082.8H3456.37V2041.6H3462.33V2040.6H3465.32V2034.3H3468.3V2038.8H3471.28V2040.6H3474.27V2065.6H3477.25V2114.6H3480.23V2092.6H3483.22V2041.6H3489.18V2040.6H3492.17V2034.3H3495.15V2038.8H3498.13V2040.6H3501.12V2066.8H3504.1V2108.4H3507.08V2086.5H3510.07V2041.6H3516.03V2040.6H3519.02V2034.3H3522V2038.8H3524.98V2040.6H3527.97V2066.8H3530.95V2113.6H3533.93V2084.4H3536.92V2041.6H3542.88V2040.6H3545.87V2034.3H3548.85V2038.8H3551.83V2040.6H3554.81V2065.6H3557.8V2114.6H3560.78V2085.3H3563.76V2041.6H3569.73V2040.6H3572.71V2034.3H3575.7V2038.8H3578.68V2040.6H3581.66V2065.6H3584.65V2116H3587.63V2086.8H3590.61V2041.6H3596.58V2040.6H3599.56V2034.3H3602.55V2038.8H3605.53V2040.6H3608.51V2066.8H3611.5V2114.6H3614.48V2085.3H3617.46V2041.6H3623.43V2040.6H3626.41V2034.3H3629.4V2038.8H3632.38V2040.6H3635.36V2069.2H3638.35V2116.9H3641.33V2087.7H3644.31V2041.6H3650.28V2040.6H3653.26V2034.3H3656.25V2038.8H3659.23V2040.6H3662.21V2065.6H3665.2V2116.9H3668.18V2091.4H3671.16V2041.6H3677.13V2040.6H3680.11V2034.3H3683.1V2038.8H3686.08V2040.6H3689.06V2066.8H3692.05V2116H3695.03V2094.1H3698.01V2041.6H3703.98V2040.6H3706" stroke="#0000ff" stroke-width="1.3" fill="none"/></svg>

<div id="task">
<svg style="position:absolute;left:0;top:0;width:3840px;height:27px" viewBox="0 2133 3840 27"><defs><linearGradient id="gwin" x1="0" y1="0" x2="1" y2="1"><stop offset="0" stop-color="#55d4ff"/><stop offset="1" stop-color="#1389dd"/></linearGradient><linearGradient id="gedge" x1="0" y1="0" x2="1" y2="0"><stop offset="0" stop-color="#1b9de2"/><stop offset=".6" stop-color="#27c3c8"/><stop offset="1" stop-color="#54d97a"/></linearGradient><linearGradient id="gor" x1="0" y1="0" x2="0" y2="1"><stop offset="0" stop-color="#ff9a0a"/><stop offset="1" stop-color="#f28200"/></linearGradient></defs><rect x="1991.7" y="2139" width="56.3" height="30" rx="6" fill="#f5f5f8" stroke="#e9e9ee" stroke-width="1"/><rect x="1473" y="2150" width="16" height="16" fill="url(#gwin)"/><rect x="1491" y="2150" width="16" height="16" fill="url(#gwin)"/><circle cx="1555.5" cy="2163.5" r="12" fill="none" stroke="#1d1d1d" stroke-width="3.6"/><path d="M1614 2166L1620 2152.5H1628L1633.5 2166Z" fill="#2a8be0"/><path d="M1620 2152.5H1628L1624 2160Z" fill="#5fc0f6"/><rect x="1673" y="2157" width="10" height="10" fill="#7c7c7c"/><rect x="1680.5" y="2150" width="27" height="16" rx="1.5" fill="#f6f6f6" stroke="#dcdcdc" stroke-width=".6"/><path d="M1738 2166V2152.5a1.5 1.5 0 0 1 1.5-1.5H1750l3 3H1772a1.8 1.8 0 0 1 1.8 1.8V2166Z" fill="#e9ab12"/><path d="M1738 2166V2155.5h35.8V2166Z" fill="#ffd45e"/><circle cx="1822" cy="2166" r="17" fill="url(#gedge)"/><path d="M1810 2166a12 10 0 0 1 24 0Z" fill="#1668b8" opacity=".55"/><rect x="1870.5" y="2153" width="34.5" height="14" rx="1.5" fill="#dff0fb" stroke="#38a4e6" stroke-width="1.6"/><path d="M1884 2166v-6h4v6M1892 2166v-9h4v9" fill="none" stroke="#f39a1e" stroke-width="2"/><circle cx="1953.3" cy="2165.5" r="17.3" fill="#e8392b"/><circle cx="1953.3" cy="2165.5" r="7.5" fill="#fff"/><path d="M2004.5 2160v-4.5a3 3 0 0 1 3-3h2.5M2013 2152.5h4.500M2020 2152.500h3.500" fill="none" stroke="#d9402e" stroke-width="3"/><path d="M2023 2154l5 5v8h-5z" fill="#a9a9ad"/><rect x="2068.500" y="2149" width="33.500" height="18" fill="#0648f5" stroke="#00d8ff" stroke-width="1.4"/><path d="M2079.500 2149v18M2090.500 2149v18" stroke="#00d8ff" stroke-width="1.4"/><path d="M2071.500 2154h5M2082.500 2154h5M2093.500 2154h5M2071.500 2158.500h5M2082.500 2158.500h5M2093.500 2158.500h5" stroke="#ffd800" stroke-width="1.4"/><path d="M2136 2166l2-9 4-4 3 3 4 1 3-6 5-1.500 2 3-3 5-1 8.500Z" fill="#c31f24"/><circle cx="2143" cy="2158.500" r="2" fill="#fff"/><circle cx="2143.400" cy="2158.800" r=".9" fill="#222"/><rect x="2200" y="2149" width="36" height="18" fill="#0c0c0c"/><circle cx="2218" cy="2167" r="13.500" fill="none" stroke="#a8e0dc" stroke-width="2.400"/><path d="M2218 2167l-9-9M2218 2167l-4-12M2218 2167l2-13M2218 2167l8-10.500" stroke="#a8e0dc" stroke-width="1.800"/><rect x="2266" y="2149" width="36" height="18" fill="url(#gor)"/><path d="M2281 2167c-1-5 2-8 7-11-1 4 0 7 1 11Z" fill="#fff"/><rect x="2334" y="2151.500" width="32" height="16" rx="4" fill="#7fb4d8" stroke="#51718a" stroke-width="1.300"/><path d="M2344 2166v-9.500M2346 2159l6 3.500" stroke="#fff" stroke-width="2.400"/><path d="M3567 2160.500a7 7 0 0 1 13 0M3590 2158.500l3 2M3596 2157l2 3M3606 2157.500h10M3610 2157.500l-1.500 3" fill="none" stroke="#222" stroke-width="1.500"/><path d="M3788 2160.500a7 7 0 0 1 12 0" fill="none" stroke="#222" stroke-width="1.600"/></svg>
<span style="position:absolute;left:3716px;top:-0.500px;font:14px/14px 'Liberation Sans',sans-serif;color:#d6d6de">0.000</span>
<span style="position:absolute;left:3731px;top:15.500px;font:18.400px/18px 'Liberation Sans',sans-serif;color:#1a1a1a;white-space:pre">20:38</span>
</div>
<div id="topline"></div>
</body></html>
